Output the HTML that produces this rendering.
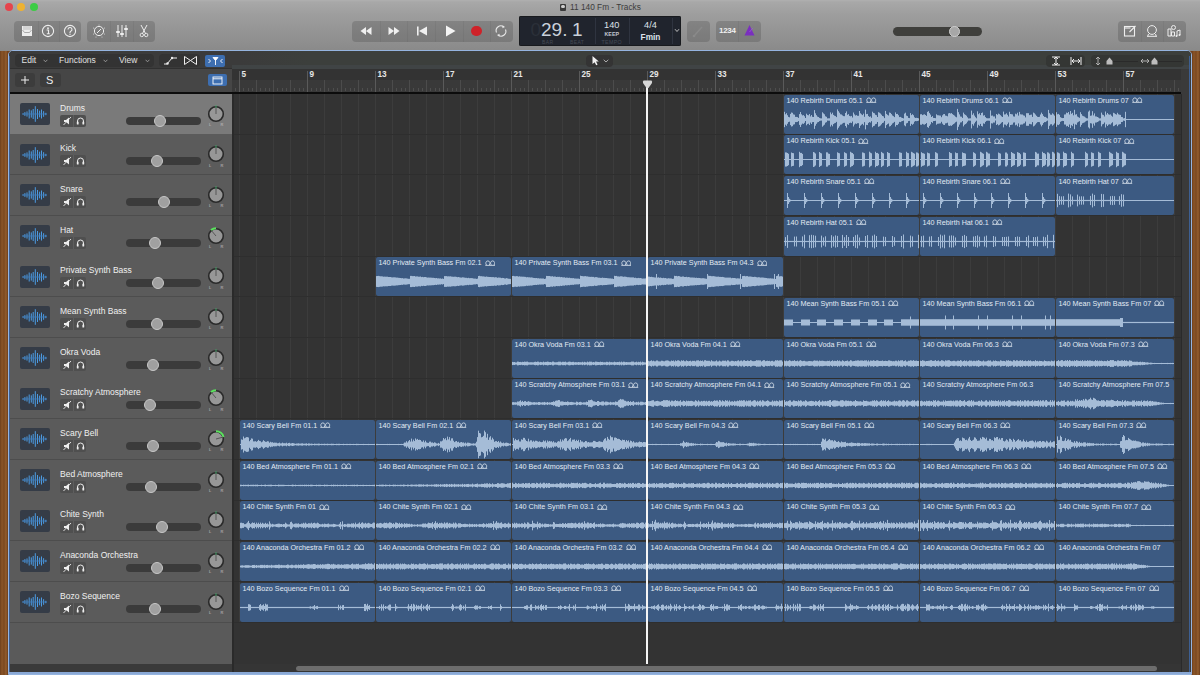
<!DOCTYPE html><html><head><meta charset="utf-8"><style>
*{box-sizing:border-box;margin:0;padding:0}
html,body{width:1200px;height:675px;overflow:hidden;background:#7b4a22;font-family:"Liberation Sans", sans-serif}
.abs{position:absolute}
#wood{position:absolute;left:0;top:0;width:1200px;height:675px;background:repeating-linear-gradient(90deg,#6e3f1c 0px,#8a5528 2px,#7a4820 4px,#935d2e 6px,#6a3b19 8px)}
#toolbar{position:absolute;left:0;top:0;width:1200px;height:51px;background:linear-gradient(#b0b0b0 0px,#a8a8a8 2px,#9e9e9e 14px,#8a8a8a 50px)}
.grp{position:absolute;background:rgba(40,40,40,0.2);border-radius:4px}
.div{position:absolute;top:0;bottom:0;width:1px;background:rgba(70,70,70,0.09)}
#frame{position:absolute;left:8px;top:50px;width:1184px;height:625px;border:1.5px solid #95b4df;border-radius:5px 5px 0 0;background:#3a3a3a;overflow:hidden}
.lbl{color:#e6e6e6;font-size:8.5px;white-space:nowrap}
.row{position:absolute;left:0;width:222px;background:#5d5d5d;border-bottom:1px solid #4c4c4c}
.reg{position:absolute;background:#3c5a82;border-radius:2px;overflow:hidden}
.rt{position:absolute;left:3px;top:1px;font-size:7.2px;color:#e3eaf3;white-space:nowrap;line-height:9px}
.rl{position:absolute;top:0;height:100%;width:1px;background:#1f3452}
</style></head><body>
<div id="wood"></div>
<div id="toolbar">
<div class="abs" style="left:5px;top:2.5px;width:8px;height:8px;border-radius:50%;background:#e6444c;border:0"></div>
<div class="abs" style="left:17.3px;top:2.5px;width:8px;height:8px;border-radius:50%;background:#eeb232;border:0"></div>
<div class="abs" style="left:30px;top:2.5px;width:8px;height:8px;border-radius:50%;background:#3ccc45;border:0"></div>
<div class="abs" style="left:559.5px;top:3.5px;width:6.5px;height:7.5px;background:#3a3a3a;border-radius:1px"></div><div class="abs" style="left:561px;top:4.5px;width:3.5px;height:3.5px;border-radius:50%;background:#d0d0d0"></div>
<div class="abs" style="left:570px;top:3px;font-size:8.3px;color:#3c3c3c;line-height:8.3px;white-space:nowrap">11 140 Fm - Tracks</div>
<div class="grp" style="left:14px;top:21px;width:67px;height:20.5px;"><div class="div" style="left:24px"></div><div class="div" style="left:45px"></div></div>
<div class="grp" style="left:87px;top:21px;width:68px;height:20.5px;"><div class="div" style="left:23px"></div><div class="div" style="left:46px"></div></div>
<div class="grp" style="left:352px;top:21px;width:161px;height:20.5px;"><div class="div" style="left:28px"></div><div class="div" style="left:55px"></div><div class="div" style="left:83px"></div><div class="div" style="left:111px"></div><div class="div" style="left:138px"></div></div>
<div class="grp" style="left:687px;top:21px;width:23px;height:20.5px;"></div>
<div class="grp" style="left:716px;top:21px;width:45px;height:20.5px;"><div class="div" style="left:22px"></div></div>
<div class="grp" style="left:1118px;top:21px;width:68px;height:20.5px;"><div class="div" style="left:23px"></div><div class="div" style="left:45px"></div></div>
<svg class="abs" style="left:20px;top:24px;" width="14" height="14" viewBox="0 0 14 14"><path d="M2,2 h10 v4 h-10z M2,6 h10 v6 h-10z" fill="#eee"/><path d="M2.5,6 l2,2.5 h5 l2,-2.5" fill="none" stroke="#999" stroke-width="0.8"/><path d="M3,2.8 h8 M3,4 h8 M3,5.2 h8" stroke="#aaa" stroke-width="0.5"/></svg>
<svg class="abs" style="left:41px;top:24px;" width="14" height="14" viewBox="0 0 14 14"><circle cx="7" cy="7" r="5.6" fill="none" stroke="#eee" stroke-width="1.1"/><circle cx="7" cy="4.2" r="0.9" fill="#eee"/><path d="M5.6,6 h1.9 v3.8 h1 M5.8,9.8 h3" fill="none" stroke="#eee" stroke-width="1.1"/></svg>
<svg class="abs" style="left:63px;top:24px;" width="14" height="14" viewBox="0 0 14 14"><circle cx="7" cy="7" r="5.6" fill="none" stroke="#eee" stroke-width="1.1"/><path d="M5,5.5 a2,2 0 1 1 2.8,1.8 q-0.8,0.4 -0.8,1.3 v0.5" fill="none" stroke="#eee" stroke-width="1.1"/><circle cx="7" cy="10.3" r="0.7" fill="#eee"/></svg>
<svg class="abs" style="left:92px;top:24px;" width="14" height="14" viewBox="0 0 14 14"><circle cx="7" cy="7" r="4.6" fill="none" stroke="#eee" stroke-width="1"/><path d="M5,9 L9,5" stroke="#eee" stroke-width="1"/><g fill="#ddd"><circle cx="7" cy="1" r="0.5"/><circle cx="1.5" cy="4" r="0.5"/><circle cx="12.5" cy="4" r="0.5"/><circle cx="1.5" cy="10" r="0.5"/><circle cx="12.5" cy="10" r="0.5"/><circle cx="4" cy="13" r="0.5"/><circle cx="10" cy="13" r="0.5"/></g></svg>
<svg class="abs" style="left:115px;top:24px;" width="14" height="14" viewBox="0 0 14 14"><path d="M3,1 v12 M7,1 v12 M11,1 v12" stroke="#eee" stroke-width="1"/><path d="M1.2,8 h3.6 M5.2,10 h3.6 M9.2,5 h3.6" stroke="#eee" stroke-width="1.8"/></svg>
<svg class="abs" style="left:137px;top:24px;" width="14" height="14" viewBox="0 0 14 14"><path d="M4,1 L8.5,9.5 M10,1 L5.5,9.5" stroke="#eee" stroke-width="1"/><circle cx="4.8" cy="11" r="1.7" fill="none" stroke="#eee" stroke-width="0.9"/><circle cx="9.2" cy="11" r="1.7" fill="none" stroke="#eee" stroke-width="0.9"/></svg>
<svg class="abs" style="left:359px;top:25px;" width="14" height="12" viewBox="0 0 14 12"><path d="M7,2 L1.5,6 L7,10z M12.5,2 L7,6 L12.5,10z" fill="#f0f0f0"/></svg>
<svg class="abs" style="left:387px;top:25px;" width="14" height="12" viewBox="0 0 14 12"><path d="M1.5,2 L7,6 L1.5,10z M7,2 L12.5,6 L7,10z" fill="#f0f0f0"/></svg>
<svg class="abs" style="left:415px;top:25px;" width="14" height="12" viewBox="0 0 14 12"><path d="M2,1.5 h1.6 v9 h-1.6z M12,1.5 L4,6 L12,10.5z" fill="#f0f0f0"/></svg>
<svg class="abs" style="left:443px;top:25px;" width="14" height="12" viewBox="0 0 14 12"><path d="M3,0.5 L12.5,6 L3,11.5z" fill="#f4f4f4"/></svg>
<div class="abs" style="left:471px;top:25.5px;width:10.5px;height:10.5px;border-radius:50%;background:#cf2229"></div>
<svg class="abs" style="left:494px;top:24px;" width="14" height="14" viewBox="0 0 14 14"><path d="M2.5,8.5 A4.8,4.8 0 0 1 9.5,2.6 M11.5,5.5 A4.8,4.8 0 0 1 4.5,11.4" fill="none" stroke="#e8e8e8" stroke-width="1.1"/><path d="M8.6,1.2 L11,2.9 L8.4,4.3z M5.4,12.8 L3,11.1 L5.6,9.7z" fill="#e8e8e8"/></svg>
<div class="abs" style="left:519px;top:16px;width:162px;height:30px;background:#20242d;border-radius:2px;box-shadow:inset 0 0 0 0.5px #111">
<div class="abs" style="left:75.5px;top:2px;width:1px;height:26px;background:#2f3440"></div>
<div class="abs" style="left:109.5px;top:2px;width:1px;height:26px;background:#2f3440"></div>
<div class="abs" style="left:153px;top:2px;width:1px;height:26px;background:#2f3440"></div>
<div class="abs" style="left:11.5px;top:4.3px;font-size:19px;color:#2b3039;line-height:19px">0</div>
<div class="abs" style="left:22px;top:4.3px;font-size:19px;color:#c9d0da;line-height:19px">29.</div>
<div class="abs" style="left:53px;top:4.3px;font-size:19px;color:#c9d0da;line-height:19px">1</div>
<div class="abs" style="left:23px;top:23.9px;font-size:5px;color:#454b56;line-height:5px;letter-spacing:0.4px">BAR</div>
<div class="abs" style="left:51px;top:23.9px;font-size:5px;color:#454b56;line-height:5px;letter-spacing:0.4px">BEAT</div>
<div class="abs" style="left:76px;top:4.7px;width:33.5px;text-align:center;font-size:9.2px;color:#dde2ea;line-height:9.2px">140</div>
<div class="abs" style="left:76px;top:16.1px;width:33.5px;text-align:center;font-size:5.3px;font-weight:bold;color:#c0c6d0;line-height:5.3px">KEEP</div>
<div class="abs" style="left:76px;top:23.9px;width:33.5px;text-align:center;font-size:5.3px;color:#454b56;line-height:5.3px;letter-spacing:0.3px">TEMPO</div>
<div class="abs" style="left:110px;top:4.7px;width:43px;text-align:center;font-size:9.2px;color:#dde2ea;line-height:9.2px">4/4</div>
<div class="abs" style="left:110px;top:16.7px;width:43px;text-align:center;font-size:8.3px;color:#dde2ea;line-height:8.3px;font-weight:bold">Fmin</div>
<svg class="abs" style="left:155px;top:12px;" width="6" height="5" viewBox="0 0 6 5"><path d="M1,1.2 L3,3.5 L5,1.2" fill="none" stroke="#ccc" stroke-width="0.9"/></svg>
</div>
<svg class="abs" style="left:691px;top:24px;" width="15" height="15" viewBox="0 0 15 15"><path d="M3,12 L11,3" stroke="#8a8a8a" stroke-width="1.4"/><circle cx="3" cy="12" r="1.3" fill="#8a8a8a"/></svg>
<div class="abs" style="left:719px;top:26px;font-size:8px;font-weight:bold;color:#f0f0f0;line-height:10px;letter-spacing:-0.3px">1234</div>
<svg class="abs" style="left:743px;top:24px;" width="13" height="13" viewBox="0 0 13 13"><path d="M6.5,1 L11.5,11.5 H1.5z" fill="#7a2fbf"/><path d="M6.5,8 L10,4" stroke="#9b5ad8" stroke-width="0.8"/></svg>
<div class="abs" style="left:893px;top:26.5px;width:89px;height:9px;border-radius:4.5px;background:#3f3f3c"></div>
<div class="abs" style="left:948.5px;top:25.5px;width:11px;height:11px;border-radius:50%;background:#a7a7a7;border:1px solid #cfcfcf"></div>
<svg class="abs" style="left:1123px;top:24px;" width="14" height="14" viewBox="0 0 14 14"><rect x="1.5" y="2.5" width="10" height="9.5" fill="none" stroke="#eee" stroke-width="1.1"/><path d="M1.5,4 h6" stroke="#eee" stroke-width="1.1"/><path d="M6.5,8 L12.5,2" stroke="#eee" stroke-width="1.1"/></svg>
<svg class="abs" style="left:1145px;top:24px;" width="14" height="14" viewBox="0 0 14 14"><circle cx="7" cy="6" r="4.4" fill="none" stroke="#eee" stroke-width="1"/><path d="M3.5,10 L2.8,12 M10.5,10 L11.2,12 M2,12.3 h10" stroke="#eee" stroke-width="1"/></svg>
<svg class="abs" style="left:1166px;top:24px;" width="16" height="14" viewBox="0 0 16 14"><path d="M2,5 h3 v7 h-3z M5.5,8 h3 v4 h-3z" fill="none" stroke="#eee" stroke-width="1"/><circle cx="7.5" cy="3.5" r="2" fill="none" stroke="#eee" stroke-width="1"/><path d="M11,12 v-5 l3,-1 v5" fill="none" stroke="#eee" stroke-width="1"/><circle cx="10.5" cy="12" r="1" fill="#eee"/><circle cx="13.5" cy="11" r="1" fill="#eee"/></svg>
</div>
<div id="frame">
<div class="abs" style="left:-9.5px;top:-51.5px;width:1200px;height:675px">
<div class="abs" style="left:9px;top:51px;width:1182px;height:18px;background:linear-gradient(90deg,#3b3b3b 0,#3b3b3b 230px,#3c3f3c 300px,#3c3f3c 100%);border-bottom:1px solid #303030"></div>
<div class="abs" style="left:232px;top:65px;width:959px;height:4px;background:#404445"></div>
<div class="grp" style="left:586px;top:55px;width:27px;height:12px;background:#343434"></div>
<svg class="abs" style="left:591px;top:55.5px;" width="9" height="11" viewBox="0 0 9 11"><path d="M1.5,1 L1.5,9 L3.6,7.2 L5.2,10.2 L6.6,9.5 L5,6.6 L7.8,6.4z" fill="#f0f0f0"/></svg>
<svg class="abs" style="left:603px;top:59px;" width="6" height="4" viewBox="0 0 6 4"><path d="M0.7,0.8 L3,3 L5.3,0.8" fill="none" stroke="#bbb" stroke-width="0.9"/></svg>
<div class="grp" style="left:15px;top:54px;width:139px;height:13px;background:#333333"></div>
<div class="abs lbl" style="left:22px;top:54px;line-height:13px;font-size:8.5px;color:#e0e0e0">Edit</div>
<div class="abs lbl" style="left:59.5px;top:54px;line-height:13px;font-size:8.5px;color:#e0e0e0">Functions</div>
<div class="abs lbl" style="left:119.5px;top:54px;line-height:13px;font-size:8.5px;color:#e0e0e0">View</div>
<svg class="abs" style="left:43.0px;top:59px;" width="5" height="4" viewBox="0 0 5 4"><path d="M0.6,0.8 L2.5,2.8 L4.4,0.8" fill="none" stroke="#aaa" stroke-width="0.8"/></svg>
<svg class="abs" style="left:103.0px;top:59px;" width="5" height="4" viewBox="0 0 5 4"><path d="M0.6,0.8 L2.5,2.8 L4.4,0.8" fill="none" stroke="#aaa" stroke-width="0.8"/></svg>
<svg class="abs" style="left:145.0px;top:59px;" width="5" height="4" viewBox="0 0 5 4"><path d="M0.6,0.8 L2.5,2.8 L4.4,0.8" fill="none" stroke="#aaa" stroke-width="0.8"/></svg>
<div class="grp" style="left:159px;top:54px;width:41px;height:13px;background:#333333"><div class="div" style="left:21px"></div></div>
<svg class="abs" style="left:163px;top:55px;" width="15" height="11" viewBox="0 0 15 11"><path d="M1,9 L4,9 L9,3 L14,3" fill="none" stroke="#eee" stroke-width="1"/><circle cx="4.5" cy="8.5" r="1.2" fill="#eee"/><circle cx="9" cy="3" r="1.2" fill="#eee"/></svg>
<svg class="abs" style="left:183px;top:55px;" width="15" height="11" viewBox="0 0 15 11"><path d="M1.5,1.5 v8 L7.5,5.5z M13.5,1.5 v8 L7.5,5.5z" fill="none" stroke="#eee" stroke-width="1"/></svg>
<div class="abs" style="left:205px;top:55px;width:20.5px;height:12px;background:#3d6eb0;border-radius:2px"></div>
<svg class="abs" style="left:207px;top:56px;" width="17" height="10" viewBox="0 0 17 10"><path d="M1.5,3 L3.5,5 L1.5,7 M15.5,3 L13.5,5 L15.5,7" fill="none" stroke="#fff" stroke-width="0.9"/><path d="M6,1.5 h5 L8.5,4.5z M8.5,4 v5" fill="#fff" stroke="#fff" stroke-width="0.9"/></svg>
<div class="grp" style="left:1046px;top:55px;width:39px;height:12px;background:#343634"></div>
<svg class="abs" style="left:1050px;top:56px;" width="12" height="10" viewBox="0 0 12 10"><path d="M2,1 h8 M2,9 h8 M6,1 v8 M4,3 l2,-2 l2,2 M4,7 l2,2 l2,-2" fill="none" stroke="#eee" stroke-width="1"/></svg>
<svg class="abs" style="left:1070px;top:56px;" width="12" height="10" viewBox="0 0 12 10"><path d="M1,1 v8 M11,1 v8 M2,5 h8 M4,3 l-2,2 l2,2 M8,3 l2,2 l-2,2" fill="none" stroke="#eee" stroke-width="1"/></svg>
<div class="grp" style="left:1091px;top:55px;width:93px;height:12px;background:#343634"></div>
<svg class="abs" style="left:1094px;top:56px;" width="8" height="10" viewBox="0 0 8 10"><path d="M4,1 v8 M2,3 l2,-2 l2,2 M2,7 l2,2 l2,-2" fill="none" stroke="#bbb" stroke-width="0.9"/></svg>
<div class="abs" style="left:1108px;top:61px;width:30px;height:1px;background:#2a2a2a"></div>
<svg class="abs" style="left:1106px;top:57px;" width="7" height="8" viewBox="0 0 7 8"><path d="M3.5,0.5 L6.5,4 V7.5 H0.5 V4z" fill="#bdbdbd"/></svg>
<svg class="abs" style="left:1140px;top:57px;" width="10" height="8" viewBox="0 0 10 8"><path d="M1,4 h8 M3,2 l-2,2 l2,2 M7,2 l2,2 l-2,2" fill="none" stroke="#bbb" stroke-width="0.9"/></svg>
<div class="abs" style="left:1152px;top:61px;width:30px;height:1px;background:#2a2a2a"></div>
<svg class="abs" style="left:1151px;top:57px;" width="7" height="8" viewBox="0 0 7 8"><path d="M3.5,0.5 L6.5,4 V7.5 H0.5 V4z" fill="#bdbdbd"/></svg>
<div class="abs" style="left:9px;top:69px;width:223px;height:23px;background:#464646"></div>
<div class="abs" style="left:15px;top:73.5px;width:20px;height:13.5px;background:#3c3c3c;border-radius:3px"></div>
<div class="abs" style="left:40px;top:73.5px;width:21px;height:13.5px;background:#3c3c3c;border-radius:3px"></div>
<svg class="abs" style="left:20px;top:75px;" width="10" height="10" viewBox="0 0 10 10"><path d="M5,1 v8 M1,5 h8" stroke="#eee" stroke-width="1"/></svg>
<div class="abs" style="left:46.5px;top:73px;font-size:11px;color:#eee;line-height:14px">S</div>
<div class="abs" style="left:208px;top:74px;width:19.5px;height:12.5px;background:#3d6eb0;border-radius:2px"></div>
<svg class="abs" style="left:212px;top:76px;" width="11" height="9" viewBox="0 0 11 9"><rect x="1" y="1" width="9" height="7" fill="none" stroke="#fff" stroke-width="0.9"/><path d="M1,2.8 h9" stroke="#fff" stroke-width="0.9"/></svg>
<div class="abs" style="left:232px;top:69px;width:949px;height:11px;background:#333333"></div>
<div class="abs" style="left:232px;top:80px;width:949px;height:12px;background:#393939"></div>
<div class="abs" style="left:1181px;top:69px;width:10px;height:23px;background:#3a3a3a"></div>
<div class="abs" style="left:235.25px;top:88px;width:1px;height:3.5px;background:#4e4e4e"></div><div class="abs" style="left:239.50px;top:71.5px;width:1px;height:20.5px;background:#5a5a5a"></div><div class="abs" style="left:243.75px;top:88px;width:1px;height:3.5px;background:#4e4e4e"></div><div class="abs" style="left:248.00px;top:88px;width:1px;height:3.5px;background:#4e4e4e"></div><div class="abs" style="left:252.25px;top:88px;width:1px;height:3.5px;background:#4e4e4e"></div><div class="abs" style="left:256.50px;top:80px;width:1px;height:12px;background:#4c4c4c"></div><div class="abs" style="left:260.75px;top:88px;width:1px;height:3.5px;background:#4e4e4e"></div><div class="abs" style="left:265.00px;top:88px;width:1px;height:3.5px;background:#4e4e4e"></div><div class="abs" style="left:269.25px;top:88px;width:1px;height:3.5px;background:#4e4e4e"></div><div class="abs" style="left:273.50px;top:80px;width:1px;height:12px;background:#4c4c4c"></div><div class="abs" style="left:277.75px;top:88px;width:1px;height:3.5px;background:#4e4e4e"></div><div class="abs" style="left:282.00px;top:88px;width:1px;height:3.5px;background:#4e4e4e"></div><div class="abs" style="left:286.25px;top:88px;width:1px;height:3.5px;background:#4e4e4e"></div><div class="abs" style="left:290.50px;top:80px;width:1px;height:12px;background:#4c4c4c"></div><div class="abs" style="left:294.75px;top:88px;width:1px;height:3.5px;background:#4e4e4e"></div><div class="abs" style="left:299.00px;top:88px;width:1px;height:3.5px;background:#4e4e4e"></div><div class="abs" style="left:303.25px;top:88px;width:1px;height:3.5px;background:#4e4e4e"></div><div class="abs" style="left:307.50px;top:71.5px;width:1px;height:20.5px;background:#5a5a5a"></div><div class="abs" style="left:311.75px;top:88px;width:1px;height:3.5px;background:#4e4e4e"></div><div class="abs" style="left:316.00px;top:88px;width:1px;height:3.5px;background:#4e4e4e"></div><div class="abs" style="left:320.25px;top:88px;width:1px;height:3.5px;background:#4e4e4e"></div><div class="abs" style="left:324.50px;top:80px;width:1px;height:12px;background:#4c4c4c"></div><div class="abs" style="left:328.75px;top:88px;width:1px;height:3.5px;background:#4e4e4e"></div><div class="abs" style="left:333.00px;top:88px;width:1px;height:3.5px;background:#4e4e4e"></div><div class="abs" style="left:337.25px;top:88px;width:1px;height:3.5px;background:#4e4e4e"></div><div class="abs" style="left:341.50px;top:80px;width:1px;height:12px;background:#4c4c4c"></div><div class="abs" style="left:345.75px;top:88px;width:1px;height:3.5px;background:#4e4e4e"></div><div class="abs" style="left:350.00px;top:88px;width:1px;height:3.5px;background:#4e4e4e"></div><div class="abs" style="left:354.25px;top:88px;width:1px;height:3.5px;background:#4e4e4e"></div><div class="abs" style="left:358.50px;top:80px;width:1px;height:12px;background:#4c4c4c"></div><div class="abs" style="left:362.75px;top:88px;width:1px;height:3.5px;background:#4e4e4e"></div><div class="abs" style="left:367.00px;top:88px;width:1px;height:3.5px;background:#4e4e4e"></div><div class="abs" style="left:371.25px;top:88px;width:1px;height:3.5px;background:#4e4e4e"></div><div class="abs" style="left:375.50px;top:71.5px;width:1px;height:20.5px;background:#5a5a5a"></div><div class="abs" style="left:379.75px;top:88px;width:1px;height:3.5px;background:#4e4e4e"></div><div class="abs" style="left:384.00px;top:88px;width:1px;height:3.5px;background:#4e4e4e"></div><div class="abs" style="left:388.25px;top:88px;width:1px;height:3.5px;background:#4e4e4e"></div><div class="abs" style="left:392.50px;top:80px;width:1px;height:12px;background:#4c4c4c"></div><div class="abs" style="left:396.75px;top:88px;width:1px;height:3.5px;background:#4e4e4e"></div><div class="abs" style="left:401.00px;top:88px;width:1px;height:3.5px;background:#4e4e4e"></div><div class="abs" style="left:405.25px;top:88px;width:1px;height:3.5px;background:#4e4e4e"></div><div class="abs" style="left:409.50px;top:80px;width:1px;height:12px;background:#4c4c4c"></div><div class="abs" style="left:413.75px;top:88px;width:1px;height:3.5px;background:#4e4e4e"></div><div class="abs" style="left:418.00px;top:88px;width:1px;height:3.5px;background:#4e4e4e"></div><div class="abs" style="left:422.25px;top:88px;width:1px;height:3.5px;background:#4e4e4e"></div><div class="abs" style="left:426.50px;top:80px;width:1px;height:12px;background:#4c4c4c"></div><div class="abs" style="left:430.75px;top:88px;width:1px;height:3.5px;background:#4e4e4e"></div><div class="abs" style="left:435.00px;top:88px;width:1px;height:3.5px;background:#4e4e4e"></div><div class="abs" style="left:439.25px;top:88px;width:1px;height:3.5px;background:#4e4e4e"></div><div class="abs" style="left:443.50px;top:71.5px;width:1px;height:20.5px;background:#5a5a5a"></div><div class="abs" style="left:447.75px;top:88px;width:1px;height:3.5px;background:#4e4e4e"></div><div class="abs" style="left:452.00px;top:88px;width:1px;height:3.5px;background:#4e4e4e"></div><div class="abs" style="left:456.25px;top:88px;width:1px;height:3.5px;background:#4e4e4e"></div><div class="abs" style="left:460.50px;top:80px;width:1px;height:12px;background:#4c4c4c"></div><div class="abs" style="left:464.75px;top:88px;width:1px;height:3.5px;background:#4e4e4e"></div><div class="abs" style="left:469.00px;top:88px;width:1px;height:3.5px;background:#4e4e4e"></div><div class="abs" style="left:473.25px;top:88px;width:1px;height:3.5px;background:#4e4e4e"></div><div class="abs" style="left:477.50px;top:80px;width:1px;height:12px;background:#4c4c4c"></div><div class="abs" style="left:481.75px;top:88px;width:1px;height:3.5px;background:#4e4e4e"></div><div class="abs" style="left:486.00px;top:88px;width:1px;height:3.5px;background:#4e4e4e"></div><div class="abs" style="left:490.25px;top:88px;width:1px;height:3.5px;background:#4e4e4e"></div><div class="abs" style="left:494.50px;top:80px;width:1px;height:12px;background:#4c4c4c"></div><div class="abs" style="left:498.75px;top:88px;width:1px;height:3.5px;background:#4e4e4e"></div><div class="abs" style="left:503.00px;top:88px;width:1px;height:3.5px;background:#4e4e4e"></div><div class="abs" style="left:507.25px;top:88px;width:1px;height:3.5px;background:#4e4e4e"></div><div class="abs" style="left:511.50px;top:71.5px;width:1px;height:20.5px;background:#5a5a5a"></div><div class="abs" style="left:515.75px;top:88px;width:1px;height:3.5px;background:#4e4e4e"></div><div class="abs" style="left:520.00px;top:88px;width:1px;height:3.5px;background:#4e4e4e"></div><div class="abs" style="left:524.25px;top:88px;width:1px;height:3.5px;background:#4e4e4e"></div><div class="abs" style="left:528.50px;top:80px;width:1px;height:12px;background:#4c4c4c"></div><div class="abs" style="left:532.75px;top:88px;width:1px;height:3.5px;background:#4e4e4e"></div><div class="abs" style="left:537.00px;top:88px;width:1px;height:3.5px;background:#4e4e4e"></div><div class="abs" style="left:541.25px;top:88px;width:1px;height:3.5px;background:#4e4e4e"></div><div class="abs" style="left:545.50px;top:80px;width:1px;height:12px;background:#4c4c4c"></div><div class="abs" style="left:549.75px;top:88px;width:1px;height:3.5px;background:#4e4e4e"></div><div class="abs" style="left:554.00px;top:88px;width:1px;height:3.5px;background:#4e4e4e"></div><div class="abs" style="left:558.25px;top:88px;width:1px;height:3.5px;background:#4e4e4e"></div><div class="abs" style="left:562.50px;top:80px;width:1px;height:12px;background:#4c4c4c"></div><div class="abs" style="left:566.75px;top:88px;width:1px;height:3.5px;background:#4e4e4e"></div><div class="abs" style="left:571.00px;top:88px;width:1px;height:3.5px;background:#4e4e4e"></div><div class="abs" style="left:575.25px;top:88px;width:1px;height:3.5px;background:#4e4e4e"></div><div class="abs" style="left:579.50px;top:71.5px;width:1px;height:20.5px;background:#5a5a5a"></div><div class="abs" style="left:583.75px;top:88px;width:1px;height:3.5px;background:#4e4e4e"></div><div class="abs" style="left:588.00px;top:88px;width:1px;height:3.5px;background:#4e4e4e"></div><div class="abs" style="left:592.25px;top:88px;width:1px;height:3.5px;background:#4e4e4e"></div><div class="abs" style="left:596.50px;top:80px;width:1px;height:12px;background:#4c4c4c"></div><div class="abs" style="left:600.75px;top:88px;width:1px;height:3.5px;background:#4e4e4e"></div><div class="abs" style="left:605.00px;top:88px;width:1px;height:3.5px;background:#4e4e4e"></div><div class="abs" style="left:609.25px;top:88px;width:1px;height:3.5px;background:#4e4e4e"></div><div class="abs" style="left:613.50px;top:80px;width:1px;height:12px;background:#4c4c4c"></div><div class="abs" style="left:617.75px;top:88px;width:1px;height:3.5px;background:#4e4e4e"></div><div class="abs" style="left:622.00px;top:88px;width:1px;height:3.5px;background:#4e4e4e"></div><div class="abs" style="left:626.25px;top:88px;width:1px;height:3.5px;background:#4e4e4e"></div><div class="abs" style="left:630.50px;top:80px;width:1px;height:12px;background:#4c4c4c"></div><div class="abs" style="left:634.75px;top:88px;width:1px;height:3.5px;background:#4e4e4e"></div><div class="abs" style="left:639.00px;top:88px;width:1px;height:3.5px;background:#4e4e4e"></div><div class="abs" style="left:643.25px;top:88px;width:1px;height:3.5px;background:#4e4e4e"></div><div class="abs" style="left:647.50px;top:71.5px;width:1px;height:20.5px;background:#5a5a5a"></div><div class="abs" style="left:651.75px;top:88px;width:1px;height:3.5px;background:#4e4e4e"></div><div class="abs" style="left:656.00px;top:88px;width:1px;height:3.5px;background:#4e4e4e"></div><div class="abs" style="left:660.25px;top:88px;width:1px;height:3.5px;background:#4e4e4e"></div><div class="abs" style="left:664.50px;top:80px;width:1px;height:12px;background:#4c4c4c"></div><div class="abs" style="left:668.75px;top:88px;width:1px;height:3.5px;background:#4e4e4e"></div><div class="abs" style="left:673.00px;top:88px;width:1px;height:3.5px;background:#4e4e4e"></div><div class="abs" style="left:677.25px;top:88px;width:1px;height:3.5px;background:#4e4e4e"></div><div class="abs" style="left:681.50px;top:80px;width:1px;height:12px;background:#4c4c4c"></div><div class="abs" style="left:685.75px;top:88px;width:1px;height:3.5px;background:#4e4e4e"></div><div class="abs" style="left:690.00px;top:88px;width:1px;height:3.5px;background:#4e4e4e"></div><div class="abs" style="left:694.25px;top:88px;width:1px;height:3.5px;background:#4e4e4e"></div><div class="abs" style="left:698.50px;top:80px;width:1px;height:12px;background:#4c4c4c"></div><div class="abs" style="left:702.75px;top:88px;width:1px;height:3.5px;background:#4e4e4e"></div><div class="abs" style="left:707.00px;top:88px;width:1px;height:3.5px;background:#4e4e4e"></div><div class="abs" style="left:711.25px;top:88px;width:1px;height:3.5px;background:#4e4e4e"></div><div class="abs" style="left:715.50px;top:71.5px;width:1px;height:20.5px;background:#5a5a5a"></div><div class="abs" style="left:719.75px;top:88px;width:1px;height:3.5px;background:#4e4e4e"></div><div class="abs" style="left:724.00px;top:88px;width:1px;height:3.5px;background:#4e4e4e"></div><div class="abs" style="left:728.25px;top:88px;width:1px;height:3.5px;background:#4e4e4e"></div><div class="abs" style="left:732.50px;top:80px;width:1px;height:12px;background:#4c4c4c"></div><div class="abs" style="left:736.75px;top:88px;width:1px;height:3.5px;background:#4e4e4e"></div><div class="abs" style="left:741.00px;top:88px;width:1px;height:3.5px;background:#4e4e4e"></div><div class="abs" style="left:745.25px;top:88px;width:1px;height:3.5px;background:#4e4e4e"></div><div class="abs" style="left:749.50px;top:80px;width:1px;height:12px;background:#4c4c4c"></div><div class="abs" style="left:753.75px;top:88px;width:1px;height:3.5px;background:#4e4e4e"></div><div class="abs" style="left:758.00px;top:88px;width:1px;height:3.5px;background:#4e4e4e"></div><div class="abs" style="left:762.25px;top:88px;width:1px;height:3.5px;background:#4e4e4e"></div><div class="abs" style="left:766.50px;top:80px;width:1px;height:12px;background:#4c4c4c"></div><div class="abs" style="left:770.75px;top:88px;width:1px;height:3.5px;background:#4e4e4e"></div><div class="abs" style="left:775.00px;top:88px;width:1px;height:3.5px;background:#4e4e4e"></div><div class="abs" style="left:779.25px;top:88px;width:1px;height:3.5px;background:#4e4e4e"></div><div class="abs" style="left:783.50px;top:71.5px;width:1px;height:20.5px;background:#5a5a5a"></div><div class="abs" style="left:787.75px;top:88px;width:1px;height:3.5px;background:#4e4e4e"></div><div class="abs" style="left:792.00px;top:88px;width:1px;height:3.5px;background:#4e4e4e"></div><div class="abs" style="left:796.25px;top:88px;width:1px;height:3.5px;background:#4e4e4e"></div><div class="abs" style="left:800.50px;top:80px;width:1px;height:12px;background:#4c4c4c"></div><div class="abs" style="left:804.75px;top:88px;width:1px;height:3.5px;background:#4e4e4e"></div><div class="abs" style="left:809.00px;top:88px;width:1px;height:3.5px;background:#4e4e4e"></div><div class="abs" style="left:813.25px;top:88px;width:1px;height:3.5px;background:#4e4e4e"></div><div class="abs" style="left:817.50px;top:80px;width:1px;height:12px;background:#4c4c4c"></div><div class="abs" style="left:821.75px;top:88px;width:1px;height:3.5px;background:#4e4e4e"></div><div class="abs" style="left:826.00px;top:88px;width:1px;height:3.5px;background:#4e4e4e"></div><div class="abs" style="left:830.25px;top:88px;width:1px;height:3.5px;background:#4e4e4e"></div><div class="abs" style="left:834.50px;top:80px;width:1px;height:12px;background:#4c4c4c"></div><div class="abs" style="left:838.75px;top:88px;width:1px;height:3.5px;background:#4e4e4e"></div><div class="abs" style="left:843.00px;top:88px;width:1px;height:3.5px;background:#4e4e4e"></div><div class="abs" style="left:847.25px;top:88px;width:1px;height:3.5px;background:#4e4e4e"></div><div class="abs" style="left:851.50px;top:71.5px;width:1px;height:20.5px;background:#5a5a5a"></div><div class="abs" style="left:855.75px;top:88px;width:1px;height:3.5px;background:#4e4e4e"></div><div class="abs" style="left:860.00px;top:88px;width:1px;height:3.5px;background:#4e4e4e"></div><div class="abs" style="left:864.25px;top:88px;width:1px;height:3.5px;background:#4e4e4e"></div><div class="abs" style="left:868.50px;top:80px;width:1px;height:12px;background:#4c4c4c"></div><div class="abs" style="left:872.75px;top:88px;width:1px;height:3.5px;background:#4e4e4e"></div><div class="abs" style="left:877.00px;top:88px;width:1px;height:3.5px;background:#4e4e4e"></div><div class="abs" style="left:881.25px;top:88px;width:1px;height:3.5px;background:#4e4e4e"></div><div class="abs" style="left:885.50px;top:80px;width:1px;height:12px;background:#4c4c4c"></div><div class="abs" style="left:889.75px;top:88px;width:1px;height:3.5px;background:#4e4e4e"></div><div class="abs" style="left:894.00px;top:88px;width:1px;height:3.5px;background:#4e4e4e"></div><div class="abs" style="left:898.25px;top:88px;width:1px;height:3.5px;background:#4e4e4e"></div><div class="abs" style="left:902.50px;top:80px;width:1px;height:12px;background:#4c4c4c"></div><div class="abs" style="left:906.75px;top:88px;width:1px;height:3.5px;background:#4e4e4e"></div><div class="abs" style="left:911.00px;top:88px;width:1px;height:3.5px;background:#4e4e4e"></div><div class="abs" style="left:915.25px;top:88px;width:1px;height:3.5px;background:#4e4e4e"></div><div class="abs" style="left:919.50px;top:71.5px;width:1px;height:20.5px;background:#5a5a5a"></div><div class="abs" style="left:923.75px;top:88px;width:1px;height:3.5px;background:#4e4e4e"></div><div class="abs" style="left:928.00px;top:88px;width:1px;height:3.5px;background:#4e4e4e"></div><div class="abs" style="left:932.25px;top:88px;width:1px;height:3.5px;background:#4e4e4e"></div><div class="abs" style="left:936.50px;top:80px;width:1px;height:12px;background:#4c4c4c"></div><div class="abs" style="left:940.75px;top:88px;width:1px;height:3.5px;background:#4e4e4e"></div><div class="abs" style="left:945.00px;top:88px;width:1px;height:3.5px;background:#4e4e4e"></div><div class="abs" style="left:949.25px;top:88px;width:1px;height:3.5px;background:#4e4e4e"></div><div class="abs" style="left:953.50px;top:80px;width:1px;height:12px;background:#4c4c4c"></div><div class="abs" style="left:957.75px;top:88px;width:1px;height:3.5px;background:#4e4e4e"></div><div class="abs" style="left:962.00px;top:88px;width:1px;height:3.5px;background:#4e4e4e"></div><div class="abs" style="left:966.25px;top:88px;width:1px;height:3.5px;background:#4e4e4e"></div><div class="abs" style="left:970.50px;top:80px;width:1px;height:12px;background:#4c4c4c"></div><div class="abs" style="left:974.75px;top:88px;width:1px;height:3.5px;background:#4e4e4e"></div><div class="abs" style="left:979.00px;top:88px;width:1px;height:3.5px;background:#4e4e4e"></div><div class="abs" style="left:983.25px;top:88px;width:1px;height:3.5px;background:#4e4e4e"></div><div class="abs" style="left:987.50px;top:71.5px;width:1px;height:20.5px;background:#5a5a5a"></div><div class="abs" style="left:991.75px;top:88px;width:1px;height:3.5px;background:#4e4e4e"></div><div class="abs" style="left:996.00px;top:88px;width:1px;height:3.5px;background:#4e4e4e"></div><div class="abs" style="left:1000.25px;top:88px;width:1px;height:3.5px;background:#4e4e4e"></div><div class="abs" style="left:1004.50px;top:80px;width:1px;height:12px;background:#4c4c4c"></div><div class="abs" style="left:1008.75px;top:88px;width:1px;height:3.5px;background:#4e4e4e"></div><div class="abs" style="left:1013.00px;top:88px;width:1px;height:3.5px;background:#4e4e4e"></div><div class="abs" style="left:1017.25px;top:88px;width:1px;height:3.5px;background:#4e4e4e"></div><div class="abs" style="left:1021.50px;top:80px;width:1px;height:12px;background:#4c4c4c"></div><div class="abs" style="left:1025.75px;top:88px;width:1px;height:3.5px;background:#4e4e4e"></div><div class="abs" style="left:1030.00px;top:88px;width:1px;height:3.5px;background:#4e4e4e"></div><div class="abs" style="left:1034.25px;top:88px;width:1px;height:3.5px;background:#4e4e4e"></div><div class="abs" style="left:1038.50px;top:80px;width:1px;height:12px;background:#4c4c4c"></div><div class="abs" style="left:1042.75px;top:88px;width:1px;height:3.5px;background:#4e4e4e"></div><div class="abs" style="left:1047.00px;top:88px;width:1px;height:3.5px;background:#4e4e4e"></div><div class="abs" style="left:1051.25px;top:88px;width:1px;height:3.5px;background:#4e4e4e"></div><div class="abs" style="left:1055.50px;top:71.5px;width:1px;height:20.5px;background:#5a5a5a"></div><div class="abs" style="left:1059.75px;top:88px;width:1px;height:3.5px;background:#4e4e4e"></div><div class="abs" style="left:1064.00px;top:88px;width:1px;height:3.5px;background:#4e4e4e"></div><div class="abs" style="left:1068.25px;top:88px;width:1px;height:3.5px;background:#4e4e4e"></div><div class="abs" style="left:1072.50px;top:80px;width:1px;height:12px;background:#4c4c4c"></div><div class="abs" style="left:1076.75px;top:88px;width:1px;height:3.5px;background:#4e4e4e"></div><div class="abs" style="left:1081.00px;top:88px;width:1px;height:3.5px;background:#4e4e4e"></div><div class="abs" style="left:1085.25px;top:88px;width:1px;height:3.5px;background:#4e4e4e"></div><div class="abs" style="left:1089.50px;top:80px;width:1px;height:12px;background:#4c4c4c"></div><div class="abs" style="left:1093.75px;top:88px;width:1px;height:3.5px;background:#4e4e4e"></div><div class="abs" style="left:1098.00px;top:88px;width:1px;height:3.5px;background:#4e4e4e"></div><div class="abs" style="left:1102.25px;top:88px;width:1px;height:3.5px;background:#4e4e4e"></div><div class="abs" style="left:1106.50px;top:80px;width:1px;height:12px;background:#4c4c4c"></div><div class="abs" style="left:1110.75px;top:88px;width:1px;height:3.5px;background:#4e4e4e"></div><div class="abs" style="left:1115.00px;top:88px;width:1px;height:3.5px;background:#4e4e4e"></div><div class="abs" style="left:1119.25px;top:88px;width:1px;height:3.5px;background:#4e4e4e"></div><div class="abs" style="left:1123.50px;top:71.5px;width:1px;height:20.5px;background:#5a5a5a"></div><div class="abs" style="left:1127.75px;top:88px;width:1px;height:3.5px;background:#4e4e4e"></div><div class="abs" style="left:1132.00px;top:88px;width:1px;height:3.5px;background:#4e4e4e"></div><div class="abs" style="left:1136.25px;top:88px;width:1px;height:3.5px;background:#4e4e4e"></div><div class="abs" style="left:1140.50px;top:80px;width:1px;height:12px;background:#4c4c4c"></div><div class="abs" style="left:1144.75px;top:88px;width:1px;height:3.5px;background:#4e4e4e"></div><div class="abs" style="left:1149.00px;top:88px;width:1px;height:3.5px;background:#4e4e4e"></div><div class="abs" style="left:1153.25px;top:88px;width:1px;height:3.5px;background:#4e4e4e"></div><div class="abs" style="left:1157.50px;top:80px;width:1px;height:12px;background:#4c4c4c"></div><div class="abs" style="left:1161.75px;top:88px;width:1px;height:3.5px;background:#4e4e4e"></div><div class="abs" style="left:1166.00px;top:88px;width:1px;height:3.5px;background:#4e4e4e"></div><div class="abs" style="left:1170.25px;top:88px;width:1px;height:3.5px;background:#4e4e4e"></div><div class="abs" style="left:1174.50px;top:80px;width:1px;height:12px;background:#4c4c4c"></div><div class="abs" style="left:1178.75px;top:88px;width:1px;height:3.5px;background:#4e4e4e"></div>
<div class="abs" style="left:242.0px;top:70.5px;font-size:8.2px;font-weight:bold;color:#e6e6e6;line-height:9px">5</div>
<div class="abs" style="left:310.0px;top:70.5px;font-size:8.2px;font-weight:bold;color:#e6e6e6;line-height:9px">9</div>
<div class="abs" style="left:378.0px;top:70.5px;font-size:8.2px;font-weight:bold;color:#e6e6e6;line-height:9px">13</div>
<div class="abs" style="left:446.0px;top:70.5px;font-size:8.2px;font-weight:bold;color:#e6e6e6;line-height:9px">17</div>
<div class="abs" style="left:514.0px;top:70.5px;font-size:8.2px;font-weight:bold;color:#e6e6e6;line-height:9px">21</div>
<div class="abs" style="left:582.0px;top:70.5px;font-size:8.2px;font-weight:bold;color:#e6e6e6;line-height:9px">25</div>
<div class="abs" style="left:650.0px;top:70.5px;font-size:8.2px;font-weight:bold;color:#e6e6e6;line-height:9px">29</div>
<div class="abs" style="left:718.0px;top:70.5px;font-size:8.2px;font-weight:bold;color:#e6e6e6;line-height:9px">33</div>
<div class="abs" style="left:786.0px;top:70.5px;font-size:8.2px;font-weight:bold;color:#e6e6e6;line-height:9px">37</div>
<div class="abs" style="left:854.0px;top:70.5px;font-size:8.2px;font-weight:bold;color:#e6e6e6;line-height:9px">41</div>
<div class="abs" style="left:922.0px;top:70.5px;font-size:8.2px;font-weight:bold;color:#e6e6e6;line-height:9px">45</div>
<div class="abs" style="left:990.0px;top:70.5px;font-size:8.2px;font-weight:bold;color:#e6e6e6;line-height:9px">49</div>
<div class="abs" style="left:1058.0px;top:70.5px;font-size:8.2px;font-weight:bold;color:#e6e6e6;line-height:9px">53</div>
<div class="abs" style="left:1126.0px;top:70.5px;font-size:8.2px;font-weight:bold;color:#e6e6e6;line-height:9px">57</div>
<div class="abs" style="left:1194.0px;top:70.5px;font-size:8.2px;font-weight:bold;color:#e6e6e6;line-height:9px">61</div>
<div class="abs" style="left:9px;top:92px;width:1172px;height:2px;background:#0c0c0c"></div>
<div class="abs" style="left:9px;top:94px;width:223px;height:570px;background:#5a5a5a"></div>
<div class="abs" style="left:10.5px;top:94.00px;width:221.5px;height:40.667px;background:#7a7a7a"></div>
<div class="abs" style="left:10.5px;top:134.27px;width:221.5px;height:1px;background:#4d4d4d"></div>
<div class="abs" style="left:20px;top:103.50px;width:30.8px;height:22px;background:#353c47;border-radius:2px"></div>
<svg class="abs" style="left:20px;top:103.5px;" width="31" height="22" viewBox="0 0 31 22"><g stroke="#4c9be3" stroke-width="1"><path d="M3.0,10.20 V11.80"/><path d="M4.9,9.10 V12.90"/><path d="M7.0,8.40 V13.60"/><path d="M9.2,6.50 V15.50"/><path d="M11.3,7.40 V14.60"/><path d="M13.2,6.00 V16.00"/><path d="M15.3,3.20 V18.80"/><path d="M17.5,6.00 V16.00"/><path d="M19.6,7.70 V14.30"/><path d="M21.5,6.50 V15.50"/><path d="M23.6,8.20 V13.80"/><path d="M25.8,9.80 V12.20"/></g><path d="M3,11 H27" stroke="#3f7fbf" stroke-width="0.8"/></svg>
<div class="abs lbl" style="left:60.5px;top:103.10px;line-height:11px;font-size:8.5px;color:#f0f0f0">Drums</div>
<div class="abs" style="left:60.5px;top:115.00px;width:26px;height:12px;background:#4f4f4f;border-radius:2px"></div>
<div class="abs" style="left:73.5px;top:115.00px;width:1px;height:12px;background:#5e5e5e"></div>
<svg class="abs" style="left:62px;top:116.0px;" width="11" height="10" viewBox="0 0 11 10"><path d="M2,4 h2 l3,-2.5 v7 l-3,-2.5 h-2z" fill="#eee"/><path d="M1.5,9 L9,1" stroke="#eee" stroke-width="0.9"/></svg>
<svg class="abs" style="left:75px;top:116.0px;" width="11" height="10" viewBox="0 0 11 10"><path d="M2.5,7.5 V5 a3,3 0 0 1 6,0 V7.5" fill="none" stroke="#eee" stroke-width="1"/><rect x="1.8" y="5.5" width="1.8" height="3" rx="0.6" fill="#eee"/><rect x="7.4" y="5.5" width="1.8" height="3" rx="0.6" fill="#eee"/></svg>
<div class="abs" style="left:126.5px;top:117.00px;width:75px;height:8px;border-radius:4px;background:#3b3b3b"></div>
<div class="abs" style="left:154px;top:115.00px;width:12px;height:12px;border-radius:50%;background:#a0a0a0;border:1.2px solid #c8c8c8"></div>
<svg class="abs" style="left:207.3px;top:105.3px;" width="18" height="18" viewBox="0 0 18 18"><circle cx="9" cy="9" r="7.3" fill="#979797" stroke="#2a2a2a" stroke-width="1.6"/><path d="M9,0.2 V3" stroke="#3fae6a" stroke-width="0.9"/><path d="M9,9 L9.00,2.50" stroke="#3a3a3a" stroke-width="0.7"/></svg>
<div class="abs" style="left:209.5px;top:123.50px;font-size:4px;color:#c4c4c4;line-height:4px">L</div>
<div class="abs" style="left:221px;top:123.50px;font-size:4px;color:#c4c4c4;line-height:4px">R</div>
<div class="abs" style="left:10.5px;top:134.67px;width:221.5px;height:40.667px;background:#5b5b5b"></div>
<div class="abs" style="left:10.5px;top:174.93px;width:221.5px;height:1px;background:#4d4d4d"></div>
<div class="abs" style="left:20px;top:144.17px;width:30.8px;height:22px;background:#353c47;border-radius:2px"></div>
<svg class="abs" style="left:20px;top:144.16666666666666px;" width="31" height="22" viewBox="0 0 31 22"><g stroke="#4c9be3" stroke-width="1"><path d="M3.0,10.20 V11.80"/><path d="M4.9,9.10 V12.90"/><path d="M7.0,8.40 V13.60"/><path d="M9.2,6.50 V15.50"/><path d="M11.3,7.40 V14.60"/><path d="M13.2,6.00 V16.00"/><path d="M15.3,3.20 V18.80"/><path d="M17.5,6.00 V16.00"/><path d="M19.6,7.70 V14.30"/><path d="M21.5,6.50 V15.50"/><path d="M23.6,8.20 V13.80"/><path d="M25.8,9.80 V12.20"/></g><path d="M3,11 H27" stroke="#3f7fbf" stroke-width="0.8"/></svg>
<div class="abs lbl" style="left:60.5px;top:143.77px;line-height:11px;font-size:8.5px;color:#f0f0f0">Kick</div>
<div class="abs" style="left:60.5px;top:155.67px;width:26px;height:12px;background:#4f4f4f;border-radius:2px"></div>
<div class="abs" style="left:73.5px;top:155.67px;width:1px;height:12px;background:#5e5e5e"></div>
<svg class="abs" style="left:62px;top:156.66666666666666px;" width="11" height="10" viewBox="0 0 11 10"><path d="M2,4 h2 l3,-2.5 v7 l-3,-2.5 h-2z" fill="#eee"/><path d="M1.5,9 L9,1" stroke="#eee" stroke-width="0.9"/></svg>
<svg class="abs" style="left:75px;top:156.66666666666666px;" width="11" height="10" viewBox="0 0 11 10"><path d="M2.5,7.5 V5 a3,3 0 0 1 6,0 V7.5" fill="none" stroke="#eee" stroke-width="1"/><rect x="1.8" y="5.5" width="1.8" height="3" rx="0.6" fill="#eee"/><rect x="7.4" y="5.5" width="1.8" height="3" rx="0.6" fill="#eee"/></svg>
<div class="abs" style="left:126.5px;top:157.67px;width:75px;height:8px;border-radius:4px;background:#3b3b3b"></div>
<div class="abs" style="left:151px;top:155.67px;width:12px;height:12px;border-radius:50%;background:#a0a0a0;border:1.2px solid #c8c8c8"></div>
<svg class="abs" style="left:207.3px;top:145.96666666666667px;" width="18" height="18" viewBox="0 0 18 18"><circle cx="9" cy="9" r="7.3" fill="#979797" stroke="#2a2a2a" stroke-width="1.6"/><path d="M9,0.2 V3" stroke="#3fae6a" stroke-width="0.9"/><path d="M9,9 L9.00,2.50" stroke="#3a3a3a" stroke-width="0.7"/></svg>
<div class="abs" style="left:209.5px;top:164.17px;font-size:4px;color:#c4c4c4;line-height:4px">L</div>
<div class="abs" style="left:221px;top:164.17px;font-size:4px;color:#c4c4c4;line-height:4px">R</div>
<div class="abs" style="left:10.5px;top:175.33px;width:221.5px;height:40.667px;background:#5b5b5b"></div>
<div class="abs" style="left:10.5px;top:215.60px;width:221.5px;height:1px;background:#4d4d4d"></div>
<div class="abs" style="left:20px;top:184.83px;width:30.8px;height:22px;background:#353c47;border-radius:2px"></div>
<svg class="abs" style="left:20px;top:184.83333333333331px;" width="31" height="22" viewBox="0 0 31 22"><g stroke="#4c9be3" stroke-width="1"><path d="M3.0,10.20 V11.80"/><path d="M4.9,9.10 V12.90"/><path d="M7.0,8.40 V13.60"/><path d="M9.2,6.50 V15.50"/><path d="M11.3,7.40 V14.60"/><path d="M13.2,6.00 V16.00"/><path d="M15.3,3.20 V18.80"/><path d="M17.5,6.00 V16.00"/><path d="M19.6,7.70 V14.30"/><path d="M21.5,6.50 V15.50"/><path d="M23.6,8.20 V13.80"/><path d="M25.8,9.80 V12.20"/></g><path d="M3,11 H27" stroke="#3f7fbf" stroke-width="0.8"/></svg>
<div class="abs lbl" style="left:60.5px;top:184.43px;line-height:11px;font-size:8.5px;color:#f0f0f0">Snare</div>
<div class="abs" style="left:60.5px;top:196.33px;width:26px;height:12px;background:#4f4f4f;border-radius:2px"></div>
<div class="abs" style="left:73.5px;top:196.33px;width:1px;height:12px;background:#5e5e5e"></div>
<svg class="abs" style="left:62px;top:197.33333333333331px;" width="11" height="10" viewBox="0 0 11 10"><path d="M2,4 h2 l3,-2.5 v7 l-3,-2.5 h-2z" fill="#eee"/><path d="M1.5,9 L9,1" stroke="#eee" stroke-width="0.9"/></svg>
<svg class="abs" style="left:75px;top:197.33333333333331px;" width="11" height="10" viewBox="0 0 11 10"><path d="M2.5,7.5 V5 a3,3 0 0 1 6,0 V7.5" fill="none" stroke="#eee" stroke-width="1"/><rect x="1.8" y="5.5" width="1.8" height="3" rx="0.6" fill="#eee"/><rect x="7.4" y="5.5" width="1.8" height="3" rx="0.6" fill="#eee"/></svg>
<div class="abs" style="left:126.5px;top:198.33px;width:75px;height:8px;border-radius:4px;background:#3b3b3b"></div>
<div class="abs" style="left:158px;top:196.33px;width:12px;height:12px;border-radius:50%;background:#a0a0a0;border:1.2px solid #c8c8c8"></div>
<svg class="abs" style="left:207.3px;top:186.63333333333333px;" width="18" height="18" viewBox="0 0 18 18"><circle cx="9" cy="9" r="7.3" fill="#979797" stroke="#2a2a2a" stroke-width="1.6"/><path d="M9,0.2 V3" stroke="#3fae6a" stroke-width="0.9"/><path d="M9,9 L9.00,2.50" stroke="#3a3a3a" stroke-width="0.7"/></svg>
<div class="abs" style="left:209.5px;top:204.83px;font-size:4px;color:#c4c4c4;line-height:4px">L</div>
<div class="abs" style="left:221px;top:204.83px;font-size:4px;color:#c4c4c4;line-height:4px">R</div>
<div class="abs" style="left:10.5px;top:216.00px;width:221.5px;height:40.667px;background:#5b5b5b"></div>
<div class="abs" style="left:10.5px;top:256.27px;width:221.5px;height:1px;background:#4d4d4d"></div>
<div class="abs" style="left:20px;top:225.50px;width:30.8px;height:22px;background:#353c47;border-radius:2px"></div>
<svg class="abs" style="left:20px;top:225.5px;" width="31" height="22" viewBox="0 0 31 22"><g stroke="#4c9be3" stroke-width="1"><path d="M3.0,10.20 V11.80"/><path d="M4.9,9.10 V12.90"/><path d="M7.0,8.40 V13.60"/><path d="M9.2,6.50 V15.50"/><path d="M11.3,7.40 V14.60"/><path d="M13.2,6.00 V16.00"/><path d="M15.3,3.20 V18.80"/><path d="M17.5,6.00 V16.00"/><path d="M19.6,7.70 V14.30"/><path d="M21.5,6.50 V15.50"/><path d="M23.6,8.20 V13.80"/><path d="M25.8,9.80 V12.20"/></g><path d="M3,11 H27" stroke="#3f7fbf" stroke-width="0.8"/></svg>
<div class="abs lbl" style="left:60.5px;top:225.10px;line-height:11px;font-size:8.5px;color:#f0f0f0">Hat</div>
<div class="abs" style="left:60.5px;top:237.00px;width:26px;height:12px;background:#4f4f4f;border-radius:2px"></div>
<div class="abs" style="left:73.5px;top:237.00px;width:1px;height:12px;background:#5e5e5e"></div>
<svg class="abs" style="left:62px;top:238.0px;" width="11" height="10" viewBox="0 0 11 10"><path d="M2,4 h2 l3,-2.5 v7 l-3,-2.5 h-2z" fill="#eee"/><path d="M1.5,9 L9,1" stroke="#eee" stroke-width="0.9"/></svg>
<svg class="abs" style="left:75px;top:238.0px;" width="11" height="10" viewBox="0 0 11 10"><path d="M2.5,7.5 V5 a3,3 0 0 1 6,0 V7.5" fill="none" stroke="#eee" stroke-width="1"/><rect x="1.8" y="5.5" width="1.8" height="3" rx="0.6" fill="#eee"/><rect x="7.4" y="5.5" width="1.8" height="3" rx="0.6" fill="#eee"/></svg>
<div class="abs" style="left:126.5px;top:239.00px;width:75px;height:8px;border-radius:4px;background:#3b3b3b"></div>
<div class="abs" style="left:149px;top:237.00px;width:12px;height:12px;border-radius:50%;background:#a0a0a0;border:1.2px solid #c8c8c8"></div>
<svg class="abs" style="left:207.3px;top:227.3px;" width="18" height="18" viewBox="0 0 18 18"><circle cx="9" cy="9" r="7.3" fill="#979797" stroke="#2a2a2a" stroke-width="1.6"/><path d="M9,1.2 A7.8,7.8 0 0 0 3.99,3.02" fill="none" stroke="#5be35e" stroke-width="2"/><path d="M9,9 L4.82,4.02" stroke="#3a3a3a" stroke-width="0.7"/></svg>
<div class="abs" style="left:209.5px;top:245.50px;font-size:4px;color:#c4c4c4;line-height:4px">L</div>
<div class="abs" style="left:221px;top:245.50px;font-size:4px;color:#c4c4c4;line-height:4px">R</div>
<div class="abs" style="left:10.5px;top:256.67px;width:221.5px;height:40.667px;background:#5b5b5b"></div>
<div class="abs" style="left:10.5px;top:296.93px;width:221.5px;height:1px;background:#4d4d4d"></div>
<div class="abs" style="left:20px;top:266.17px;width:30.8px;height:22px;background:#353c47;border-radius:2px"></div>
<svg class="abs" style="left:20px;top:266.16666666666663px;" width="31" height="22" viewBox="0 0 31 22"><g stroke="#4c9be3" stroke-width="1"><path d="M3.0,10.20 V11.80"/><path d="M4.9,9.10 V12.90"/><path d="M7.0,8.40 V13.60"/><path d="M9.2,6.50 V15.50"/><path d="M11.3,7.40 V14.60"/><path d="M13.2,6.00 V16.00"/><path d="M15.3,3.20 V18.80"/><path d="M17.5,6.00 V16.00"/><path d="M19.6,7.70 V14.30"/><path d="M21.5,6.50 V15.50"/><path d="M23.6,8.20 V13.80"/><path d="M25.8,9.80 V12.20"/></g><path d="M3,11 H27" stroke="#3f7fbf" stroke-width="0.8"/></svg>
<div class="abs lbl" style="left:60.5px;top:265.77px;line-height:11px;font-size:8.5px;color:#f0f0f0">Private Synth Bass</div>
<div class="abs" style="left:60.5px;top:277.67px;width:26px;height:12px;background:#4f4f4f;border-radius:2px"></div>
<div class="abs" style="left:73.5px;top:277.67px;width:1px;height:12px;background:#5e5e5e"></div>
<svg class="abs" style="left:62px;top:278.66666666666663px;" width="11" height="10" viewBox="0 0 11 10"><path d="M2,4 h2 l3,-2.5 v7 l-3,-2.5 h-2z" fill="#eee"/><path d="M1.5,9 L9,1" stroke="#eee" stroke-width="0.9"/></svg>
<svg class="abs" style="left:75px;top:278.66666666666663px;" width="11" height="10" viewBox="0 0 11 10"><path d="M2.5,7.5 V5 a3,3 0 0 1 6,0 V7.5" fill="none" stroke="#eee" stroke-width="1"/><rect x="1.8" y="5.5" width="1.8" height="3" rx="0.6" fill="#eee"/><rect x="7.4" y="5.5" width="1.8" height="3" rx="0.6" fill="#eee"/></svg>
<div class="abs" style="left:126.5px;top:279.67px;width:75px;height:8px;border-radius:4px;background:#3b3b3b"></div>
<div class="abs" style="left:152px;top:277.67px;width:12px;height:12px;border-radius:50%;background:#a0a0a0;border:1.2px solid #c8c8c8"></div>
<svg class="abs" style="left:207.3px;top:267.96666666666664px;" width="18" height="18" viewBox="0 0 18 18"><circle cx="9" cy="9" r="7.3" fill="#979797" stroke="#2a2a2a" stroke-width="1.6"/><path d="M9,0.2 V3" stroke="#3fae6a" stroke-width="0.9"/><path d="M9,9 L9.00,2.50" stroke="#3a3a3a" stroke-width="0.7"/></svg>
<div class="abs" style="left:209.5px;top:286.17px;font-size:4px;color:#c4c4c4;line-height:4px">L</div>
<div class="abs" style="left:221px;top:286.17px;font-size:4px;color:#c4c4c4;line-height:4px">R</div>
<div class="abs" style="left:10.5px;top:297.33px;width:221.5px;height:40.667px;background:#5b5b5b"></div>
<div class="abs" style="left:10.5px;top:337.60px;width:221.5px;height:1px;background:#4d4d4d"></div>
<div class="abs" style="left:20px;top:306.83px;width:30.8px;height:22px;background:#353c47;border-radius:2px"></div>
<svg class="abs" style="left:20px;top:306.8333333333333px;" width="31" height="22" viewBox="0 0 31 22"><g stroke="#4c9be3" stroke-width="1"><path d="M3.0,10.20 V11.80"/><path d="M4.9,9.10 V12.90"/><path d="M7.0,8.40 V13.60"/><path d="M9.2,6.50 V15.50"/><path d="M11.3,7.40 V14.60"/><path d="M13.2,6.00 V16.00"/><path d="M15.3,3.20 V18.80"/><path d="M17.5,6.00 V16.00"/><path d="M19.6,7.70 V14.30"/><path d="M21.5,6.50 V15.50"/><path d="M23.6,8.20 V13.80"/><path d="M25.8,9.80 V12.20"/></g><path d="M3,11 H27" stroke="#3f7fbf" stroke-width="0.8"/></svg>
<div class="abs lbl" style="left:60.5px;top:306.43px;line-height:11px;font-size:8.5px;color:#f0f0f0">Mean Synth Bass</div>
<div class="abs" style="left:60.5px;top:318.33px;width:26px;height:12px;background:#4f4f4f;border-radius:2px"></div>
<div class="abs" style="left:73.5px;top:318.33px;width:1px;height:12px;background:#5e5e5e"></div>
<svg class="abs" style="left:62px;top:319.3333333333333px;" width="11" height="10" viewBox="0 0 11 10"><path d="M2,4 h2 l3,-2.5 v7 l-3,-2.5 h-2z" fill="#eee"/><path d="M1.5,9 L9,1" stroke="#eee" stroke-width="0.9"/></svg>
<svg class="abs" style="left:75px;top:319.3333333333333px;" width="11" height="10" viewBox="0 0 11 10"><path d="M2.5,7.5 V5 a3,3 0 0 1 6,0 V7.5" fill="none" stroke="#eee" stroke-width="1"/><rect x="1.8" y="5.5" width="1.8" height="3" rx="0.6" fill="#eee"/><rect x="7.4" y="5.5" width="1.8" height="3" rx="0.6" fill="#eee"/></svg>
<div class="abs" style="left:126.5px;top:320.33px;width:75px;height:8px;border-radius:4px;background:#3b3b3b"></div>
<div class="abs" style="left:151px;top:318.33px;width:12px;height:12px;border-radius:50%;background:#a0a0a0;border:1.2px solid #c8c8c8"></div>
<svg class="abs" style="left:207.3px;top:308.6333333333333px;" width="18" height="18" viewBox="0 0 18 18"><circle cx="9" cy="9" r="7.3" fill="#979797" stroke="#2a2a2a" stroke-width="1.6"/><path d="M9,0.2 V3" stroke="#3fae6a" stroke-width="0.9"/><path d="M9,9 L9.00,2.50" stroke="#3a3a3a" stroke-width="0.7"/></svg>
<div class="abs" style="left:209.5px;top:326.83px;font-size:4px;color:#c4c4c4;line-height:4px">L</div>
<div class="abs" style="left:221px;top:326.83px;font-size:4px;color:#c4c4c4;line-height:4px">R</div>
<div class="abs" style="left:10.5px;top:338.00px;width:221.5px;height:40.667px;background:#5b5b5b"></div>
<div class="abs" style="left:10.5px;top:378.27px;width:221.5px;height:1px;background:#4d4d4d"></div>
<div class="abs" style="left:20px;top:347.50px;width:30.8px;height:22px;background:#353c47;border-radius:2px"></div>
<svg class="abs" style="left:20px;top:347.5px;" width="31" height="22" viewBox="0 0 31 22"><g stroke="#4c9be3" stroke-width="1"><path d="M3.0,10.20 V11.80"/><path d="M4.9,9.10 V12.90"/><path d="M7.0,8.40 V13.60"/><path d="M9.2,6.50 V15.50"/><path d="M11.3,7.40 V14.60"/><path d="M13.2,6.00 V16.00"/><path d="M15.3,3.20 V18.80"/><path d="M17.5,6.00 V16.00"/><path d="M19.6,7.70 V14.30"/><path d="M21.5,6.50 V15.50"/><path d="M23.6,8.20 V13.80"/><path d="M25.8,9.80 V12.20"/></g><path d="M3,11 H27" stroke="#3f7fbf" stroke-width="0.8"/></svg>
<div class="abs lbl" style="left:60.5px;top:347.10px;line-height:11px;font-size:8.5px;color:#f0f0f0">Okra Voda</div>
<div class="abs" style="left:60.5px;top:359.00px;width:26px;height:12px;background:#4f4f4f;border-radius:2px"></div>
<div class="abs" style="left:73.5px;top:359.00px;width:1px;height:12px;background:#5e5e5e"></div>
<svg class="abs" style="left:62px;top:360.0px;" width="11" height="10" viewBox="0 0 11 10"><path d="M2,4 h2 l3,-2.5 v7 l-3,-2.5 h-2z" fill="#eee"/><path d="M1.5,9 L9,1" stroke="#eee" stroke-width="0.9"/></svg>
<svg class="abs" style="left:75px;top:360.0px;" width="11" height="10" viewBox="0 0 11 10"><path d="M2.5,7.5 V5 a3,3 0 0 1 6,0 V7.5" fill="none" stroke="#eee" stroke-width="1"/><rect x="1.8" y="5.5" width="1.8" height="3" rx="0.6" fill="#eee"/><rect x="7.4" y="5.5" width="1.8" height="3" rx="0.6" fill="#eee"/></svg>
<div class="abs" style="left:126.5px;top:361.00px;width:75px;height:8px;border-radius:4px;background:#3b3b3b"></div>
<div class="abs" style="left:147px;top:359.00px;width:12px;height:12px;border-radius:50%;background:#a0a0a0;border:1.2px solid #c8c8c8"></div>
<svg class="abs" style="left:207.3px;top:349.3px;" width="18" height="18" viewBox="0 0 18 18"><circle cx="9" cy="9" r="7.3" fill="#979797" stroke="#2a2a2a" stroke-width="1.6"/><path d="M9,0.2 V3" stroke="#3fae6a" stroke-width="0.9"/><path d="M9,9 L9.00,2.50" stroke="#3a3a3a" stroke-width="0.7"/></svg>
<div class="abs" style="left:209.5px;top:367.50px;font-size:4px;color:#c4c4c4;line-height:4px">L</div>
<div class="abs" style="left:221px;top:367.50px;font-size:4px;color:#c4c4c4;line-height:4px">R</div>
<div class="abs" style="left:10.5px;top:378.67px;width:221.5px;height:40.667px;background:#5b5b5b"></div>
<div class="abs" style="left:10.5px;top:418.93px;width:221.5px;height:1px;background:#4d4d4d"></div>
<div class="abs" style="left:20px;top:388.17px;width:30.8px;height:22px;background:#353c47;border-radius:2px"></div>
<svg class="abs" style="left:20px;top:388.16666666666663px;" width="31" height="22" viewBox="0 0 31 22"><g stroke="#4c9be3" stroke-width="1"><path d="M3.0,10.20 V11.80"/><path d="M4.9,9.10 V12.90"/><path d="M7.0,8.40 V13.60"/><path d="M9.2,6.50 V15.50"/><path d="M11.3,7.40 V14.60"/><path d="M13.2,6.00 V16.00"/><path d="M15.3,3.20 V18.80"/><path d="M17.5,6.00 V16.00"/><path d="M19.6,7.70 V14.30"/><path d="M21.5,6.50 V15.50"/><path d="M23.6,8.20 V13.80"/><path d="M25.8,9.80 V12.20"/></g><path d="M3,11 H27" stroke="#3f7fbf" stroke-width="0.8"/></svg>
<div class="abs lbl" style="left:60.5px;top:387.77px;line-height:11px;font-size:8.5px;color:#f0f0f0">Scratchy Atmosphere</div>
<div class="abs" style="left:60.5px;top:399.67px;width:26px;height:12px;background:#4f4f4f;border-radius:2px"></div>
<div class="abs" style="left:73.5px;top:399.67px;width:1px;height:12px;background:#5e5e5e"></div>
<svg class="abs" style="left:62px;top:400.66666666666663px;" width="11" height="10" viewBox="0 0 11 10"><path d="M2,4 h2 l3,-2.5 v7 l-3,-2.5 h-2z" fill="#eee"/><path d="M1.5,9 L9,1" stroke="#eee" stroke-width="0.9"/></svg>
<svg class="abs" style="left:75px;top:400.66666666666663px;" width="11" height="10" viewBox="0 0 11 10"><path d="M2.5,7.5 V5 a3,3 0 0 1 6,0 V7.5" fill="none" stroke="#eee" stroke-width="1"/><rect x="1.8" y="5.5" width="1.8" height="3" rx="0.6" fill="#eee"/><rect x="7.4" y="5.5" width="1.8" height="3" rx="0.6" fill="#eee"/></svg>
<div class="abs" style="left:126.5px;top:401.67px;width:75px;height:8px;border-radius:4px;background:#3b3b3b"></div>
<div class="abs" style="left:144px;top:399.67px;width:12px;height:12px;border-radius:50%;background:#a0a0a0;border:1.2px solid #c8c8c8"></div>
<svg class="abs" style="left:207.3px;top:389.96666666666664px;" width="18" height="18" viewBox="0 0 18 18"><circle cx="9" cy="9" r="7.3" fill="#979797" stroke="#2a2a2a" stroke-width="1.6"/><path d="M9,1.2 A7.8,7.8 0 0 0 3.99,3.02" fill="none" stroke="#5be35e" stroke-width="2"/><path d="M9,9 L4.82,4.02" stroke="#3a3a3a" stroke-width="0.7"/></svg>
<div class="abs" style="left:209.5px;top:408.17px;font-size:4px;color:#c4c4c4;line-height:4px">L</div>
<div class="abs" style="left:221px;top:408.17px;font-size:4px;color:#c4c4c4;line-height:4px">R</div>
<div class="abs" style="left:10.5px;top:419.33px;width:221.5px;height:40.667px;background:#5b5b5b"></div>
<div class="abs" style="left:10.5px;top:459.60px;width:221.5px;height:1px;background:#4d4d4d"></div>
<div class="abs" style="left:20px;top:428.83px;width:30.8px;height:22px;background:#353c47;border-radius:2px"></div>
<svg class="abs" style="left:20px;top:428.8333333333333px;" width="31" height="22" viewBox="0 0 31 22"><g stroke="#4c9be3" stroke-width="1"><path d="M3.0,10.20 V11.80"/><path d="M4.9,9.10 V12.90"/><path d="M7.0,8.40 V13.60"/><path d="M9.2,6.50 V15.50"/><path d="M11.3,7.40 V14.60"/><path d="M13.2,6.00 V16.00"/><path d="M15.3,3.20 V18.80"/><path d="M17.5,6.00 V16.00"/><path d="M19.6,7.70 V14.30"/><path d="M21.5,6.50 V15.50"/><path d="M23.6,8.20 V13.80"/><path d="M25.8,9.80 V12.20"/></g><path d="M3,11 H27" stroke="#3f7fbf" stroke-width="0.8"/></svg>
<div class="abs lbl" style="left:60.5px;top:428.43px;line-height:11px;font-size:8.5px;color:#f0f0f0">Scary Bell</div>
<div class="abs" style="left:60.5px;top:440.33px;width:26px;height:12px;background:#4f4f4f;border-radius:2px"></div>
<div class="abs" style="left:73.5px;top:440.33px;width:1px;height:12px;background:#5e5e5e"></div>
<svg class="abs" style="left:62px;top:441.3333333333333px;" width="11" height="10" viewBox="0 0 11 10"><path d="M2,4 h2 l3,-2.5 v7 l-3,-2.5 h-2z" fill="#eee"/><path d="M1.5,9 L9,1" stroke="#eee" stroke-width="0.9"/></svg>
<svg class="abs" style="left:75px;top:441.3333333333333px;" width="11" height="10" viewBox="0 0 11 10"><path d="M2.5,7.5 V5 a3,3 0 0 1 6,0 V7.5" fill="none" stroke="#eee" stroke-width="1"/><rect x="1.8" y="5.5" width="1.8" height="3" rx="0.6" fill="#eee"/><rect x="7.4" y="5.5" width="1.8" height="3" rx="0.6" fill="#eee"/></svg>
<div class="abs" style="left:126.5px;top:442.33px;width:75px;height:8px;border-radius:4px;background:#3b3b3b"></div>
<div class="abs" style="left:147px;top:440.33px;width:12px;height:12px;border-radius:50%;background:#a0a0a0;border:1.2px solid #c8c8c8"></div>
<svg class="abs" style="left:207.3px;top:430.6333333333333px;" width="18" height="18" viewBox="0 0 18 18"><circle cx="9" cy="9" r="7.3" fill="#979797" stroke="#2a2a2a" stroke-width="1.6"/><path d="M9,1.2 A7.8,7.8 0 0 1 16.53,6.98" fill="none" stroke="#5be35e" stroke-width="2"/><path d="M9,9 L15.28,7.32" stroke="#3a3a3a" stroke-width="0.7"/></svg>
<div class="abs" style="left:209.5px;top:448.83px;font-size:4px;color:#c4c4c4;line-height:4px">L</div>
<div class="abs" style="left:221px;top:448.83px;font-size:4px;color:#c4c4c4;line-height:4px">R</div>
<div class="abs" style="left:10.5px;top:460.00px;width:221.5px;height:40.667px;background:#5b5b5b"></div>
<div class="abs" style="left:10.5px;top:500.27px;width:221.5px;height:1px;background:#4d4d4d"></div>
<div class="abs" style="left:20px;top:469.50px;width:30.8px;height:22px;background:#353c47;border-radius:2px"></div>
<svg class="abs" style="left:20px;top:469.5px;" width="31" height="22" viewBox="0 0 31 22"><g stroke="#4c9be3" stroke-width="1"><path d="M3.0,10.20 V11.80"/><path d="M4.9,9.10 V12.90"/><path d="M7.0,8.40 V13.60"/><path d="M9.2,6.50 V15.50"/><path d="M11.3,7.40 V14.60"/><path d="M13.2,6.00 V16.00"/><path d="M15.3,3.20 V18.80"/><path d="M17.5,6.00 V16.00"/><path d="M19.6,7.70 V14.30"/><path d="M21.5,6.50 V15.50"/><path d="M23.6,8.20 V13.80"/><path d="M25.8,9.80 V12.20"/></g><path d="M3,11 H27" stroke="#3f7fbf" stroke-width="0.8"/></svg>
<div class="abs lbl" style="left:60.5px;top:469.10px;line-height:11px;font-size:8.5px;color:#f0f0f0">Bed Atmosphere</div>
<div class="abs" style="left:60.5px;top:481.00px;width:26px;height:12px;background:#4f4f4f;border-radius:2px"></div>
<div class="abs" style="left:73.5px;top:481.00px;width:1px;height:12px;background:#5e5e5e"></div>
<svg class="abs" style="left:62px;top:482.0px;" width="11" height="10" viewBox="0 0 11 10"><path d="M2,4 h2 l3,-2.5 v7 l-3,-2.5 h-2z" fill="#eee"/><path d="M1.5,9 L9,1" stroke="#eee" stroke-width="0.9"/></svg>
<svg class="abs" style="left:75px;top:482.0px;" width="11" height="10" viewBox="0 0 11 10"><path d="M2.5,7.5 V5 a3,3 0 0 1 6,0 V7.5" fill="none" stroke="#eee" stroke-width="1"/><rect x="1.8" y="5.5" width="1.8" height="3" rx="0.6" fill="#eee"/><rect x="7.4" y="5.5" width="1.8" height="3" rx="0.6" fill="#eee"/></svg>
<div class="abs" style="left:126.5px;top:483.00px;width:75px;height:8px;border-radius:4px;background:#3b3b3b"></div>
<div class="abs" style="left:145px;top:481.00px;width:12px;height:12px;border-radius:50%;background:#a0a0a0;border:1.2px solid #c8c8c8"></div>
<svg class="abs" style="left:207.3px;top:471.3px;" width="18" height="18" viewBox="0 0 18 18"><circle cx="9" cy="9" r="7.3" fill="#979797" stroke="#2a2a2a" stroke-width="1.6"/><path d="M9,0.2 V3" stroke="#3fae6a" stroke-width="0.9"/><path d="M9,9 L9.00,2.50" stroke="#3a3a3a" stroke-width="0.7"/></svg>
<div class="abs" style="left:209.5px;top:489.50px;font-size:4px;color:#c4c4c4;line-height:4px">L</div>
<div class="abs" style="left:221px;top:489.50px;font-size:4px;color:#c4c4c4;line-height:4px">R</div>
<div class="abs" style="left:10.5px;top:500.67px;width:221.5px;height:40.667px;background:#5b5b5b"></div>
<div class="abs" style="left:10.5px;top:540.93px;width:221.5px;height:1px;background:#4d4d4d"></div>
<div class="abs" style="left:20px;top:510.17px;width:30.8px;height:22px;background:#353c47;border-radius:2px"></div>
<svg class="abs" style="left:20px;top:510.16666666666663px;" width="31" height="22" viewBox="0 0 31 22"><g stroke="#4c9be3" stroke-width="1"><path d="M3.0,10.20 V11.80"/><path d="M4.9,9.10 V12.90"/><path d="M7.0,8.40 V13.60"/><path d="M9.2,6.50 V15.50"/><path d="M11.3,7.40 V14.60"/><path d="M13.2,6.00 V16.00"/><path d="M15.3,3.20 V18.80"/><path d="M17.5,6.00 V16.00"/><path d="M19.6,7.70 V14.30"/><path d="M21.5,6.50 V15.50"/><path d="M23.6,8.20 V13.80"/><path d="M25.8,9.80 V12.20"/></g><path d="M3,11 H27" stroke="#3f7fbf" stroke-width="0.8"/></svg>
<div class="abs lbl" style="left:60.5px;top:509.77px;line-height:11px;font-size:8.5px;color:#f0f0f0">Chite Synth</div>
<div class="abs" style="left:60.5px;top:521.67px;width:26px;height:12px;background:#4f4f4f;border-radius:2px"></div>
<div class="abs" style="left:73.5px;top:521.67px;width:1px;height:12px;background:#5e5e5e"></div>
<svg class="abs" style="left:62px;top:522.6666666666666px;" width="11" height="10" viewBox="0 0 11 10"><path d="M2,4 h2 l3,-2.5 v7 l-3,-2.5 h-2z" fill="#eee"/><path d="M1.5,9 L9,1" stroke="#eee" stroke-width="0.9"/></svg>
<svg class="abs" style="left:75px;top:522.6666666666666px;" width="11" height="10" viewBox="0 0 11 10"><path d="M2.5,7.5 V5 a3,3 0 0 1 6,0 V7.5" fill="none" stroke="#eee" stroke-width="1"/><rect x="1.8" y="5.5" width="1.8" height="3" rx="0.6" fill="#eee"/><rect x="7.4" y="5.5" width="1.8" height="3" rx="0.6" fill="#eee"/></svg>
<div class="abs" style="left:126.5px;top:523.67px;width:75px;height:8px;border-radius:4px;background:#3b3b3b"></div>
<div class="abs" style="left:156px;top:521.67px;width:12px;height:12px;border-radius:50%;background:#a0a0a0;border:1.2px solid #c8c8c8"></div>
<svg class="abs" style="left:207.3px;top:511.9666666666666px;" width="18" height="18" viewBox="0 0 18 18"><circle cx="9" cy="9" r="7.3" fill="#979797" stroke="#2a2a2a" stroke-width="1.6"/><path d="M9,0.2 V3" stroke="#3fae6a" stroke-width="0.9"/><path d="M9,9 L9.00,2.50" stroke="#3a3a3a" stroke-width="0.7"/></svg>
<div class="abs" style="left:209.5px;top:530.17px;font-size:4px;color:#c4c4c4;line-height:4px">L</div>
<div class="abs" style="left:221px;top:530.17px;font-size:4px;color:#c4c4c4;line-height:4px">R</div>
<div class="abs" style="left:10.5px;top:541.33px;width:221.5px;height:40.667px;background:#5b5b5b"></div>
<div class="abs" style="left:10.5px;top:581.60px;width:221.5px;height:1px;background:#4d4d4d"></div>
<div class="abs" style="left:20px;top:550.83px;width:30.8px;height:22px;background:#353c47;border-radius:2px"></div>
<svg class="abs" style="left:20px;top:550.8333333333333px;" width="31" height="22" viewBox="0 0 31 22"><g stroke="#4c9be3" stroke-width="1"><path d="M3.0,10.20 V11.80"/><path d="M4.9,9.10 V12.90"/><path d="M7.0,8.40 V13.60"/><path d="M9.2,6.50 V15.50"/><path d="M11.3,7.40 V14.60"/><path d="M13.2,6.00 V16.00"/><path d="M15.3,3.20 V18.80"/><path d="M17.5,6.00 V16.00"/><path d="M19.6,7.70 V14.30"/><path d="M21.5,6.50 V15.50"/><path d="M23.6,8.20 V13.80"/><path d="M25.8,9.80 V12.20"/></g><path d="M3,11 H27" stroke="#3f7fbf" stroke-width="0.8"/></svg>
<div class="abs lbl" style="left:60.5px;top:550.43px;line-height:11px;font-size:8.5px;color:#f0f0f0">Anaconda Orchestra</div>
<div class="abs" style="left:60.5px;top:562.33px;width:26px;height:12px;background:#4f4f4f;border-radius:2px"></div>
<div class="abs" style="left:73.5px;top:562.33px;width:1px;height:12px;background:#5e5e5e"></div>
<svg class="abs" style="left:62px;top:563.3333333333333px;" width="11" height="10" viewBox="0 0 11 10"><path d="M2,4 h2 l3,-2.5 v7 l-3,-2.5 h-2z" fill="#eee"/><path d="M1.5,9 L9,1" stroke="#eee" stroke-width="0.9"/></svg>
<svg class="abs" style="left:75px;top:563.3333333333333px;" width="11" height="10" viewBox="0 0 11 10"><path d="M2.5,7.5 V5 a3,3 0 0 1 6,0 V7.5" fill="none" stroke="#eee" stroke-width="1"/><rect x="1.8" y="5.5" width="1.8" height="3" rx="0.6" fill="#eee"/><rect x="7.4" y="5.5" width="1.8" height="3" rx="0.6" fill="#eee"/></svg>
<div class="abs" style="left:126.5px;top:564.33px;width:75px;height:8px;border-radius:4px;background:#3b3b3b"></div>
<div class="abs" style="left:151px;top:562.33px;width:12px;height:12px;border-radius:50%;background:#a0a0a0;border:1.2px solid #c8c8c8"></div>
<svg class="abs" style="left:207.3px;top:552.6333333333332px;" width="18" height="18" viewBox="0 0 18 18"><circle cx="9" cy="9" r="7.3" fill="#979797" stroke="#2a2a2a" stroke-width="1.6"/><path d="M9,0.2 V3" stroke="#3fae6a" stroke-width="0.9"/><path d="M9,9 L9.00,2.50" stroke="#3a3a3a" stroke-width="0.7"/></svg>
<div class="abs" style="left:209.5px;top:570.83px;font-size:4px;color:#c4c4c4;line-height:4px">L</div>
<div class="abs" style="left:221px;top:570.83px;font-size:4px;color:#c4c4c4;line-height:4px">R</div>
<div class="abs" style="left:10.5px;top:582.00px;width:221.5px;height:40.667px;background:#5b5b5b"></div>
<div class="abs" style="left:10.5px;top:622.27px;width:221.5px;height:1px;background:#4d4d4d"></div>
<div class="abs" style="left:20px;top:591.50px;width:30.8px;height:22px;background:#353c47;border-radius:2px"></div>
<svg class="abs" style="left:20px;top:591.5px;" width="31" height="22" viewBox="0 0 31 22"><g stroke="#4c9be3" stroke-width="1"><path d="M3.0,10.20 V11.80"/><path d="M4.9,9.10 V12.90"/><path d="M7.0,8.40 V13.60"/><path d="M9.2,6.50 V15.50"/><path d="M11.3,7.40 V14.60"/><path d="M13.2,6.00 V16.00"/><path d="M15.3,3.20 V18.80"/><path d="M17.5,6.00 V16.00"/><path d="M19.6,7.70 V14.30"/><path d="M21.5,6.50 V15.50"/><path d="M23.6,8.20 V13.80"/><path d="M25.8,9.80 V12.20"/></g><path d="M3,11 H27" stroke="#3f7fbf" stroke-width="0.8"/></svg>
<div class="abs lbl" style="left:60.5px;top:591.10px;line-height:11px;font-size:8.5px;color:#f0f0f0">Bozo Sequence</div>
<div class="abs" style="left:60.5px;top:603.00px;width:26px;height:12px;background:#4f4f4f;border-radius:2px"></div>
<div class="abs" style="left:73.5px;top:603.00px;width:1px;height:12px;background:#5e5e5e"></div>
<svg class="abs" style="left:62px;top:604.0px;" width="11" height="10" viewBox="0 0 11 10"><path d="M2,4 h2 l3,-2.5 v7 l-3,-2.5 h-2z" fill="#eee"/><path d="M1.5,9 L9,1" stroke="#eee" stroke-width="0.9"/></svg>
<svg class="abs" style="left:75px;top:604.0px;" width="11" height="10" viewBox="0 0 11 10"><path d="M2.5,7.5 V5 a3,3 0 0 1 6,0 V7.5" fill="none" stroke="#eee" stroke-width="1"/><rect x="1.8" y="5.5" width="1.8" height="3" rx="0.6" fill="#eee"/><rect x="7.4" y="5.5" width="1.8" height="3" rx="0.6" fill="#eee"/></svg>
<div class="abs" style="left:126.5px;top:605.00px;width:75px;height:8px;border-radius:4px;background:#3b3b3b"></div>
<div class="abs" style="left:149px;top:603.00px;width:12px;height:12px;border-radius:50%;background:#a0a0a0;border:1.2px solid #c8c8c8"></div>
<svg class="abs" style="left:207.3px;top:593.3px;" width="18" height="18" viewBox="0 0 18 18"><circle cx="9" cy="9" r="7.3" fill="#979797" stroke="#2a2a2a" stroke-width="1.6"/><path d="M9,0.2 V3" stroke="#3fae6a" stroke-width="0.9"/><path d="M9,9 L9.00,2.50" stroke="#3a3a3a" stroke-width="0.7"/></svg>
<div class="abs" style="left:209.5px;top:611.50px;font-size:4px;color:#c4c4c4;line-height:4px">L</div>
<div class="abs" style="left:221px;top:611.50px;font-size:4px;color:#c4c4c4;line-height:4px">R</div>
<div class="abs" style="left:9px;top:664px;width:223px;height:8px;background:#3a3a3a"></div>
<div class="abs" style="left:232px;top:94px;width:2px;height:578px;background:#2a2a2a"></div>
<div class="abs" style="left:234px;top:94px;width:947px;height:570px;background:#333333"></div>
<div class="abs" style="left:239.0px;top:94px;width:1px;height:528.7px;background:#3c3c3c"></div><div class="abs" style="left:256.0px;top:94px;width:1px;height:528.7px;background:#3c3c3c"></div><div class="abs" style="left:273.0px;top:94px;width:1px;height:528.7px;background:#3c3c3c"></div><div class="abs" style="left:290.0px;top:94px;width:1px;height:528.7px;background:#3c3c3c"></div><div class="abs" style="left:307.0px;top:94px;width:1px;height:528.7px;background:#3c3c3c"></div><div class="abs" style="left:324.0px;top:94px;width:1px;height:528.7px;background:#3c3c3c"></div><div class="abs" style="left:341.0px;top:94px;width:1px;height:528.7px;background:#3c3c3c"></div><div class="abs" style="left:358.0px;top:94px;width:1px;height:528.7px;background:#3c3c3c"></div><div class="abs" style="left:375.0px;top:94px;width:1px;height:528.7px;background:#3c3c3c"></div><div class="abs" style="left:392.0px;top:94px;width:1px;height:528.7px;background:#3c3c3c"></div><div class="abs" style="left:409.0px;top:94px;width:1px;height:528.7px;background:#3c3c3c"></div><div class="abs" style="left:426.0px;top:94px;width:1px;height:528.7px;background:#3c3c3c"></div><div class="abs" style="left:443.0px;top:94px;width:1px;height:528.7px;background:#3c3c3c"></div><div class="abs" style="left:460.0px;top:94px;width:1px;height:528.7px;background:#3c3c3c"></div><div class="abs" style="left:477.0px;top:94px;width:1px;height:528.7px;background:#3c3c3c"></div><div class="abs" style="left:494.0px;top:94px;width:1px;height:528.7px;background:#3c3c3c"></div><div class="abs" style="left:511.0px;top:94px;width:1px;height:528.7px;background:#3c3c3c"></div><div class="abs" style="left:528.0px;top:94px;width:1px;height:528.7px;background:#3c3c3c"></div><div class="abs" style="left:545.0px;top:94px;width:1px;height:528.7px;background:#3c3c3c"></div><div class="abs" style="left:562.0px;top:94px;width:1px;height:528.7px;background:#3c3c3c"></div><div class="abs" style="left:579.0px;top:94px;width:1px;height:528.7px;background:#3c3c3c"></div><div class="abs" style="left:596.0px;top:94px;width:1px;height:528.7px;background:#3c3c3c"></div><div class="abs" style="left:613.0px;top:94px;width:1px;height:528.7px;background:#3c3c3c"></div><div class="abs" style="left:630.0px;top:94px;width:1px;height:528.7px;background:#3c3c3c"></div><div class="abs" style="left:647.0px;top:94px;width:1px;height:528.7px;background:#3c3c3c"></div><div class="abs" style="left:664.0px;top:94px;width:1px;height:528.7px;background:#3c3c3c"></div><div class="abs" style="left:681.0px;top:94px;width:1px;height:528.7px;background:#3c3c3c"></div><div class="abs" style="left:698.0px;top:94px;width:1px;height:528.7px;background:#3c3c3c"></div><div class="abs" style="left:715.0px;top:94px;width:1px;height:528.7px;background:#3c3c3c"></div><div class="abs" style="left:732.0px;top:94px;width:1px;height:528.7px;background:#3c3c3c"></div><div class="abs" style="left:749.0px;top:94px;width:1px;height:528.7px;background:#3c3c3c"></div><div class="abs" style="left:766.0px;top:94px;width:1px;height:528.7px;background:#3c3c3c"></div><div class="abs" style="left:783.0px;top:94px;width:1px;height:528.7px;background:#3c3c3c"></div><div class="abs" style="left:800.0px;top:94px;width:1px;height:528.7px;background:#3c3c3c"></div><div class="abs" style="left:817.0px;top:94px;width:1px;height:528.7px;background:#3c3c3c"></div><div class="abs" style="left:834.0px;top:94px;width:1px;height:528.7px;background:#3c3c3c"></div><div class="abs" style="left:851.0px;top:94px;width:1px;height:528.7px;background:#3c3c3c"></div><div class="abs" style="left:868.0px;top:94px;width:1px;height:528.7px;background:#3c3c3c"></div><div class="abs" style="left:885.0px;top:94px;width:1px;height:528.7px;background:#3c3c3c"></div><div class="abs" style="left:902.0px;top:94px;width:1px;height:528.7px;background:#3c3c3c"></div><div class="abs" style="left:919.0px;top:94px;width:1px;height:528.7px;background:#3c3c3c"></div><div class="abs" style="left:936.0px;top:94px;width:1px;height:528.7px;background:#3c3c3c"></div><div class="abs" style="left:953.0px;top:94px;width:1px;height:528.7px;background:#3c3c3c"></div><div class="abs" style="left:970.0px;top:94px;width:1px;height:528.7px;background:#3c3c3c"></div><div class="abs" style="left:987.0px;top:94px;width:1px;height:528.7px;background:#3c3c3c"></div><div class="abs" style="left:1004.0px;top:94px;width:1px;height:528.7px;background:#3c3c3c"></div><div class="abs" style="left:1021.0px;top:94px;width:1px;height:528.7px;background:#3c3c3c"></div><div class="abs" style="left:1038.0px;top:94px;width:1px;height:528.7px;background:#3c3c3c"></div><div class="abs" style="left:1055.0px;top:94px;width:1px;height:528.7px;background:#3c3c3c"></div><div class="abs" style="left:1072.0px;top:94px;width:1px;height:528.7px;background:#3c3c3c"></div><div class="abs" style="left:1089.0px;top:94px;width:1px;height:528.7px;background:#3c3c3c"></div><div class="abs" style="left:1106.0px;top:94px;width:1px;height:528.7px;background:#3c3c3c"></div><div class="abs" style="left:1123.0px;top:94px;width:1px;height:528.7px;background:#3c3c3c"></div><div class="abs" style="left:1140.0px;top:94px;width:1px;height:528.7px;background:#3c3c3c"></div><div class="abs" style="left:1157.0px;top:94px;width:1px;height:528.7px;background:#3c3c3c"></div><div class="abs" style="left:1174.0px;top:94px;width:1px;height:528.7px;background:#3c3c3c"></div>
<div class="abs" style="left:234px;top:134.17px;width:947px;height:1px;background:#2e2e2e"></div>
<div class="abs" style="left:234px;top:174.83px;width:947px;height:1px;background:#2e2e2e"></div>
<div class="abs" style="left:234px;top:215.50px;width:947px;height:1px;background:#2e2e2e"></div>
<div class="abs" style="left:234px;top:256.17px;width:947px;height:1px;background:#2e2e2e"></div>
<div class="abs" style="left:234px;top:296.83px;width:947px;height:1px;background:#2e2e2e"></div>
<div class="abs" style="left:234px;top:337.50px;width:947px;height:1px;background:#2e2e2e"></div>
<div class="abs" style="left:234px;top:378.17px;width:947px;height:1px;background:#2e2e2e"></div>
<div class="abs" style="left:234px;top:418.83px;width:947px;height:1px;background:#2e2e2e"></div>
<div class="abs" style="left:234px;top:459.50px;width:947px;height:1px;background:#2e2e2e"></div>
<div class="abs" style="left:234px;top:500.17px;width:947px;height:1px;background:#2e2e2e"></div>
<div class="abs" style="left:234px;top:540.83px;width:947px;height:1px;background:#2e2e2e"></div>
<div class="abs" style="left:234px;top:581.50px;width:947px;height:1px;background:#2e2e2e"></div>
<div class="abs" style="left:234px;top:622.17px;width:947px;height:1px;background:#2e2e2e"></div>
<div class="abs" style="left:1181px;top:94px;width:10px;height:578px;background:#3a3a3a;border-left:1px solid #2a2a2a"></div>
<div class="abs" style="left:8px;top:672px;width:1184px;height:3px;background:#8aa9d6"></div>
<div class="abs" style="left:9.5px;top:56px;width:1px;height:616px;background:#3d5f92"></div>
<div class="abs" style="left:1189.5px;top:56px;width:1px;height:616px;background:#3d5f92"></div>
<div class="abs" style="left:234px;top:664px;width:947px;height:8px;background:#353535"></div>
<div class="abs" style="left:296.5px;top:666.5px;width:861px;height:5px;border-radius:2.5px;background:#6d6d6d"></div>
<div class="reg" style="left:784px;top:95.00px;width:135px;height:39px">
<svg class="abs" style="left:0;top:0" width="135" height="39"><rect x="0" y="24.0" width="135" height="1" fill="#8fabcf"/><path d="M0.5 16.8V32.2M1.5 19.3V29.7M2.5 18.2V30.8M3.5 20.2V28.8M4.5 21.9V27.1M5.5 22.3V26.7M6.5 18.9V30.1M7.5 17.5V31.5M8.5 17.8V31.2M9.5 19.4V29.6M10.5 19.7V29.3M11.5 21.9V27.1M12.5 21.9V27.1M13.5 22.1V26.9M14.5 22.9V26.1M15.5 19.1V29.9M16.5 17.0V32.0M17.5 19.3V29.7M18.5 20.4V28.6M19.5 20.1V28.9M20.5 21.2V27.8M21.5 23.0V26.0M22.5 18.7V30.3M23.5 19.9V29.1M24.5 20.3V28.7M25.5 19.0V30.0M26.5 21.4V27.6M27.5 20.0V29.0M28.5 21.8V27.2M29.5 22.0V27.0M30.5 15.1V33.9M31.5 18.3V30.7M32.5 20.2V28.8M33.5 21.6V27.4M34.5 22.0V27.0M35.5 22.9V26.1M36.5 23.3V25.7M37.5 23.4V25.6M38.5 17.3V31.7M39.5 18.4V30.6M40.5 19.3V29.7M41.5 21.3V27.7M42.5 21.8V27.2M43.5 23.4V25.6M44.5 23.3V25.7M45.5 23.3V25.7M46.5 17.4V31.6M47.5 19.2V29.8M48.5 17.7V31.3M49.5 19.9V29.1M50.5 20.7V28.3M51.5 21.1V27.9M52.5 22.1V26.9M53.5 14.4V34.6M54.5 16.2V32.8M55.5 17.7V31.3M56.5 19.3V29.7M57.5 19.5V29.5M58.5 20.4V28.6M59.5 21.1V27.9M60.5 21.2V27.8M61.5 18.0V31.0M62.5 16.4V32.6M63.5 19.8V29.2M64.5 19.1V29.9M65.5 20.9V28.1M66.5 21.3V27.7M67.5 20.9V28.1M68.5 22.5V26.5M69.5 17.5V31.5M70.5 19.4V29.6M71.5 20.5V28.5M72.5 20.1V28.9M73.5 20.8V28.2M74.5 20.8V28.2M75.5 16.0V33.0M76.5 18.3V30.7M77.5 19.3V29.7M78.5 20.1V28.9M79.5 18.7V30.3M80.5 21.8V27.2M81.5 14.6V34.4M82.5 19.1V29.9M83.5 18.9V30.1M84.5 21.1V27.9M85.5 21.9V27.1M86.5 21.4V27.6M87.5 22.8V26.2M88.5 16.7V32.3M89.5 17.9V31.1M90.5 18.3V30.7M91.5 19.8V29.2M92.5 20.2V28.8M93.5 22.0V27.0M94.5 17.2V31.8M95.5 17.7V31.3M96.5 18.5V30.5M97.5 19.7V29.3M98.5 21.0V28.0M99.5 21.4V27.6M100.5 23.1V25.9M101.5 15.9V33.1M102.5 18.9V30.1M103.5 19.8V29.2M104.5 20.5V28.5M105.5 17.5V31.5M106.5 17.9V31.1M107.5 19.1V29.9M108.5 20.5V28.5M109.5 21.2V27.8M110.5 22.1V26.9M111.5 17.4V31.6M112.5 19.0V30.0M113.5 18.9V30.1M114.5 20.2V28.8M115.5 22.1V26.9M116.5 21.9V27.1M117.5 22.6V26.4M118.5 23.0V26.0M119.5 23.4V25.6M120.5 18.6V30.4M121.5 17.7V31.3M122.5 20.6V28.4M123.5 21.1V27.9M124.5 22.9V26.1M125.5 23.1V25.9M126.5 18.1V30.9M127.5 20.1V28.9M128.5 19.2V29.8M129.5 20.2V28.8M130.5 22.3V26.7M131.5 23.0V26.0M132.5 22.8V26.2M133.5 23.0V26.0M134.5 23.3V25.7" stroke="#a5bcd7" stroke-width="1"/></svg>
<div class="rt">140 Rebirth Drums 05.1<svg width="10.5" height="6" viewBox="0 0 11 6" style="margin-left:3.2px;vertical-align:-0.5px"><g fill="none" stroke="#dfe7f0" stroke-width="0.85"><path d="M1.6,5.2 C0.2,3.6 0.8,0.8 3,0.8 C5.2,0.8 5.8,3.6 4.4,5.2"/><path d="M6.6,5.2 C5.2,3.6 5.8,0.8 8,0.8 C10.2,0.8 10.8,3.6 9.4,5.2"/><path d="M0.3,5.5 H10.7"/></g></svg></div>
</div>
<div class="reg" style="left:920px;top:95.00px;width:135px;height:39px">
<svg class="abs" style="left:0;top:0" width="135" height="39"><rect x="0" y="24.0" width="135" height="1" fill="#8fabcf"/><path d="M0.5 19.3V29.7M1.5 19.2V29.8M2.5 20.1V28.9M3.5 19.6V29.4M4.5 19.3V29.7M5.5 20.0V29.0M6.5 20.9V28.1M7.5 16.9V32.1M8.5 16.2V32.8M9.5 18.1V30.9M10.5 19.6V29.4M11.5 22.0V27.0M12.5 21.1V27.9M13.5 22.9V26.1M14.5 23.0V26.0M15.5 23.2V25.8M16.5 19.3V29.7M17.5 20.2V28.8M18.5 20.3V28.7M19.5 20.5V28.5M20.5 20.6V28.4M21.5 22.2V26.8M22.5 20.3V28.7M23.5 19.2V29.8M24.5 19.0V30.0M25.5 20.6V28.4M26.5 20.8V28.2M27.5 21.3V27.7M28.5 18.4V30.6M29.5 18.0V31.0M30.5 18.5V30.5M31.5 18.1V30.9M32.5 19.1V29.9M33.5 19.9V29.1M34.5 20.6V28.4M35.5 21.7V27.3M36.5 22.3V26.7M37.5 13.9V35.1M38.5 17.2V31.8M39.5 19.4V29.6M40.5 21.5V27.5M41.5 21.7V27.3M42.5 22.9V26.1M43.5 17.6V31.4M44.5 19.2V29.8M45.5 19.9V29.1M46.5 20.7V28.3M47.5 22.3V26.7M48.5 23.5V25.5M49.5 23.4V25.6M50.5 23.3V25.7M51.5 15.6V33.4M52.5 19.8V29.2M53.5 18.3V30.7M54.5 20.6V28.4M55.5 22.2V26.8M56.5 23.3V25.7M57.5 16.3V32.7M58.5 19.2V29.8M59.5 18.2V30.8M60.5 20.1V28.9M61.5 18.0V31.0M62.5 17.5V31.5M63.5 20.6V28.4M64.5 20.2V28.8M65.5 22.1V26.9M66.5 23.1V25.9M67.5 23.3V25.7M68.5 23.3V25.7M69.5 23.2V25.8M70.5 15.4V33.6M71.5 20.7V28.3M72.5 20.5V28.5M73.5 21.5V27.5M74.5 21.4V27.6M75.5 23.5V25.5M76.5 19.0V30.0M77.5 19.8V29.2M78.5 18.6V30.4M79.5 19.2V29.8M80.5 20.2V28.8M81.5 21.3V27.7M82.5 22.0V27.0M83.5 16.6V32.4M84.5 19.5V29.5M85.5 19.3V29.7M86.5 18.3V30.7M87.5 19.8V29.2M88.5 21.5V27.5M89.5 16.8V32.2M90.5 19.0V30.0M91.5 19.2V29.8M92.5 19.4V29.6M93.5 21.4V27.6M94.5 21.6V27.4M95.5 18.7V30.3M96.5 19.3V29.7M97.5 17.7V31.3M98.5 20.6V28.4M99.5 16.9V32.1M100.5 19.3V29.7M101.5 19.5V29.5M102.5 19.5V29.5M103.5 20.4V28.6M104.5 20.7V28.3M105.5 22.4V26.6M106.5 18.2V30.8M107.5 18.2V30.8M108.5 18.2V30.8M109.5 20.1V28.9M110.5 19.8V29.2M111.5 19.6V29.4M112.5 21.9V27.1M113.5 17.6V31.4M114.5 18.3V30.7M115.5 19.5V29.5M116.5 20.8V28.2M117.5 21.8V27.2M118.5 22.0V27.0M119.5 21.8V27.2M120.5 19.5V29.5M121.5 17.6V31.4M122.5 19.1V29.9M123.5 20.9V28.1M124.5 21.9V27.1M125.5 21.9V27.1M126.5 22.7V26.3M127.5 23.4V25.6M128.5 14.9V34.1M129.5 18.2V30.8M130.5 19.6V29.4M131.5 19.8V29.2M132.5 18.3V30.7M133.5 19.3V29.7M134.5 20.6V28.4" stroke="#a5bcd7" stroke-width="1"/></svg>
<div class="rt">140 Rebirth Drums 06.1<svg width="10.5" height="6" viewBox="0 0 11 6" style="margin-left:3.2px;vertical-align:-0.5px"><g fill="none" stroke="#dfe7f0" stroke-width="0.85"><path d="M1.6,5.2 C0.2,3.6 0.8,0.8 3,0.8 C5.2,0.8 5.8,3.6 4.4,5.2"/><path d="M6.6,5.2 C5.2,3.6 5.8,0.8 8,0.8 C10.2,0.8 10.8,3.6 9.4,5.2"/><path d="M0.3,5.5 H10.7"/></g></svg></div>
</div>
<div class="reg" style="left:1056px;top:95.00px;width:118.5px;height:39px">
<svg class="abs" style="left:0;top:0" width="118" height="39"><rect x="0" y="24.0" width="118" height="1" fill="#8fabcf"/><path d="M0.5 17.2V31.8M1.5 19.3V29.7M2.5 18.9V30.1M3.5 19.8V29.2M4.5 22.2V26.8M5.5 22.8V26.2M6.5 23.1V25.9M7.5 23.0V26.0M8.5 19.5V29.5M9.5 19.4V29.6M10.5 17.6V31.4M11.5 18.1V30.9M12.5 17.0V32.0M13.5 19.5V29.5M14.5 16.0V33.0M15.5 18.8V30.2M16.5 17.8V31.2M17.5 20.3V28.7M18.5 14.8V34.2M19.5 19.6V29.4M20.5 19.2V29.8M21.5 21.5V27.5M22.5 22.2V26.8M23.5 22.8V26.2M24.5 17.2V31.8M25.5 19.1V29.9M26.5 20.7V28.3M27.5 21.2V27.8M28.5 21.6V27.4M29.5 22.5V26.5M30.5 23.2V25.8M31.5 23.4V25.6M32.5 16.6V32.4M33.5 15.5V33.5M34.5 20.8V28.2M35.5 20.5V28.5M36.5 16.2V32.8M37.5 20.4V28.6M38.5 18.4V30.6M39.5 21.4V27.6M40.5 21.5V27.5M41.5 22.0V27.0M42.5 22.6V26.4M43.5 23.4V25.6M44.5 23.3V25.7M45.5 17.6V31.4M46.5 19.6V29.4M47.5 20.1V28.9M48.5 21.5V27.5M49.5 16.5V32.5M50.5 19.6V29.4M51.5 18.0V31.0M52.5 19.3V29.7M53.5 19.7V29.3M54.5 19.4V29.6M55.5 20.7V28.3M56.5 21.7V27.3M57.5 17.8V31.2M58.5 18.3V30.7M59.5 19.1V29.9M60.5 19.6V29.4M61.5 17.8V31.2M62.5 19.3V29.7M63.5 19.7V29.3M64.5 19.9V29.1M65.5 22.0V27.0M66.5 22.1V26.9M67.5 23.4V25.6M68.5 23.1V25.9M69.5 16.8V32.2M70.5 24.0V25.0M71.5 24.0V25.0M72.5 24.0V25.0M73.5 24.0V25.0M74.5 24.0V25.0M75.5 24.0V25.0M76.5 24.0V25.0M77.5 24.0V25.0M78.5 24.0V25.0M79.5 24.0V25.0M80.5 24.0V25.0M81.5 24.0V25.0M82.5 24.0V25.0M83.5 24.0V25.0M84.5 24.0V25.0M85.5 24.0V25.0M86.5 24.0V25.0M87.5 24.0V25.0M88.5 24.0V25.0M89.5 24.0V25.0M90.5 24.0V25.0M91.5 24.0V25.0M92.5 24.0V25.0M93.5 24.0V25.0M94.5 24.0V25.0M95.5 24.0V25.0M96.5 24.0V25.0M97.5 24.0V25.0M98.5 24.0V25.0M99.5 24.0V25.0M100.5 24.0V25.0M101.5 24.0V25.0M102.5 24.0V25.0M103.5 24.0V25.0M104.5 24.0V25.0M105.5 24.0V25.0M106.5 24.0V25.0M107.5 24.0V25.0M108.5 24.0V25.0M109.5 24.0V25.0M110.5 24.0V25.0M111.5 24.0V25.0M112.5 24.0V25.0M113.5 24.0V25.0M114.5 24.0V25.0M115.5 24.0V25.0M116.5 24.0V25.0M117.5 24.0V25.0" stroke="#a5bcd7" stroke-width="1"/></svg>
<div class="rt">140 Rebirth Drums 07<svg width="10.5" height="6" viewBox="0 0 11 6" style="margin-left:3.2px;vertical-align:-0.5px"><g fill="none" stroke="#dfe7f0" stroke-width="0.85"><path d="M1.6,5.2 C0.2,3.6 0.8,0.8 3,0.8 C5.2,0.8 5.8,3.6 4.4,5.2"/><path d="M6.6,5.2 C5.2,3.6 5.8,0.8 8,0.8 C10.2,0.8 10.8,3.6 9.4,5.2"/><path d="M0.3,5.5 H10.7"/></g></svg></div>
</div>
<div class="reg" style="left:784px;top:135.67px;width:135px;height:39px">
<svg class="abs" style="left:0;top:0" width="135" height="39"><rect x="0" y="24.0" width="135" height="1" fill="#8fabcf"/><path d="M0.5 24.0V25.0M1.5 17.4V31.6M2.5 17.5V31.5M3.5 18.0V31.0M4.5 18.8V30.2M5.5 24.0V25.0M6.5 24.0V25.0M7.5 17.5V31.5M8.5 18.0V31.0M9.5 18.2V30.8M10.5 24.0V25.0M11.5 24.0V25.0M12.5 24.0V25.0M13.5 24.0V25.0M14.5 24.0V25.0M15.5 16.8V32.2M16.5 17.9V31.1M17.5 17.9V31.1M18.5 18.9V30.1M19.5 24.0V25.0M20.5 24.0V25.0M21.5 24.0V25.0M22.5 24.0V25.0M23.5 24.0V25.0M24.5 24.0V25.0M25.5 24.0V25.0M26.5 24.0V25.0M27.5 24.0V25.0M28.5 24.0V25.0M29.5 17.0V32.0M30.5 17.5V31.5M31.5 18.5V30.5M32.5 24.0V25.0M33.5 24.0V25.0M34.5 24.0V25.0M35.5 17.0V32.0M36.5 17.9V31.1M37.5 18.4V30.6M38.5 24.0V25.0M39.5 24.0V25.0M40.5 24.0V25.0M41.5 24.0V25.0M42.5 17.3V31.7M43.5 17.4V31.6M44.5 18.6V30.4M45.5 18.9V30.1M46.5 24.0V25.0M47.5 24.0V25.0M48.5 24.0V25.0M49.5 24.0V25.0M50.5 24.0V25.0M51.5 24.0V25.0M52.5 24.0V25.0M53.5 17.3V31.7M54.5 17.9V31.1M55.5 18.3V30.7M56.5 24.0V25.0M57.5 24.0V25.0M58.5 24.0V25.0M59.5 24.0V25.0M60.5 17.2V31.8M61.5 17.9V31.1M62.5 18.4V30.6M63.5 24.0V25.0M64.5 24.0V25.0M65.5 24.0V25.0M66.5 16.8V32.2M67.5 17.6V31.4M68.5 18.0V31.0M69.5 19.2V29.8M70.5 24.0V25.0M71.5 24.0V25.0M72.5 24.0V25.0M73.5 24.0V25.0M74.5 24.0V25.0M75.5 24.0V25.0M76.5 24.0V25.0M77.5 24.0V25.0M78.5 17.4V31.6M79.5 17.7V31.3M80.5 18.2V30.8M81.5 24.0V25.0M82.5 24.0V25.0M83.5 24.0V25.0M84.5 24.0V25.0M85.5 16.7V32.3M86.5 17.7V31.3M87.5 18.3V30.7M88.5 24.0V25.0M89.5 24.0V25.0M90.5 24.0V25.0M91.5 16.8V32.2M92.5 18.0V31.0M93.5 17.9V31.1M94.5 18.8V30.2M95.5 24.0V25.0M96.5 24.0V25.0M97.5 16.9V32.1M98.5 17.8V31.2M99.5 18.4V30.6M100.5 24.0V25.0M101.5 24.0V25.0M102.5 24.0V25.0M103.5 17.0V32.0M104.5 17.8V31.2M105.5 18.1V30.9M106.5 24.0V25.0M107.5 24.0V25.0M108.5 24.0V25.0M109.5 24.0V25.0M110.5 24.0V25.0M111.5 24.0V25.0M112.5 24.0V25.0M113.5 24.0V25.0M114.5 24.0V25.0M115.5 17.3V31.7M116.5 17.6V31.4M117.5 17.9V31.1M118.5 24.0V25.0M119.5 24.0V25.0M120.5 24.0V25.0M121.5 24.0V25.0M122.5 16.8V32.2M123.5 17.9V31.1M124.5 18.2V30.8M125.5 24.0V25.0M126.5 24.0V25.0M127.5 16.8V32.2M128.5 17.4V31.6M129.5 18.1V30.9M130.5 18.7V30.3M131.5 24.0V25.0M132.5 17.4V31.6M133.5 17.6V31.4M134.5 18.4V30.6" stroke="#a5bcd7" stroke-width="1"/></svg>
<div class="rt">140 Rebirth Kick 05.1<svg width="10.5" height="6" viewBox="0 0 11 6" style="margin-left:3.2px;vertical-align:-0.5px"><g fill="none" stroke="#dfe7f0" stroke-width="0.85"><path d="M1.6,5.2 C0.2,3.6 0.8,0.8 3,0.8 C5.2,0.8 5.8,3.6 4.4,5.2"/><path d="M6.6,5.2 C5.2,3.6 5.8,0.8 8,0.8 C10.2,0.8 10.8,3.6 9.4,5.2"/><path d="M0.3,5.5 H10.7"/></g></svg></div>
</div>
<div class="reg" style="left:920px;top:135.67px;width:135px;height:39px">
<svg class="abs" style="left:0;top:0" width="135" height="39"><rect x="0" y="24.0" width="135" height="1" fill="#8fabcf"/><path d="M0.5 24.0V25.0M1.5 17.2V31.8M2.5 18.1V30.9M3.5 18.3V30.7M4.5 18.8V30.2M5.5 24.0V25.0M6.5 24.0V25.0M7.5 17.5V31.5M8.5 18.1V30.9M9.5 18.4V30.6M10.5 24.0V25.0M11.5 24.0V25.0M12.5 24.0V25.0M13.5 24.0V25.0M14.5 24.0V25.0M15.5 17.1V31.9M16.5 17.7V31.3M17.5 18.4V30.6M18.5 24.0V25.0M19.5 24.0V25.0M20.5 24.0V25.0M21.5 24.0V25.0M22.5 24.0V25.0M23.5 24.0V25.0M24.5 24.0V25.0M25.5 24.0V25.0M26.5 24.0V25.0M27.5 24.0V25.0M28.5 24.0V25.0M29.5 17.0V32.0M30.5 17.9V31.1M31.5 18.2V30.8M32.5 24.0V25.0M33.5 24.0V25.0M34.5 24.0V25.0M35.5 17.4V31.6M36.5 18.1V30.9M37.5 18.1V30.9M38.5 24.0V25.0M39.5 24.0V25.0M40.5 24.0V25.0M41.5 24.0V25.0M42.5 17.4V31.6M43.5 18.0V31.0M44.5 18.2V30.8M45.5 18.6V30.4M46.5 24.0V25.0M47.5 24.0V25.0M48.5 24.0V25.0M49.5 24.0V25.0M50.5 24.0V25.0M51.5 24.0V25.0M52.5 24.0V25.0M53.5 17.2V31.8M54.5 17.9V31.1M55.5 18.7V30.3M56.5 24.0V25.0M57.5 24.0V25.0M58.5 24.0V25.0M59.5 24.0V25.0M60.5 16.8V32.2M61.5 17.4V31.6M62.5 18.2V30.8M63.5 18.8V30.2M64.5 24.0V25.0M65.5 24.0V25.0M66.5 16.8V32.2M67.5 17.5V31.5M68.5 18.5V30.5M69.5 18.6V30.4M70.5 24.0V25.0M71.5 24.0V25.0M72.5 24.0V25.0M73.5 24.0V25.0M74.5 24.0V25.0M75.5 24.0V25.0M76.5 24.0V25.0M77.5 24.0V25.0M78.5 17.5V31.5M79.5 18.1V30.9M80.5 18.6V30.4M81.5 24.0V25.0M82.5 24.0V25.0M83.5 24.0V25.0M84.5 24.0V25.0M85.5 17.5V31.5M86.5 17.5V31.5M87.5 18.7V30.3M88.5 24.0V25.0M89.5 24.0V25.0M90.5 24.0V25.0M91.5 17.0V32.0M92.5 17.9V31.1M93.5 18.4V30.6M94.5 18.9V30.1M95.5 24.0V25.0M96.5 24.0V25.0M97.5 17.1V31.9M98.5 17.6V31.4M99.5 18.0V31.0M100.5 19.2V29.8M101.5 24.0V25.0M102.5 24.0V25.0M103.5 17.4V31.6M104.5 17.6V31.4M105.5 17.9V31.1M106.5 24.0V25.0M107.5 24.0V25.0M108.5 24.0V25.0M109.5 24.0V25.0M110.5 24.0V25.0M111.5 24.0V25.0M112.5 24.0V25.0M113.5 24.0V25.0M114.5 24.0V25.0M115.5 16.9V32.1M116.5 17.5V31.5M117.5 18.7V30.3M118.5 18.6V30.4M119.5 24.0V25.0M120.5 24.0V25.0M121.5 24.0V25.0M122.5 16.8V32.2M123.5 18.0V31.0M124.5 18.2V30.8M125.5 19.2V29.8M126.5 24.0V25.0M127.5 17.3V31.7M128.5 17.6V31.4M129.5 18.6V30.4M130.5 24.0V25.0M131.5 24.0V25.0M132.5 16.8V32.2M133.5 17.3V31.7M134.5 18.5V30.5" stroke="#a5bcd7" stroke-width="1"/></svg>
<div class="rt">140 Rebirth Kick 06.1<svg width="10.5" height="6" viewBox="0 0 11 6" style="margin-left:3.2px;vertical-align:-0.5px"><g fill="none" stroke="#dfe7f0" stroke-width="0.85"><path d="M1.6,5.2 C0.2,3.6 0.8,0.8 3,0.8 C5.2,0.8 5.8,3.6 4.4,5.2"/><path d="M6.6,5.2 C5.2,3.6 5.8,0.8 8,0.8 C10.2,0.8 10.8,3.6 9.4,5.2"/><path d="M0.3,5.5 H10.7"/></g></svg></div>
</div>
<div class="reg" style="left:1056px;top:135.67px;width:118.5px;height:39px">
<svg class="abs" style="left:0;top:0" width="118" height="39"><rect x="0" y="24.0" width="118" height="1" fill="#8fabcf"/><path d="M0.5 24.0V25.0M1.5 17.3V31.7M2.5 17.7V31.3M3.5 18.4V30.6M4.5 24.0V25.0M5.5 24.0V25.0M6.5 24.0V25.0M7.5 16.7V32.3M8.5 17.9V31.1M9.5 18.0V31.0M10.5 18.6V30.4M11.5 24.0V25.0M12.5 24.0V25.0M13.5 24.0V25.0M14.5 24.0V25.0M15.5 16.8V32.2M16.5 18.1V30.9M17.5 18.5V30.5M18.5 24.0V25.0M19.5 24.0V25.0M20.5 24.0V25.0M21.5 24.0V25.0M22.5 24.0V25.0M23.5 24.0V25.0M24.5 24.0V25.0M25.5 24.0V25.0M26.5 24.0V25.0M27.5 24.0V25.0M28.5 24.0V25.0M29.5 16.8V32.2M30.5 17.9V31.1M31.5 18.6V30.4M32.5 24.0V25.0M33.5 24.0V25.0M34.5 24.0V25.0M35.5 17.3V31.7M36.5 17.8V31.2M37.5 18.2V30.8M38.5 24.0V25.0M39.5 24.0V25.0M40.5 24.0V25.0M41.5 24.0V25.0M42.5 16.8V32.2M43.5 17.6V31.4M44.5 18.1V30.9M45.5 24.0V25.0M46.5 24.0V25.0M47.5 24.0V25.0M48.5 24.0V25.0M49.5 24.0V25.0M50.5 24.0V25.0M51.5 24.0V25.0M52.5 24.0V25.0M53.5 16.8V32.2M54.5 17.7V31.3M55.5 18.3V30.7M56.5 18.9V30.1M57.5 24.0V25.0M58.5 24.0V25.0M59.5 24.0V25.0M60.5 16.8V32.2M61.5 17.8V31.2M62.5 18.1V30.9M63.5 24.0V25.0M64.5 24.0V25.0M65.5 24.0V25.0M66.5 16.8V32.2M67.5 17.5V31.5M68.5 18.4V30.6M69.5 18.8V30.2M70.5 24.0V25.0M71.5 24.0V25.0M72.5 24.0V25.0M73.5 24.0V25.0M74.5 24.0V25.0M75.5 24.0V25.0M76.5 24.0V25.0M77.5 24.0V25.0M78.5 24.0V25.0M79.5 24.0V25.0M80.5 24.0V25.0M81.5 24.0V25.0M82.5 24.0V25.0M83.5 24.0V25.0M84.5 24.0V25.0M85.5 24.0V25.0M86.5 24.0V25.0M87.5 24.0V25.0M88.5 24.0V25.0M89.5 24.0V25.0M90.5 24.0V25.0M91.5 24.0V25.0M92.5 24.0V25.0M93.5 24.0V25.0M94.5 24.0V25.0M95.5 24.0V25.0M96.5 24.0V25.0M97.5 24.0V25.0M98.5 24.0V25.0M99.5 24.0V25.0M100.5 24.0V25.0M101.5 24.0V25.0M102.5 24.0V25.0M103.5 24.0V25.0M104.5 24.0V25.0M105.5 24.0V25.0M106.5 24.0V25.0M107.5 24.0V25.0M108.5 24.0V25.0M109.5 24.0V25.0M110.5 24.0V25.0M111.5 24.0V25.0M112.5 24.0V25.0M113.5 24.0V25.0M114.5 24.0V25.0M115.5 24.0V25.0M116.5 24.0V25.0M117.5 24.0V25.0" stroke="#a5bcd7" stroke-width="1"/></svg>
<div class="rt">140 Rebirth Kick 07<svg width="10.5" height="6" viewBox="0 0 11 6" style="margin-left:3.2px;vertical-align:-0.5px"><g fill="none" stroke="#dfe7f0" stroke-width="0.85"><path d="M1.6,5.2 C0.2,3.6 0.8,0.8 3,0.8 C5.2,0.8 5.8,3.6 4.4,5.2"/><path d="M6.6,5.2 C5.2,3.6 5.8,0.8 8,0.8 C10.2,0.8 10.8,3.6 9.4,5.2"/><path d="M0.3,5.5 H10.7"/></g></svg></div>
</div>
<div class="reg" style="left:784px;top:176.33px;width:135px;height:39px">
<svg class="abs" style="left:0;top:0" width="135" height="39"><rect x="0" y="24.0" width="135" height="1" fill="#8fabcf"/><path d="M0.5 24.0V25.0M1.5 24.0V25.0M2.5 24.0V25.0M3.5 17.0V32.0M4.5 21.0V28.0M5.5 22.8V26.2M6.5 23.7V25.3M7.5 24.0V25.0M8.5 24.0V25.0M9.5 24.0V25.0M10.5 24.0V25.0M11.5 24.0V25.0M12.5 24.0V25.0M13.5 24.0V25.0M14.5 24.0V25.0M15.5 24.0V25.0M16.5 24.0V25.0M17.5 24.0V25.0M18.5 24.0V25.0M19.5 24.0V25.0M20.5 17.0V32.0M21.5 21.0V28.0M22.5 22.8V26.2M23.5 23.7V25.3M24.5 24.0V25.0M25.5 24.0V25.0M26.5 24.0V25.0M27.5 24.0V25.0M28.5 24.0V25.0M29.5 24.0V25.0M30.5 24.0V25.0M31.5 24.0V25.0M32.5 24.0V25.0M33.5 24.0V25.0M34.5 24.0V25.0M35.5 24.0V25.0M36.5 24.0V25.0M37.5 17.0V32.0M38.5 21.0V28.0M39.5 22.8V26.2M40.5 23.7V25.3M41.5 24.0V25.0M42.5 24.0V25.0M43.5 24.0V25.0M44.5 24.0V25.0M45.5 24.0V25.0M46.5 24.0V25.0M47.5 24.0V25.0M48.5 24.0V25.0M49.5 24.0V25.0M50.5 24.0V25.0M51.5 24.0V25.0M52.5 24.0V25.0M53.5 24.0V25.0M54.5 17.0V32.0M55.5 21.0V28.0M56.5 22.8V26.2M57.5 23.7V25.3M58.5 24.0V25.0M59.5 24.0V25.0M60.5 24.0V25.0M61.5 24.0V25.0M62.5 24.0V25.0M63.5 24.0V25.0M64.5 24.0V25.0M65.5 24.0V25.0M66.5 24.0V25.0M67.5 24.0V25.0M68.5 24.0V25.0M69.5 24.0V25.0M70.5 24.0V25.0M71.5 17.0V32.0M72.5 21.0V28.0M73.5 22.8V26.2M74.5 23.7V25.3M75.5 24.0V25.0M76.5 24.0V25.0M77.5 24.0V25.0M78.5 24.0V25.0M79.5 24.0V25.0M80.5 24.0V25.0M81.5 24.0V25.0M82.5 24.0V25.0M83.5 24.0V25.0M84.5 24.0V25.0M85.5 24.0V25.0M86.5 24.0V25.0M87.5 24.0V25.0M88.5 17.0V32.0M89.5 21.0V28.0M90.5 22.8V26.2M91.5 23.7V25.3M92.5 24.0V25.0M93.5 24.0V25.0M94.5 24.0V25.0M95.5 24.0V25.0M96.5 24.0V25.0M97.5 24.0V25.0M98.5 24.0V25.0M99.5 24.0V25.0M100.5 24.0V25.0M101.5 24.0V25.0M102.5 24.0V25.0M103.5 24.0V25.0M104.5 24.0V25.0M105.5 17.0V32.0M106.5 21.0V28.0M107.5 22.8V26.2M108.5 23.7V25.3M109.5 24.0V25.0M110.5 24.0V25.0M111.5 24.0V25.0M112.5 24.0V25.0M113.5 24.0V25.0M114.5 24.0V25.0M115.5 24.0V25.0M116.5 24.0V25.0M117.5 24.0V25.0M118.5 24.0V25.0M119.5 24.0V25.0M120.5 24.0V25.0M121.5 24.0V25.0M122.5 17.0V32.0M123.5 21.0V28.0M124.5 22.8V26.2M125.5 23.7V25.3M126.5 24.0V25.0M127.5 24.0V25.0M128.5 24.0V25.0M129.5 24.0V25.0M130.5 24.0V25.0M131.5 24.0V25.0M132.5 24.0V25.0M133.5 24.0V25.0M134.5 24.0V25.0" stroke="#a5bcd7" stroke-width="1"/></svg>
<div class="rt">140 Rebirth Snare 05.1<svg width="10.5" height="6" viewBox="0 0 11 6" style="margin-left:3.2px;vertical-align:-0.5px"><g fill="none" stroke="#dfe7f0" stroke-width="0.85"><path d="M1.6,5.2 C0.2,3.6 0.8,0.8 3,0.8 C5.2,0.8 5.8,3.6 4.4,5.2"/><path d="M6.6,5.2 C5.2,3.6 5.8,0.8 8,0.8 C10.2,0.8 10.8,3.6 9.4,5.2"/><path d="M0.3,5.5 H10.7"/></g></svg></div>
</div>
<div class="reg" style="left:920px;top:176.33px;width:135px;height:39px">
<svg class="abs" style="left:0;top:0" width="135" height="39"><rect x="0" y="24.0" width="135" height="1" fill="#8fabcf"/><path d="M0.5 24.0V25.0M1.5 24.0V25.0M2.5 24.0V25.0M3.5 17.0V32.0M4.5 21.0V28.0M5.5 22.8V26.2M6.5 23.7V25.3M7.5 24.0V25.0M8.5 24.0V25.0M9.5 24.0V25.0M10.5 24.0V25.0M11.5 24.0V25.0M12.5 24.0V25.0M13.5 24.0V25.0M14.5 24.0V25.0M15.5 24.0V25.0M16.5 24.0V25.0M17.5 24.0V25.0M18.5 24.0V25.0M19.5 24.0V25.0M20.5 17.0V32.0M21.5 21.0V28.0M22.5 22.8V26.2M23.5 23.7V25.3M24.5 24.0V25.0M25.5 24.0V25.0M26.5 24.0V25.0M27.5 24.0V25.0M28.5 24.0V25.0M29.5 24.0V25.0M30.5 24.0V25.0M31.5 24.0V25.0M32.5 24.0V25.0M33.5 24.0V25.0M34.5 24.0V25.0M35.5 24.0V25.0M36.5 24.0V25.0M37.5 17.0V32.0M38.5 21.0V28.0M39.5 22.8V26.2M40.5 23.7V25.3M41.5 24.0V25.0M42.5 24.0V25.0M43.5 24.0V25.0M44.5 24.0V25.0M45.5 24.0V25.0M46.5 24.0V25.0M47.5 24.0V25.0M48.5 24.0V25.0M49.5 24.0V25.0M50.5 24.0V25.0M51.5 24.0V25.0M52.5 24.0V25.0M53.5 24.0V25.0M54.5 17.0V32.0M55.5 21.0V28.0M56.5 22.8V26.2M57.5 23.7V25.3M58.5 24.0V25.0M59.5 24.0V25.0M60.5 24.0V25.0M61.5 24.0V25.0M62.5 24.0V25.0M63.5 24.0V25.0M64.5 24.0V25.0M65.5 24.0V25.0M66.5 24.0V25.0M67.5 24.0V25.0M68.5 24.0V25.0M69.5 24.0V25.0M70.5 24.0V25.0M71.5 17.0V32.0M72.5 21.0V28.0M73.5 22.8V26.2M74.5 23.7V25.3M75.5 24.0V25.0M76.5 24.0V25.0M77.5 24.0V25.0M78.5 24.0V25.0M79.5 24.0V25.0M80.5 24.0V25.0M81.5 24.0V25.0M82.5 24.0V25.0M83.5 24.0V25.0M84.5 24.0V25.0M85.5 24.0V25.0M86.5 24.0V25.0M87.5 24.0V25.0M88.5 17.0V32.0M89.5 21.0V28.0M90.5 22.8V26.2M91.5 23.7V25.3M92.5 24.0V25.0M93.5 24.0V25.0M94.5 24.0V25.0M95.5 24.0V25.0M96.5 24.0V25.0M97.5 24.0V25.0M98.5 24.0V25.0M99.5 24.0V25.0M100.5 24.0V25.0M101.5 24.0V25.0M102.5 24.0V25.0M103.5 24.0V25.0M104.5 24.0V25.0M105.5 17.0V32.0M106.5 21.0V28.0M107.5 22.8V26.2M108.5 23.7V25.3M109.5 24.0V25.0M110.5 24.0V25.0M111.5 24.0V25.0M112.5 24.0V25.0M113.5 24.0V25.0M114.5 24.0V25.0M115.5 24.0V25.0M116.5 24.0V25.0M117.5 24.0V25.0M118.5 24.0V25.0M119.5 24.0V25.0M120.5 24.0V25.0M121.5 24.0V25.0M122.5 17.0V32.0M123.5 21.0V28.0M124.5 22.8V26.2M125.5 23.7V25.3M126.5 24.0V25.0M127.5 24.0V25.0M128.5 24.0V25.0M129.5 24.0V25.0M130.5 24.0V25.0M131.5 24.0V25.0M132.5 24.0V25.0M133.5 24.0V25.0M134.5 24.0V25.0" stroke="#a5bcd7" stroke-width="1"/></svg>
<div class="rt">140 Rebirth Snare 06.1<svg width="10.5" height="6" viewBox="0 0 11 6" style="margin-left:3.2px;vertical-align:-0.5px"><g fill="none" stroke="#dfe7f0" stroke-width="0.85"><path d="M1.6,5.2 C0.2,3.6 0.8,0.8 3,0.8 C5.2,0.8 5.8,3.6 4.4,5.2"/><path d="M6.6,5.2 C5.2,3.6 5.8,0.8 8,0.8 C10.2,0.8 10.8,3.6 9.4,5.2"/><path d="M0.3,5.5 H10.7"/></g></svg></div>
</div>
<div class="reg" style="left:1056px;top:176.33px;width:118.5px;height:39px">
<svg class="abs" style="left:0;top:0" width="118" height="39"><rect x="0" y="24.0" width="118" height="1" fill="#8fabcf"/><path d="M0.5 23.9V25.1M1.5 17.8V31.2M2.5 23.9V25.1M3.5 20.1V28.9M4.5 23.9V25.1M5.5 20.4V28.6M6.5 23.9V25.1M7.5 20.2V28.8M8.5 23.9V25.1M9.5 23.9V25.1M10.5 23.9V25.1M11.5 23.9V25.1M12.5 17.6V31.4M13.5 23.9V25.1M14.5 18.4V30.6M15.5 23.9V25.1M16.5 20.4V28.6M17.5 23.9V25.1M18.5 23.9V25.1M19.5 23.9V25.1M20.5 23.9V25.1M21.5 18.6V30.4M22.5 23.9V25.1M23.5 20.4V28.6M24.5 23.9V25.1M25.5 20.3V28.7M26.5 23.9V25.1M27.5 20.4V28.6M28.5 23.9V25.1M29.5 23.9V25.1M30.5 23.9V25.1M31.5 23.9V25.1M32.5 23.9V25.1M33.5 23.9V25.1M34.5 19.9V29.1M35.5 23.9V25.1M36.5 17.6V31.4M37.5 23.9V25.1M38.5 18.9V30.1M39.5 23.9V25.1M40.5 23.9V25.1M41.5 23.9V25.1M42.5 23.9V25.1M43.5 23.9V25.1M44.5 23.9V25.1M45.5 17.9V31.1M46.5 23.9V25.1M47.5 18.2V30.8M48.5 23.9V25.1M49.5 23.9V25.1M50.5 23.9V25.1M51.5 23.9V25.1M52.5 23.9V25.1M53.5 23.9V25.1M54.5 20.2V28.8M55.5 23.9V25.1M56.5 19.9V29.1M57.5 23.9V25.1M58.5 20.2V28.8M59.5 23.9V25.1M60.5 23.9V25.1M61.5 23.9V25.1M62.5 23.9V25.1M63.5 20.2V28.8M64.5 23.9V25.1M65.5 18.2V30.8M66.5 23.9V25.1M67.5 18.6V30.4M68.5 23.9V25.1M69.5 24.0V25.0M70.5 24.0V25.0M71.5 24.0V25.0M72.5 24.0V25.0M73.5 24.0V25.0M74.5 24.0V25.0M75.5 24.0V25.0M76.5 24.0V25.0M77.5 24.0V25.0M78.5 24.0V25.0M79.5 24.0V25.0M80.5 24.0V25.0M81.5 24.0V25.0M82.5 24.0V25.0M83.5 24.0V25.0M84.5 24.0V25.0M85.5 24.0V25.0M86.5 24.0V25.0M87.5 24.0V25.0M88.5 24.0V25.0M89.5 24.0V25.0M90.5 24.0V25.0M91.5 24.0V25.0M92.5 24.0V25.0M93.5 24.0V25.0M94.5 24.0V25.0M95.5 24.0V25.0M96.5 24.0V25.0M97.5 24.0V25.0M98.5 24.0V25.0M99.5 24.0V25.0M100.5 24.0V25.0M101.5 24.0V25.0M102.5 24.0V25.0M103.5 24.0V25.0M104.5 24.0V25.0M105.5 24.0V25.0M106.5 24.0V25.0M107.5 24.0V25.0M108.5 24.0V25.0M109.5 24.0V25.0M110.5 24.0V25.0M111.5 24.0V25.0M112.5 24.0V25.0M113.5 24.0V25.0M114.5 24.0V25.0M115.5 24.0V25.0M116.5 24.0V25.0M117.5 24.0V25.0" stroke="#a5bcd7" stroke-width="1"/></svg>
<div class="rt">140 Rebirth Hat 07<svg width="10.5" height="6" viewBox="0 0 11 6" style="margin-left:3.2px;vertical-align:-0.5px"><g fill="none" stroke="#dfe7f0" stroke-width="0.85"><path d="M1.6,5.2 C0.2,3.6 0.8,0.8 3,0.8 C5.2,0.8 5.8,3.6 4.4,5.2"/><path d="M6.6,5.2 C5.2,3.6 5.8,0.8 8,0.8 C10.2,0.8 10.8,3.6 9.4,5.2"/><path d="M0.3,5.5 H10.7"/></g></svg></div>
</div>
<div class="reg" style="left:784px;top:217.00px;width:135px;height:39px">
<svg class="abs" style="left:0;top:0" width="135" height="39"><rect x="0" y="24.0" width="135" height="1" fill="#8fabcf"/><path d="M0.5 23.9V25.1M1.5 20.1V28.9M2.5 23.9V25.1M3.5 18.1V30.9M4.5 23.9V25.1M5.5 23.9V25.1M6.5 23.9V25.1M7.5 23.9V25.1M8.5 23.9V25.1M9.5 23.9V25.1M10.5 19.6V29.4M11.5 23.9V25.1M12.5 19.5V29.5M13.5 23.9V25.1M14.5 23.9V25.1M15.5 23.9V25.1M16.5 23.9V25.1M17.5 23.9V25.1M18.5 19.4V29.6M19.5 23.9V25.1M20.5 17.7V31.3M21.5 23.9V25.1M22.5 23.9V25.1M23.5 23.9V25.1M24.5 23.9V25.1M25.5 18.2V30.8M26.5 23.9V25.1M27.5 17.8V31.2M28.5 23.9V25.1M29.5 18.2V30.8M30.5 23.9V25.1M31.5 18.7V30.3M32.5 23.9V25.1M33.5 23.9V25.1M34.5 23.9V25.1M35.5 23.9V25.1M36.5 23.9V25.1M37.5 18.6V30.4M38.5 23.9V25.1M39.5 20.4V28.6M40.5 23.9V25.1M41.5 19.3V29.7M42.5 23.9V25.1M43.5 23.9V25.1M44.5 23.9V25.1M45.5 23.9V25.1M46.5 23.9V25.1M47.5 18.2V30.8M48.5 23.9V25.1M49.5 19.5V29.5M50.5 23.9V25.1M51.5 18.4V30.6M52.5 23.9V25.1M53.5 18.9V30.1M54.5 23.9V25.1M55.5 23.9V25.1M56.5 23.9V25.1M57.5 23.9V25.1M58.5 17.9V31.1M59.5 23.9V25.1M60.5 20.2V28.8M61.5 23.9V25.1M62.5 18.0V31.0M63.5 23.9V25.1M64.5 20.0V29.0M65.5 23.9V25.1M66.5 23.9V25.1M67.5 23.9V25.1M68.5 23.9V25.1M69.5 19.9V29.1M70.5 23.9V25.1M71.5 18.2V30.8M72.5 23.9V25.1M73.5 17.6V31.4M74.5 23.9V25.1M75.5 20.5V28.5M76.5 23.9V25.1M77.5 23.9V25.1M78.5 23.9V25.1M79.5 23.9V25.1M80.5 23.9V25.1M81.5 19.0V30.0M82.5 23.9V25.1M83.5 18.1V30.9M84.5 23.9V25.1M85.5 23.9V25.1M86.5 23.9V25.1M87.5 23.9V25.1M88.5 18.7V30.3M89.5 23.9V25.1M90.5 17.6V31.4M91.5 23.9V25.1M92.5 19.0V30.0M93.5 23.9V25.1M94.5 23.9V25.1M95.5 23.9V25.1M96.5 23.9V25.1M97.5 23.9V25.1M98.5 23.9V25.1M99.5 19.6V29.4M100.5 23.9V25.1M101.5 19.9V29.1M102.5 23.9V25.1M103.5 23.9V25.1M104.5 23.9V25.1M105.5 23.9V25.1M106.5 23.9V25.1M107.5 23.9V25.1M108.5 19.0V30.0M109.5 23.9V25.1M110.5 20.2V28.8M111.5 23.9V25.1M112.5 23.9V25.1M113.5 23.9V25.1M114.5 23.9V25.1M115.5 23.9V25.1M116.5 23.9V25.1M117.5 19.0V30.0M118.5 23.9V25.1M119.5 17.5V31.5M120.5 23.9V25.1M121.5 23.9V25.1M122.5 23.9V25.1M123.5 23.9V25.1M124.5 23.9V25.1M125.5 23.9V25.1M126.5 18.6V30.4M127.5 23.9V25.1M128.5 19.4V29.6M129.5 23.9V25.1M130.5 23.9V25.1M131.5 23.9V25.1M132.5 23.9V25.1M133.5 23.9V25.1M134.5 17.8V31.2" stroke="#a5bcd7" stroke-width="1"/></svg>
<div class="rt">140 Rebirth Hat 05.1<svg width="10.5" height="6" viewBox="0 0 11 6" style="margin-left:3.2px;vertical-align:-0.5px"><g fill="none" stroke="#dfe7f0" stroke-width="0.85"><path d="M1.6,5.2 C0.2,3.6 0.8,0.8 3,0.8 C5.2,0.8 5.8,3.6 4.4,5.2"/><path d="M6.6,5.2 C5.2,3.6 5.8,0.8 8,0.8 C10.2,0.8 10.8,3.6 9.4,5.2"/><path d="M0.3,5.5 H10.7"/></g></svg></div>
</div>
<div class="reg" style="left:920px;top:217.00px;width:135px;height:39px">
<svg class="abs" style="left:0;top:0" width="135" height="39"><rect x="0" y="24.0" width="135" height="1" fill="#8fabcf"/><path d="M0.5 23.9V25.1M1.5 19.2V29.8M2.5 23.9V25.1M3.5 18.6V30.4M4.5 23.9V25.1M5.5 23.9V25.1M6.5 23.9V25.1M7.5 23.9V25.1M8.5 23.9V25.1M9.5 19.6V29.4M10.5 23.9V25.1M11.5 19.2V29.8M12.5 23.9V25.1M13.5 23.9V25.1M14.5 23.9V25.1M15.5 23.9V25.1M16.5 23.9V25.1M17.5 23.9V25.1M18.5 20.0V29.0M19.5 23.9V25.1M20.5 17.6V31.4M21.5 23.9V25.1M22.5 18.6V30.4M23.5 23.9V25.1M24.5 17.7V31.3M25.5 23.9V25.1M26.5 23.9V25.1M27.5 23.9V25.1M28.5 23.9V25.1M29.5 18.7V30.3M30.5 23.9V25.1M31.5 18.4V30.6M32.5 23.9V25.1M33.5 18.7V30.3M34.5 23.9V25.1M35.5 20.4V28.6M36.5 23.9V25.1M37.5 23.9V25.1M38.5 23.9V25.1M39.5 23.9V25.1M40.5 23.9V25.1M41.5 23.9V25.1M42.5 18.9V30.1M43.5 23.9V25.1M44.5 17.9V31.1M45.5 23.9V25.1M46.5 19.1V29.9M47.5 23.9V25.1M48.5 23.9V25.1M49.5 23.9V25.1M50.5 23.9V25.1M51.5 23.9V25.1M52.5 23.9V25.1M53.5 19.5V29.5M54.5 23.9V25.1M55.5 19.1V29.9M56.5 23.9V25.1M57.5 18.4V30.6M58.5 23.9V25.1M59.5 19.7V29.3M60.5 23.9V25.1M61.5 23.9V25.1M62.5 23.9V25.1M63.5 23.9V25.1M64.5 19.5V29.5M65.5 23.9V25.1M66.5 18.6V30.4M67.5 23.9V25.1M68.5 23.9V25.1M69.5 23.9V25.1M70.5 23.9V25.1M71.5 23.9V25.1M72.5 23.9V25.1M73.5 19.0V30.0M74.5 23.9V25.1M75.5 19.7V29.3M76.5 23.9V25.1M77.5 23.9V25.1M78.5 23.9V25.1M79.5 23.9V25.1M80.5 23.9V25.1M81.5 23.9V25.1M82.5 20.0V29.0M83.5 23.9V25.1M84.5 20.0V29.0M85.5 23.9V25.1M86.5 19.8V29.2M87.5 23.9V25.1M88.5 19.5V29.5M89.5 23.9V25.1M90.5 23.9V25.1M91.5 23.9V25.1M92.5 23.9V25.1M93.5 23.9V25.1M94.5 23.9V25.1M95.5 20.0V29.0M96.5 23.9V25.1M97.5 19.5V29.5M98.5 23.9V25.1M99.5 19.9V29.1M100.5 23.9V25.1M101.5 23.9V25.1M102.5 23.9V25.1M103.5 23.9V25.1M104.5 23.9V25.1M105.5 23.9V25.1M106.5 20.0V29.0M107.5 23.9V25.1M108.5 18.5V30.5M109.5 23.9V25.1M110.5 23.9V25.1M111.5 23.9V25.1M112.5 23.9V25.1M113.5 20.0V29.0M114.5 23.9V25.1M115.5 20.1V28.9M116.5 23.9V25.1M117.5 19.6V29.4M118.5 23.9V25.1M119.5 23.9V25.1M120.5 23.9V25.1M121.5 23.9V25.1M122.5 23.9V25.1M123.5 19.7V29.3M124.5 23.9V25.1M125.5 20.2V28.8M126.5 23.9V25.1M127.5 17.8V31.2M128.5 23.9V25.1M129.5 23.9V25.1M130.5 23.9V25.1M131.5 23.9V25.1M132.5 23.9V25.1M133.5 17.8V31.2M134.5 23.9V25.1" stroke="#a5bcd7" stroke-width="1"/></svg>
<div class="rt">140 Rebirth Hat 06.1<svg width="10.5" height="6" viewBox="0 0 11 6" style="margin-left:3.2px;vertical-align:-0.5px"><g fill="none" stroke="#dfe7f0" stroke-width="0.85"><path d="M1.6,5.2 C0.2,3.6 0.8,0.8 3,0.8 C5.2,0.8 5.8,3.6 4.4,5.2"/><path d="M6.6,5.2 C5.2,3.6 5.8,0.8 8,0.8 C10.2,0.8 10.8,3.6 9.4,5.2"/><path d="M0.3,5.5 H10.7"/></g></svg></div>
</div>
<div class="reg" style="left:376px;top:257.67px;width:135px;height:39px">
<svg class="abs" style="left:0;top:0" width="135" height="39"><rect x="0" y="24.0" width="135" height="1" fill="#8fabcf"/><path d="M0.5 19.1V29.9M1.5 19.0V30.0M2.5 18.9V30.1M3.5 19.1V29.9M4.5 19.3V29.7M5.5 19.3V29.7M6.5 19.4V29.6M7.5 19.7V29.3M8.5 19.6V29.4M9.5 19.7V29.3M10.5 19.7V29.3M11.5 19.7V29.3M12.5 20.0V29.0M13.5 20.0V29.0M14.5 20.0V29.0M15.5 20.3V28.7M16.5 20.4V28.6M17.5 20.3V28.7M18.5 20.3V28.7M19.5 20.4V28.6M20.5 20.6V28.4M21.5 20.6V28.4M22.5 20.8V28.2M23.5 20.9V28.1M24.5 21.0V28.0M25.5 21.2V27.8M26.5 21.1V27.9M27.5 21.5V27.5M28.5 21.4V27.6M29.5 21.3V27.7M30.5 21.4V27.6M31.5 21.6V27.4M32.5 21.8V27.2M33.5 21.8V27.2M34.5 18.9V30.1M35.5 18.9V30.1M36.5 19.1V29.9M37.5 19.1V29.9M38.5 19.0V30.0M39.5 19.5V29.5M40.5 19.4V29.6M41.5 19.4V29.6M42.5 19.7V29.3M43.5 19.7V29.3M44.5 19.5V29.5M45.5 20.1V28.9M46.5 19.9V29.1M47.5 20.2V28.8M48.5 20.0V29.0M49.5 20.0V29.0M50.5 20.3V28.7M51.5 20.6V28.4M52.5 20.5V28.5M53.5 20.6V28.4M54.5 20.6V28.4M55.5 20.7V28.3M56.5 20.8V28.2M57.5 20.8V28.2M58.5 21.0V28.0M59.5 21.2V27.8M60.5 21.0V28.0M61.5 21.4V27.6M62.5 21.3V27.7M63.5 21.5V27.5M64.5 21.4V27.6M65.5 21.8V27.2M66.5 21.5V27.5M67.5 21.9V27.1M68.5 19.1V29.9M69.5 19.1V29.9M70.5 19.1V29.9M71.5 19.4V29.6M72.5 19.3V29.7M73.5 19.4V29.6M74.5 19.3V29.7M75.5 19.6V29.4M76.5 19.7V29.3M77.5 19.8V29.2M78.5 19.7V29.3M79.5 19.7V29.3M80.5 19.9V29.1M81.5 20.2V28.8M82.5 20.0V29.0M83.5 20.3V28.7M84.5 20.5V28.5M85.5 20.6V28.4M86.5 20.3V28.7M87.5 20.4V28.6M88.5 20.6V28.4M89.5 20.8V28.2M90.5 20.8V28.2M91.5 21.1V27.9M92.5 20.8V28.2M93.5 21.2V27.8M94.5 21.1V27.9M95.5 21.1V27.9M96.5 21.2V27.8M97.5 21.5V27.5M98.5 21.6V27.4M99.5 21.6V27.4M100.5 21.9V27.1M101.5 21.6V27.4M102.5 19.0V30.0M103.5 18.8V30.2M104.5 19.2V29.8M105.5 19.2V29.8M106.5 19.4V29.6M107.5 19.4V29.6M108.5 19.6V29.4M109.5 19.8V29.2M110.5 19.5V29.5M111.5 19.8V29.2M112.5 19.9V29.1M113.5 20.0V29.0M114.5 20.0V29.0M115.5 20.1V28.9M116.5 20.1V28.9M117.5 20.1V28.9M118.5 20.4V28.6M119.5 20.2V28.8M120.5 20.3V28.7M121.5 20.8V28.2M122.5 20.5V28.5M123.5 20.6V28.4M124.5 20.7V28.3M125.5 21.1V27.9M126.5 20.9V28.1M127.5 21.0V28.0M128.5 21.4V27.6M129.5 21.5V27.5M130.5 21.1V27.9M131.5 21.4V27.6M132.5 21.7V27.3M133.5 21.8V27.2M134.5 21.9V27.1" stroke="#a5bcd7" stroke-width="1"/></svg>
<div class="rt">140 Private Synth Bass Fm 02.1<svg width="10.5" height="6" viewBox="0 0 11 6" style="margin-left:3.2px;vertical-align:-0.5px"><g fill="none" stroke="#dfe7f0" stroke-width="0.85"><path d="M1.6,5.2 C0.2,3.6 0.8,0.8 3,0.8 C5.2,0.8 5.8,3.6 4.4,5.2"/><path d="M6.6,5.2 C5.2,3.6 5.8,0.8 8,0.8 C10.2,0.8 10.8,3.6 9.4,5.2"/><path d="M0.3,5.5 H10.7"/></g></svg></div>
</div>
<div class="reg" style="left:512px;top:257.67px;width:135px;height:39px">
<svg class="abs" style="left:0;top:0" width="135" height="39"><rect x="0" y="24.0" width="135" height="1" fill="#8fabcf"/><path d="M0.5 19.0V30.0M1.5 18.9V30.1M2.5 19.2V29.8M3.5 19.3V29.7M4.5 19.1V29.9M5.5 19.2V29.8M6.5 19.6V29.4M7.5 19.3V29.7M8.5 19.6V29.4M9.5 19.6V29.4M10.5 19.7V29.3M11.5 19.7V29.3M12.5 19.8V29.2M13.5 19.9V29.1M14.5 20.3V28.7M15.5 20.1V28.9M16.5 20.3V28.7M17.5 20.3V28.7M18.5 20.5V28.5M19.5 20.4V28.6M20.5 20.6V28.4M21.5 20.9V28.1M22.5 21.0V28.0M23.5 21.1V27.9M24.5 21.0V28.0M25.5 21.3V27.7M26.5 21.2V27.8M27.5 21.5V27.5M28.5 21.4V27.6M29.5 21.5V27.5M30.5 21.5V27.5M31.5 21.5V27.5M32.5 22.0V27.0M33.5 21.6V27.4M34.5 18.9V30.1M35.5 19.0V30.0M36.5 19.0V30.0M37.5 19.0V30.0M38.5 19.3V29.7M39.5 19.4V29.6M40.5 19.2V29.8M41.5 19.7V29.3M42.5 19.5V29.5M43.5 19.6V29.4M44.5 20.0V29.0M45.5 19.8V29.2M46.5 19.9V29.1M47.5 19.8V29.2M48.5 20.2V28.8M49.5 20.0V29.0M50.5 20.3V28.7M51.5 20.4V28.6M52.5 20.3V28.7M53.5 20.8V28.2M54.5 20.6V28.4M55.5 20.7V28.3M56.5 20.9V28.1M57.5 20.7V28.3M58.5 21.1V27.9M59.5 21.1V27.9M60.5 21.2V27.8M61.5 21.1V27.9M62.5 21.5V27.5M63.5 21.5V27.5M64.5 21.6V27.4M65.5 21.6V27.4M66.5 21.6V27.4M67.5 21.9V27.1M68.5 18.7V30.3M69.5 19.0V30.0M70.5 19.1V29.9M71.5 19.3V29.7M72.5 19.2V29.8M73.5 19.1V29.9M74.5 19.4V29.6M75.5 19.4V29.6M76.5 19.7V29.3M77.5 19.8V29.2M78.5 19.9V29.1M79.5 19.8V29.2M80.5 19.9V29.1M81.5 19.9V29.1M82.5 20.4V28.6M83.5 20.1V28.9M84.5 20.1V28.9M85.5 20.4V28.6M86.5 20.7V28.3M87.5 20.7V28.3M88.5 20.9V28.1M89.5 20.9V28.1M90.5 20.6V28.4M91.5 20.9V28.1M92.5 20.9V28.1M93.5 21.0V28.0M94.5 21.0V28.0M95.5 21.2V27.8M96.5 21.3V27.7M97.5 21.4V27.6M98.5 21.4V27.6M99.5 21.6V27.4M100.5 21.6V27.4M101.5 22.0V27.0M102.5 18.8V30.2M103.5 19.0V30.0M104.5 18.9V30.1M105.5 19.4V29.6M106.5 19.4V29.6M107.5 19.6V29.4M108.5 19.3V29.7M109.5 19.3V29.7M110.5 19.5V29.5M111.5 19.8V29.2M112.5 19.6V29.4M113.5 19.7V29.3M114.5 19.9V29.1M115.5 20.2V28.8M116.5 20.2V28.8M117.5 20.3V28.7M118.5 20.4V28.6M119.5 20.4V28.6M120.5 20.4V28.6M121.5 20.4V28.6M122.5 20.9V28.1M123.5 20.7V28.3M124.5 21.1V27.9M125.5 21.1V27.9M126.5 20.9V28.1M127.5 21.1V27.9M128.5 21.0V28.0M129.5 21.3V27.7M130.5 21.6V27.4M131.5 21.5V27.5M132.5 21.5V27.5M133.5 21.4V27.6M134.5 21.5V27.5" stroke="#a5bcd7" stroke-width="1"/></svg>
<div class="rt">140 Private Synth Bass Fm 03.1<svg width="10.5" height="6" viewBox="0 0 11 6" style="margin-left:3.2px;vertical-align:-0.5px"><g fill="none" stroke="#dfe7f0" stroke-width="0.85"><path d="M1.6,5.2 C0.2,3.6 0.8,0.8 3,0.8 C5.2,0.8 5.8,3.6 4.4,5.2"/><path d="M6.6,5.2 C5.2,3.6 5.8,0.8 8,0.8 C10.2,0.8 10.8,3.6 9.4,5.2"/><path d="M0.3,5.5 H10.7"/></g></svg></div>
</div>
<div class="reg" style="left:648px;top:257.67px;width:135px;height:39px">
<svg class="abs" style="left:0;top:0" width="135" height="39"><rect x="0" y="24.0" width="135" height="1" fill="#8fabcf"/><path d="M0.5 19.6V29.4M1.5 19.7V29.3M2.5 20.0V29.0M3.5 19.8V29.2M4.5 20.1V28.9M5.5 20.2V28.8M6.5 20.4V28.6M7.5 20.5V28.5M8.5 17.0V32.0M9.5 20.6V28.4M10.5 20.3V28.7M11.5 20.8V28.2M12.5 20.5V28.5M13.5 20.9V28.1M14.5 21.1V27.9M15.5 20.8V28.2M16.5 21.1V27.9M17.5 21.0V28.0M18.5 21.4V27.6M19.5 21.5V27.5M20.5 21.2V27.8M21.5 21.4V27.6M22.5 21.4V27.6M23.5 21.5V27.5M24.5 21.9V27.1M25.5 21.7V27.3M26.5 18.8V30.2M27.5 19.0V30.0M28.5 18.9V30.1M29.5 19.3V29.7M30.5 19.0V30.0M31.5 19.2V29.8M32.5 19.7V29.3M33.5 19.8V29.2M34.5 19.5V29.5M35.5 19.5V29.5M36.5 20.0V29.0M37.5 20.0V29.0M38.5 19.8V29.2M39.5 20.2V28.8M40.5 20.0V29.0M41.5 20.2V28.8M42.5 20.5V28.5M43.5 20.5V28.5M44.5 20.5V28.5M45.5 20.6V28.4M46.5 20.6V28.4M47.5 20.9V28.1M48.5 20.7V28.3M49.5 21.0V28.0M50.5 20.9V28.1M51.5 21.0V28.0M52.5 21.2V27.8M53.5 21.3V27.7M54.5 21.2V27.8M55.5 21.2V27.8M56.5 21.4V27.6M57.5 21.6V27.4M58.5 21.8V27.2M59.5 17.0V32.0M60.5 18.7V30.3M61.5 18.9V30.1M62.5 18.9V30.1M63.5 19.2V29.8M64.5 19.2V29.8M65.5 19.1V29.9M66.5 19.3V29.7M67.5 19.5V29.5M68.5 19.7V29.3M69.5 19.7V29.3M70.5 19.6V29.4M71.5 19.9V29.1M72.5 19.9V29.1M73.5 20.0V29.0M74.5 19.9V29.1M75.5 20.1V28.9M76.5 20.4V28.6M77.5 20.6V28.4M78.5 20.6V28.4M79.5 20.6V28.4M80.5 20.6V28.4M81.5 20.6V28.4M82.5 20.6V28.4M83.5 21.2V27.8M84.5 20.9V28.1M85.5 21.0V28.0M86.5 21.0V28.0M87.5 21.2V27.8M88.5 21.5V27.5M89.5 21.3V27.7M90.5 21.4V27.6M91.5 21.5V27.5M92.5 17.0V32.0M93.5 21.9V27.1M94.5 19.1V29.9M95.5 19.0V30.0M96.5 18.9V30.1M97.5 19.3V29.7M98.5 19.1V29.9M99.5 19.1V29.9M100.5 19.6V29.4M101.5 19.5V29.5M102.5 19.5V29.5M103.5 19.7V29.3M104.5 19.9V29.1M105.5 20.0V29.0M106.5 19.8V29.2M107.5 19.9V29.1M108.5 20.2V28.8M109.5 20.4V28.6M110.5 20.2V28.8M111.5 20.3V28.7M112.5 20.6V28.4M113.5 20.5V28.5M114.5 20.5V28.5M115.5 20.6V28.4M116.5 20.8V28.2M117.5 20.9V28.1M118.5 21.0V28.0M119.5 21.3V27.7M120.5 21.3V27.7M121.5 21.4V27.6M122.5 21.3V27.7M123.5 21.5V27.5M124.5 21.5V27.5M125.5 21.7V27.3M126.5 17.0V32.0M127.5 22.0V27.0M128.5 19.1V29.9M129.5 18.7V30.3M130.5 17.0V32.0M131.5 19.4V29.6M132.5 19.2V29.8M133.5 19.2V29.8M134.5 19.6V29.4" stroke="#a5bcd7" stroke-width="1"/></svg>
<div class="rt">140 Private Synth Bass Fm 04.3<svg width="10.5" height="6" viewBox="0 0 11 6" style="margin-left:3.2px;vertical-align:-0.5px"><g fill="none" stroke="#dfe7f0" stroke-width="0.85"><path d="M1.6,5.2 C0.2,3.6 0.8,0.8 3,0.8 C5.2,0.8 5.8,3.6 4.4,5.2"/><path d="M6.6,5.2 C5.2,3.6 5.8,0.8 8,0.8 C10.2,0.8 10.8,3.6 9.4,5.2"/><path d="M0.3,5.5 H10.7"/></g></svg></div>
</div>
<div class="reg" style="left:784px;top:298.33px;width:135px;height:39px">
<svg class="abs" style="left:0;top:0" width="135" height="39"><rect x="0" y="24.0" width="135" height="1" fill="#8fabcf"/><path d="M0.5 21.5V27.5M1.5 21.5V27.5M2.5 21.5V27.5M3.5 21.5V27.5M4.5 21.5V27.5M5.5 21.5V27.5M6.5 21.5V27.5M7.5 21.5V27.5M8.5 21.5V27.5M9.5 24.0V25.0M10.5 24.0V25.0M11.5 24.0V25.0M12.5 24.0V25.0M13.5 24.0V25.0M14.5 24.0V25.0M15.5 24.0V25.0M16.5 24.0V25.0M17.5 21.5V27.5M18.5 21.5V27.5M19.5 21.5V27.5M20.5 21.5V27.5M21.5 21.5V27.5M22.5 21.5V27.5M23.5 21.5V27.5M24.5 21.5V27.5M25.5 21.5V27.5M26.5 24.0V25.0M27.5 24.0V25.0M28.5 24.0V25.0M29.5 24.0V25.0M30.5 24.0V25.0M31.5 24.0V25.0M32.5 24.0V25.0M33.5 21.5V27.5M34.5 21.5V27.5M35.5 21.5V27.5M36.5 21.5V27.5M37.5 21.5V27.5M38.5 21.5V27.5M39.5 21.5V27.5M40.5 21.5V27.5M41.5 21.5V27.5M42.5 24.0V25.0M43.5 24.0V25.0M44.5 24.0V25.0M45.5 24.0V25.0M46.5 24.0V25.0M47.5 24.0V25.0M48.5 24.0V25.0M49.5 24.0V25.0M50.5 21.5V27.5M51.5 21.5V27.5M52.5 21.5V27.5M53.5 21.5V27.5M54.5 21.5V27.5M55.5 21.5V27.5M56.5 21.5V27.5M57.5 21.5V27.5M58.5 21.5V27.5M59.5 24.0V25.0M60.5 24.0V25.0M61.5 24.0V25.0M62.5 24.0V25.0M63.5 24.0V25.0M64.5 24.0V25.0M65.5 24.0V25.0M66.5 24.0V25.0M67.5 21.5V27.5M68.5 21.5V27.5M69.5 21.5V27.5M70.5 21.5V27.5M71.5 21.5V27.5M72.5 21.5V27.5M73.5 21.5V27.5M74.5 21.5V27.5M75.5 21.5V27.5M76.5 24.0V25.0M77.5 24.0V25.0M78.5 24.0V25.0M79.5 24.0V25.0M80.5 24.0V25.0M81.5 24.0V25.0M82.5 24.0V25.0M83.5 24.0V25.0M84.5 21.5V27.5M85.5 21.5V27.5M86.5 21.5V27.5M87.5 21.5V27.5M88.5 21.5V27.5M89.5 21.5V27.5M90.5 21.5V27.5M91.5 21.5V27.5M92.5 21.5V27.5M93.5 24.0V25.0M94.5 24.0V25.0M95.5 24.0V25.0M96.5 24.0V25.0M97.5 24.0V25.0M98.5 24.0V25.0M99.5 24.0V25.0M100.5 21.5V27.5M101.5 21.5V27.5M102.5 21.5V27.5M103.5 21.5V27.5M104.5 21.5V27.5M105.5 21.5V27.5M106.5 21.5V27.5M107.5 21.5V27.5M108.5 21.5V27.5M109.5 24.0V25.0M110.5 24.0V25.0M111.5 24.0V25.0M112.5 24.0V25.0M113.5 24.0V25.0M114.5 24.0V25.0M115.5 24.0V25.0M116.5 24.0V25.0M117.5 21.3V27.7M118.5 21.3V27.7M119.5 21.3V27.7M120.5 21.3V27.7M121.5 21.3V27.7M122.5 21.3V27.7M123.5 21.3V27.7M124.5 21.3V27.7M125.5 21.3V27.7M126.5 18.5V30.5M127.5 21.3V27.7M128.5 21.3V27.7M129.5 21.3V27.7M130.5 21.3V27.7M131.5 21.3V27.7M132.5 21.3V27.7M133.5 21.3V27.7M134.5 21.3V27.7" stroke="#a5bcd7" stroke-width="1"/></svg>
<div class="rt">140 Mean Synth Bass Fm 05.1<svg width="10.5" height="6" viewBox="0 0 11 6" style="margin-left:3.2px;vertical-align:-0.5px"><g fill="none" stroke="#dfe7f0" stroke-width="0.85"><path d="M1.6,5.2 C0.2,3.6 0.8,0.8 3,0.8 C5.2,0.8 5.8,3.6 4.4,5.2"/><path d="M6.6,5.2 C5.2,3.6 5.8,0.8 8,0.8 C10.2,0.8 10.8,3.6 9.4,5.2"/><path d="M0.3,5.5 H10.7"/></g></svg></div>
</div>
<div class="reg" style="left:920px;top:298.33px;width:135px;height:39px">
<svg class="abs" style="left:0;top:0" width="135" height="39"><rect x="0" y="24.0" width="135" height="1" fill="#8fabcf"/><path d="M0.5 21.2V27.8M1.5 21.2V27.8M2.5 21.2V27.8M3.5 21.2V27.8M4.5 21.2V27.8M5.5 21.2V27.8M6.5 21.2V27.8M7.5 21.2V27.8M8.5 21.2V27.8M9.5 21.2V27.8M10.5 21.2V27.8M11.5 21.2V27.8M12.5 21.2V27.8M13.5 21.2V27.8M14.5 21.2V27.8M15.5 21.2V27.8M16.5 21.2V27.8M17.5 21.2V27.8M18.5 21.2V27.8M19.5 21.2V27.8M20.5 21.2V27.8M21.5 21.2V27.8M22.5 21.2V27.8M23.5 21.2V27.8M24.5 21.2V27.8M25.5 17.5V31.5M26.5 21.2V27.8M27.5 21.2V27.8M28.5 21.2V27.8M29.5 21.2V27.8M30.5 21.2V27.8M31.5 21.2V27.8M32.5 21.2V27.8M33.5 17.5V31.5M34.5 21.2V27.8M35.5 21.2V27.8M36.5 21.2V27.8M37.5 21.2V27.8M38.5 21.2V27.8M39.5 21.2V27.8M40.5 21.2V27.8M41.5 21.2V27.8M42.5 21.2V27.8M43.5 21.2V27.8M44.5 21.2V27.8M45.5 21.2V27.8M46.5 21.2V27.8M47.5 21.2V27.8M48.5 21.2V27.8M49.5 21.2V27.8M50.5 21.2V27.8M51.5 21.2V27.8M52.5 21.2V27.8M53.5 21.2V27.8M54.5 21.2V27.8M55.5 21.2V27.8M56.5 21.2V27.8M57.5 21.2V27.8M58.5 17.5V31.5M59.5 21.2V27.8M60.5 21.2V27.8M61.5 21.2V27.8M62.5 21.2V27.8M63.5 21.2V27.8M64.5 21.2V27.8M65.5 21.2V27.8M66.5 21.2V27.8M67.5 17.5V31.5M68.5 21.2V27.8M69.5 21.2V27.8M70.5 21.2V27.8M71.5 21.2V27.8M72.5 21.2V27.8M73.5 21.2V27.8M74.5 21.2V27.8M75.5 21.2V27.8M76.5 21.2V27.8M77.5 21.2V27.8M78.5 21.2V27.8M79.5 21.2V27.8M80.5 21.2V27.8M81.5 21.2V27.8M82.5 21.2V27.8M83.5 21.2V27.8M84.5 21.2V27.8M85.5 21.2V27.8M86.5 21.2V27.8M87.5 21.2V27.8M88.5 21.2V27.8M89.5 21.2V27.8M90.5 21.2V27.8M91.5 21.2V27.8M92.5 17.5V31.5M93.5 21.2V27.8M94.5 21.2V27.8M95.5 21.2V27.8M96.5 21.2V27.8M97.5 21.2V27.8M98.5 21.2V27.8M99.5 21.2V27.8M100.5 21.2V27.8M101.5 17.5V31.5M102.5 21.2V27.8M103.5 21.2V27.8M104.5 21.2V27.8M105.5 21.2V27.8M106.5 21.2V27.8M107.5 21.2V27.8M108.5 21.2V27.8M109.5 21.2V27.8M110.5 21.2V27.8M111.5 21.2V27.8M112.5 21.2V27.8M113.5 21.2V27.8M114.5 21.2V27.8M115.5 21.2V27.8M116.5 21.2V27.8M117.5 21.2V27.8M118.5 21.2V27.8M119.5 21.2V27.8M120.5 21.2V27.8M121.5 21.2V27.8M122.5 21.2V27.8M123.5 21.2V27.8M124.5 21.2V27.8M125.5 17.5V31.5M126.5 21.2V27.8M127.5 21.2V27.8M128.5 21.2V27.8M129.5 21.2V27.8M130.5 17.5V31.5M131.5 21.2V27.8M132.5 21.2V27.8M133.5 21.2V27.8M134.5 21.2V27.8" stroke="#a5bcd7" stroke-width="1"/></svg>
<div class="rt">140 Mean Synth Bass Fm 06.1<svg width="10.5" height="6" viewBox="0 0 11 6" style="margin-left:3.2px;vertical-align:-0.5px"><g fill="none" stroke="#dfe7f0" stroke-width="0.85"><path d="M1.6,5.2 C0.2,3.6 0.8,0.8 3,0.8 C5.2,0.8 5.8,3.6 4.4,5.2"/><path d="M6.6,5.2 C5.2,3.6 5.8,0.8 8,0.8 C10.2,0.8 10.8,3.6 9.4,5.2"/><path d="M0.3,5.5 H10.7"/></g></svg></div>
</div>
<div class="reg" style="left:1056px;top:298.33px;width:118.5px;height:39px">
<svg class="abs" style="left:0;top:0" width="118" height="39"><rect x="0" y="24.0" width="118" height="1" fill="#8fabcf"/><path d="M0.5 21.2V27.8M1.5 21.2V27.8M2.5 21.2V27.8M3.5 21.2V27.8M4.5 21.2V27.8M5.5 21.2V27.8M6.5 21.2V27.8M7.5 21.2V27.8M8.5 21.2V27.8M9.5 21.2V27.8M10.5 21.2V27.8M11.5 21.2V27.8M12.5 21.2V27.8M13.5 21.2V27.8M14.5 21.2V27.8M15.5 21.2V27.8M16.5 21.2V27.8M17.5 21.2V27.8M18.5 21.2V27.8M19.5 21.2V27.8M20.5 21.2V27.8M21.5 21.2V27.8M22.5 21.2V27.8M23.5 21.2V27.8M24.5 21.2V27.8M25.5 21.2V27.8M26.5 21.2V27.8M27.5 21.2V27.8M28.5 21.2V27.8M29.5 21.2V27.8M30.5 21.2V27.8M31.5 21.2V27.8M32.5 21.2V27.8M33.5 21.2V27.8M34.5 21.2V27.8M35.5 21.2V27.8M36.5 21.2V27.8M37.5 21.2V27.8M38.5 21.2V27.8M39.5 21.2V27.8M40.5 21.2V27.8M41.5 21.2V27.8M42.5 21.2V27.8M43.5 21.2V27.8M44.5 21.2V27.8M45.5 21.2V27.8M46.5 21.2V27.8M47.5 21.2V27.8M48.5 21.2V27.8M49.5 21.2V27.8M50.5 21.2V27.8M51.5 21.2V27.8M52.5 21.2V27.8M53.5 21.2V27.8M54.5 21.2V27.8M55.5 21.2V27.8M56.5 21.2V27.8M57.5 21.2V27.8M58.5 21.2V27.8M59.5 21.2V27.8M60.5 21.2V27.8M61.5 21.2V27.8M62.5 21.2V27.8M63.5 21.2V27.8M64.5 20.0V29.0M65.5 20.0V29.0M66.5 20.0V29.0M67.5 23.9V25.1M68.5 23.9V25.1M69.5 23.9V25.1M70.5 23.9V25.1M71.5 23.9V25.1M72.5 23.9V25.1M73.5 23.9V25.1M74.5 23.9V25.1M75.5 23.9V25.1M76.5 23.9V25.1M77.5 23.9V25.1M78.5 23.9V25.1M79.5 23.9V25.1M80.5 23.9V25.1M81.5 23.9V25.1M82.5 23.9V25.1M83.5 23.9V25.1M84.5 23.9V25.1M85.5 23.9V25.1M86.5 23.9V25.1M87.5 23.9V25.1M88.5 23.9V25.1M89.5 23.9V25.1M90.5 23.9V25.1M91.5 23.9V25.1M92.5 23.9V25.1M93.5 23.9V25.1M94.5 23.9V25.1M95.5 23.9V25.1M96.5 23.9V25.1M97.5 23.9V25.1M98.5 23.9V25.1M99.5 23.9V25.1M100.5 23.9V25.1M101.5 23.9V25.1M102.5 23.9V25.1M103.5 23.9V25.1M104.5 23.9V25.1M105.5 23.9V25.1M106.5 23.9V25.1M107.5 23.9V25.1M108.5 23.9V25.1M109.5 23.9V25.1M110.5 23.9V25.1M111.5 23.9V25.1M112.5 23.9V25.1M113.5 23.9V25.1M114.5 23.9V25.1M115.5 23.9V25.1M116.5 23.9V25.1M117.5 23.9V25.1" stroke="#a5bcd7" stroke-width="1"/></svg>
<div class="rt">140 Mean Synth Bass Fm 07<svg width="10.5" height="6" viewBox="0 0 11 6" style="margin-left:3.2px;vertical-align:-0.5px"><g fill="none" stroke="#dfe7f0" stroke-width="0.85"><path d="M1.6,5.2 C0.2,3.6 0.8,0.8 3,0.8 C5.2,0.8 5.8,3.6 4.4,5.2"/><path d="M6.6,5.2 C5.2,3.6 5.8,0.8 8,0.8 C10.2,0.8 10.8,3.6 9.4,5.2"/><path d="M0.3,5.5 H10.7"/></g></svg></div>
</div>
<div class="reg" style="left:512px;top:339.00px;width:135px;height:39px">
<svg class="abs" style="left:0;top:0" width="135" height="39"><rect x="0" y="24.0" width="135" height="1" fill="#8fabcf"/><path d="M0.5 22.9V26.1M1.5 23.1V25.9M2.5 23.0V26.0M3.5 23.4V25.6M4.5 23.4V25.6M5.5 22.6V26.4M6.5 22.7V26.3M7.5 23.0V26.0M8.5 22.9V26.1M9.5 23.2V25.8M10.5 22.8V26.2M11.5 23.0V26.0M12.5 22.6V26.4M13.5 22.8V26.2M14.5 22.7V26.3M15.5 22.6V26.4M16.5 23.2V25.8M17.5 23.3V25.7M18.5 23.2V25.8M19.5 23.2V25.8M20.5 23.3V25.7M21.5 23.3V25.7M22.5 22.9V26.1M23.5 22.7V26.3M24.5 23.0V26.0M25.5 22.6V26.4M26.5 22.7V26.3M27.5 23.3V25.7M28.5 22.9V26.1M29.5 23.1V25.9M30.5 23.3V25.7M31.5 22.6V26.4M32.5 23.2V25.8M33.5 22.9V26.1M34.5 22.9V26.1M35.5 22.6V26.4M36.5 22.8V26.2M37.5 23.1V25.9M38.5 23.0V26.0M39.5 23.3V25.7M40.5 22.6V26.4M41.5 22.6V26.4M42.5 23.2V25.8M43.5 23.3V25.7M44.5 23.2V25.8M45.5 23.1V25.9M46.5 22.7V26.3M47.5 22.7V26.3M48.5 22.7V26.3M49.5 23.3V25.7M50.5 22.8V26.2M51.5 22.8V26.2M52.5 22.9V26.1M53.5 22.6V26.4M54.5 23.3V25.7M55.5 23.3V25.7M56.5 22.8V26.2M57.5 22.6V26.4M58.5 22.8V26.2M59.5 23.1V25.9M60.5 22.9V26.1M61.5 22.8V26.2M62.5 23.3V25.7M63.5 23.1V25.9M64.5 23.2V25.8M65.5 23.3V25.7M66.5 23.0V26.0M67.5 23.2V25.8M68.5 23.2V25.8M69.5 23.3V25.7M70.5 22.8V26.2M71.5 23.4V25.6M72.5 22.8V26.2M73.5 23.2V25.8M74.5 23.4V25.6M75.5 22.6V26.4M76.5 23.2V25.8M77.5 22.6V26.4M78.5 22.7V26.3M79.5 22.7V26.3M80.5 23.3V25.7M81.5 23.0V26.0M82.5 23.3V25.7M83.5 22.6V26.4M84.5 22.7V26.3M85.5 22.9V26.1M86.5 23.0V26.0M87.5 23.1V25.9M88.5 22.7V26.3M89.5 23.0V26.0M90.5 22.9V26.1M91.5 23.3V25.7M92.5 23.2V25.8M93.5 23.3V25.7M94.5 22.8V26.2M95.5 22.9V26.1M96.5 23.3V25.7M97.5 22.7V26.3M98.5 23.2V25.8M99.5 23.1V25.9M100.5 23.3V25.7M101.5 23.2V25.8M102.5 22.7V26.3M103.5 23.1V25.9M104.5 23.2V25.8M105.5 23.0V26.0M106.5 23.1V25.9M107.5 22.7V26.3M108.5 23.3V25.7M109.5 22.6V26.4M110.5 23.3V25.7M111.5 22.7V26.3M112.5 22.8V26.2M113.5 23.2V25.8M114.5 23.0V26.0M115.5 23.2V25.8M116.5 23.2V25.8M117.5 23.2V25.8M118.5 23.1V25.9M119.5 22.6V26.4M120.5 22.6V26.4M121.5 22.6V26.4M122.5 23.3V25.7M123.5 23.1V25.9M124.5 22.7V26.3M125.5 23.3V25.7M126.5 22.8V26.2M127.5 23.1V25.9M128.5 22.6V26.4M129.5 23.4V25.6M130.5 22.7V26.3M131.5 23.1V25.9M132.5 23.3V25.7M133.5 23.4V25.6M134.5 22.7V26.3" stroke="#a5bcd7" stroke-width="1"/></svg>
<div class="rt">140 Okra Voda Fm 03.1<svg width="10.5" height="6" viewBox="0 0 11 6" style="margin-left:3.2px;vertical-align:-0.5px"><g fill="none" stroke="#dfe7f0" stroke-width="0.85"><path d="M1.6,5.2 C0.2,3.6 0.8,0.8 3,0.8 C5.2,0.8 5.8,3.6 4.4,5.2"/><path d="M6.6,5.2 C5.2,3.6 5.8,0.8 8,0.8 C10.2,0.8 10.8,3.6 9.4,5.2"/><path d="M0.3,5.5 H10.7"/></g></svg></div>
</div>
<div class="reg" style="left:648px;top:339.00px;width:135px;height:39px">
<svg class="abs" style="left:0;top:0" width="135" height="39"><rect x="0" y="24.0" width="135" height="1" fill="#8fabcf"/><path d="M0.5 21.8V27.2M1.5 22.3V26.7M2.5 21.9V27.1M3.5 21.3V27.7M4.5 22.2V26.8M5.5 21.7V27.3M6.5 22.3V26.7M7.5 22.3V26.7M8.5 21.5V27.5M9.5 21.5V27.5M10.5 22.3V26.7M11.5 22.4V26.6M12.5 22.4V26.6M13.5 21.7V27.3M14.5 21.8V27.2M15.5 22.2V26.8M16.5 22.3V26.7M17.5 21.7V27.3M18.5 21.5V27.5M19.5 21.4V27.6M20.5 21.7V27.3M21.5 22.3V26.7M22.5 22.4V26.6M23.5 21.5V27.5M24.5 22.0V27.0M25.5 21.5V27.5M26.5 22.5V26.5M27.5 21.4V27.6M28.5 22.1V26.9M29.5 21.4V27.6M30.5 21.3V27.7M31.5 21.8V27.2M32.5 22.5V26.5M33.5 21.3V27.7M34.5 21.9V27.1M35.5 21.3V27.7M36.5 22.2V26.8M37.5 22.3V26.7M38.5 21.4V27.6M39.5 22.0V27.0M40.5 22.3V26.7M41.5 22.0V27.0M42.5 21.7V27.3M43.5 22.5V26.5M44.5 21.8V27.2M45.5 21.9V27.1M46.5 21.8V27.2M47.5 22.4V26.6M48.5 21.5V27.5M49.5 21.4V27.6M50.5 21.3V27.7M51.5 22.1V26.9M52.5 21.5V27.5M53.5 22.0V27.0M54.5 21.5V27.5M55.5 22.5V26.5M56.5 21.3V27.7M57.5 21.2V27.8M58.5 21.8V27.2M59.5 21.8V27.2M60.5 21.8V27.2M61.5 21.8V27.2M62.5 22.5V26.5M63.5 21.2V27.8M64.5 22.2V26.8M65.5 22.3V26.7M66.5 22.4V26.6M67.5 22.2V26.8M68.5 21.4V27.6M69.5 22.5V26.5M70.5 22.4V26.6M71.5 21.6V27.4M72.5 22.3V26.7M73.5 22.5V26.5M74.5 21.7V27.3M75.5 21.7V27.3M76.5 21.8V27.2M77.5 21.6V27.4M78.5 22.4V26.6M79.5 21.3V27.7M80.5 21.5V27.5M81.5 22.5V26.5M82.5 22.4V26.6M83.5 21.8V27.2M84.5 21.8V27.2M85.5 22.1V26.9M86.5 22.4V26.6M87.5 22.0V27.0M88.5 22.3V26.7M89.5 21.7V27.3M90.5 21.3V27.7M91.5 22.3V26.7M92.5 21.7V27.3M93.5 21.5V27.5M94.5 22.3V26.7M95.5 21.4V27.6M96.5 21.2V27.8M97.5 22.0V27.0M98.5 22.0V27.0M99.5 21.4V27.6M100.5 21.8V27.2M101.5 22.0V27.0M102.5 21.2V27.8M103.5 21.5V27.5M104.5 22.1V26.9M105.5 22.2V26.8M106.5 22.1V26.9M107.5 21.9V27.1M108.5 21.2V27.8M109.5 21.4V27.6M110.5 21.3V27.7M111.5 21.4V27.6M112.5 21.4V27.6M113.5 22.5V26.5M114.5 21.8V27.2M115.5 21.2V27.8M116.5 21.2V27.8M117.5 22.2V26.8M118.5 21.9V27.1M119.5 21.7V27.3M120.5 22.0V27.0M121.5 21.8V27.2M122.5 22.4V26.6M123.5 21.9V27.1M124.5 21.8V27.2M125.5 22.5V26.5M126.5 22.3V26.7M127.5 21.2V27.8M128.5 21.5V27.5M129.5 21.2V27.8M130.5 21.7V27.3M131.5 21.4V27.6M132.5 21.3V27.7M133.5 21.3V27.7M134.5 22.5V26.5" stroke="#a5bcd7" stroke-width="1"/></svg>
<div class="rt">140 Okra Voda Fm 04.1<svg width="10.5" height="6" viewBox="0 0 11 6" style="margin-left:3.2px;vertical-align:-0.5px"><g fill="none" stroke="#dfe7f0" stroke-width="0.85"><path d="M1.6,5.2 C0.2,3.6 0.8,0.8 3,0.8 C5.2,0.8 5.8,3.6 4.4,5.2"/><path d="M6.6,5.2 C5.2,3.6 5.8,0.8 8,0.8 C10.2,0.8 10.8,3.6 9.4,5.2"/><path d="M0.3,5.5 H10.7"/></g></svg></div>
</div>
<div class="reg" style="left:784px;top:339.00px;width:135px;height:39px">
<svg class="abs" style="left:0;top:0" width="135" height="39"><rect x="0" y="24.0" width="135" height="1" fill="#8fabcf"/><path d="M0.5 21.6V27.4M1.5 22.2V26.8M2.5 21.6V27.4M3.5 22.2V26.8M4.5 21.8V27.2M5.5 21.2V27.8M6.5 21.7V27.3M7.5 22.2V26.8M8.5 21.8V27.2M9.5 21.9V27.1M10.5 21.2V27.8M11.5 22.1V26.9M12.5 22.1V26.9M13.5 21.6V27.4M14.5 22.4V26.6M15.5 21.7V27.3M16.5 21.2V27.8M17.5 21.8V27.2M18.5 22.2V26.8M19.5 21.9V27.1M20.5 21.8V27.2M21.5 22.3V26.7M22.5 22.4V26.6M23.5 22.4V26.6M24.5 22.1V26.9M25.5 22.0V27.0M26.5 22.1V26.9M27.5 22.2V26.8M28.5 22.4V26.6M29.5 21.8V27.2M30.5 21.4V27.6M31.5 21.7V27.3M32.5 21.7V27.3M33.5 21.6V27.4M34.5 22.3V26.7M35.5 21.5V27.5M36.5 21.9V27.1M37.5 21.8V27.2M38.5 21.7V27.3M39.5 21.9V27.1M40.5 22.1V26.9M41.5 22.2V26.8M42.5 22.2V26.8M43.5 21.8V27.2M44.5 22.0V27.0M45.5 21.7V27.3M46.5 22.5V26.5M47.5 22.0V27.0M48.5 21.3V27.7M49.5 22.2V26.8M50.5 21.8V27.2M51.5 21.9V27.1M52.5 22.1V26.9M53.5 21.2V27.8M54.5 22.1V26.9M55.5 21.5V27.5M56.5 22.3V26.7M57.5 22.4V26.6M58.5 21.3V27.7M59.5 21.9V27.1M60.5 22.5V26.5M61.5 22.0V27.0M62.5 21.9V27.1M63.5 21.5V27.5M64.5 22.4V26.6M65.5 22.2V26.8M66.5 21.2V27.8M67.5 21.5V27.5M68.5 22.3V26.7M69.5 22.1V26.9M70.5 22.0V27.0M71.5 21.6V27.4M72.5 21.7V27.3M73.5 21.4V27.6M74.5 21.4V27.6M75.5 21.8V27.2M76.5 21.5V27.5M77.5 21.5V27.5M78.5 21.5V27.5M79.5 21.9V27.1M80.5 21.4V27.6M81.5 21.5V27.5M82.5 21.3V27.7M83.5 22.4V26.6M84.5 21.3V27.7M85.5 22.5V26.5M86.5 21.5V27.5M87.5 21.7V27.3M88.5 21.8V27.2M89.5 21.2V27.8M90.5 21.7V27.3M91.5 22.0V27.0M92.5 21.4V27.6M93.5 21.3V27.7M94.5 21.7V27.3M95.5 22.0V27.0M96.5 21.9V27.1M97.5 21.9V27.1M98.5 21.5V27.5M99.5 22.1V26.9M100.5 22.0V27.0M101.5 21.8V27.2M102.5 22.0V27.0M103.5 22.1V26.9M104.5 21.4V27.6M105.5 21.4V27.6M106.5 21.8V27.2M107.5 21.9V27.1M108.5 22.3V26.7M109.5 22.1V26.9M110.5 22.3V26.7M111.5 21.7V27.3M112.5 21.7V27.3M113.5 22.4V26.6M114.5 21.3V27.7M115.5 22.1V26.9M116.5 21.4V27.6M117.5 21.4V27.6M118.5 21.2V27.8M119.5 22.3V26.7M120.5 21.9V27.1M121.5 21.3V27.7M122.5 22.5V26.5M123.5 22.5V26.5M124.5 21.7V27.3M125.5 21.8V27.2M126.5 21.3V27.7M127.5 21.5V27.5M128.5 21.8V27.2M129.5 21.1V27.9M130.5 21.8V27.2M131.5 21.8V27.2M132.5 21.6V27.4M133.5 22.0V27.0M134.5 22.0V27.0" stroke="#a5bcd7" stroke-width="1"/></svg>
<div class="rt">140 Okra Voda Fm 05.1<svg width="10.5" height="6" viewBox="0 0 11 6" style="margin-left:3.2px;vertical-align:-0.5px"><g fill="none" stroke="#dfe7f0" stroke-width="0.85"><path d="M1.6,5.2 C0.2,3.6 0.8,0.8 3,0.8 C5.2,0.8 5.8,3.6 4.4,5.2"/><path d="M6.6,5.2 C5.2,3.6 5.8,0.8 8,0.8 C10.2,0.8 10.8,3.6 9.4,5.2"/><path d="M0.3,5.5 H10.7"/></g></svg></div>
</div>
<div class="reg" style="left:920px;top:339.00px;width:135px;height:39px">
<svg class="abs" style="left:0;top:0" width="135" height="39"><rect x="0" y="24.0" width="135" height="1" fill="#8fabcf"/><path d="M0.5 21.7V27.3M1.5 22.0V27.0M2.5 21.2V27.8M3.5 21.6V27.4M4.5 21.8V27.2M5.5 22.4V26.6M6.5 22.0V27.0M7.5 22.0V27.0M8.5 21.8V27.2M9.5 21.7V27.3M10.5 21.3V27.7M11.5 21.2V27.8M12.5 21.9V27.1M13.5 21.9V27.1M14.5 21.7V27.3M15.5 21.1V27.9M16.5 22.1V26.9M17.5 21.8V27.2M18.5 21.4V27.6M19.5 22.3V26.7M20.5 22.1V26.9M21.5 21.2V27.8M22.5 21.4V27.6M23.5 21.8V27.2M24.5 22.4V26.6M25.5 21.3V27.7M26.5 21.6V27.4M27.5 21.4V27.6M28.5 21.2V27.8M29.5 21.3V27.7M30.5 22.0V27.0M31.5 22.3V26.7M32.5 22.1V26.9M33.5 21.8V27.2M34.5 21.8V27.2M35.5 22.3V26.7M36.5 22.3V26.7M37.5 21.7V27.3M38.5 21.7V27.3M39.5 22.0V27.0M40.5 21.1V27.9M41.5 21.6V27.4M42.5 22.5V26.5M43.5 22.0V27.0M44.5 21.4V27.6M45.5 22.1V26.9M46.5 21.6V27.4M47.5 22.5V26.5M48.5 22.1V26.9M49.5 21.4V27.6M50.5 21.7V27.3M51.5 21.6V27.4M52.5 22.3V26.7M53.5 21.8V27.2M54.5 21.8V27.2M55.5 22.2V26.8M56.5 21.6V27.4M57.5 21.8V27.2M58.5 21.1V27.9M59.5 21.7V27.3M60.5 22.0V27.0M61.5 22.4V26.6M62.5 22.3V26.7M63.5 21.5V27.5M64.5 22.4V26.6M65.5 22.4V26.6M66.5 22.3V26.7M67.5 21.8V27.2M68.5 21.4V27.6M69.5 21.7V27.3M70.5 21.4V27.6M71.5 22.5V26.5M72.5 22.5V26.5M73.5 21.5V27.5M74.5 22.1V26.9M75.5 21.5V27.5M76.5 22.0V27.0M77.5 22.3V26.7M78.5 22.2V26.8M79.5 22.4V26.6M80.5 21.3V27.7M81.5 21.7V27.3M82.5 22.1V26.9M83.5 21.9V27.1M84.5 22.0V27.0M85.5 22.5V26.5M86.5 21.3V27.7M87.5 21.7V27.3M88.5 21.2V27.8M89.5 21.9V27.1M90.5 21.7V27.3M91.5 22.2V26.8M92.5 22.5V26.5M93.5 21.2V27.8M94.5 21.3V27.7M95.5 22.1V26.9M96.5 21.3V27.7M97.5 21.4V27.6M98.5 22.1V26.9M99.5 21.7V27.3M100.5 21.2V27.8M101.5 21.8V27.2M102.5 21.2V27.8M103.5 22.2V26.8M104.5 22.0V27.0M105.5 21.5V27.5M106.5 22.2V26.8M107.5 22.1V26.9M108.5 21.3V27.7M109.5 21.9V27.1M110.5 21.4V27.6M111.5 22.2V26.8M112.5 22.3V26.7M113.5 22.0V27.0M114.5 22.3V26.7M115.5 21.2V27.8M116.5 22.1V26.9M117.5 21.8V27.2M118.5 22.4V26.6M119.5 21.8V27.2M120.5 22.0V27.0M121.5 22.0V27.0M122.5 22.4V26.6M123.5 22.4V26.6M124.5 21.4V27.6M125.5 22.0V27.0M126.5 22.2V26.8M127.5 22.3V26.7M128.5 22.1V26.9M129.5 22.2V26.8M130.5 22.5V26.5M131.5 21.6V27.4M132.5 22.1V26.9M133.5 22.3V26.7M134.5 21.6V27.4" stroke="#a5bcd7" stroke-width="1"/></svg>
<div class="rt">140 Okra Voda Fm 06.3<svg width="10.5" height="6" viewBox="0 0 11 6" style="margin-left:3.2px;vertical-align:-0.5px"><g fill="none" stroke="#dfe7f0" stroke-width="0.85"><path d="M1.6,5.2 C0.2,3.6 0.8,0.8 3,0.8 C5.2,0.8 5.8,3.6 4.4,5.2"/><path d="M6.6,5.2 C5.2,3.6 5.8,0.8 8,0.8 C10.2,0.8 10.8,3.6 9.4,5.2"/><path d="M0.3,5.5 H10.7"/></g></svg></div>
</div>
<div class="reg" style="left:1056px;top:339.00px;width:118.5px;height:39px">
<svg class="abs" style="left:0;top:0" width="118" height="39"><rect x="0" y="24.0" width="118" height="1" fill="#8fabcf"/><path d="M0.5 22.3V26.7M1.5 22.0V27.0M2.5 21.1V27.9M3.5 22.2V26.8M4.5 21.7V27.3M5.5 21.1V27.9M6.5 21.2V27.8M7.5 22.2V26.8M8.5 21.9V27.1M9.5 21.3V27.7M10.5 21.8V27.2M11.5 21.0V28.0M12.5 22.1V26.9M13.5 21.0V28.0M14.5 21.6V27.4M15.5 22.1V26.9M16.5 21.7V27.3M17.5 22.2V26.8M18.5 21.3V27.7M19.5 22.0V27.0M20.5 21.1V27.9M21.5 21.5V27.5M22.5 21.8V27.2M23.5 22.0V27.0M24.5 21.5V27.5M25.5 22.1V26.9M26.5 21.1V27.9M27.5 22.2V26.8M28.5 21.6V27.4M29.5 21.6V27.4M30.5 22.0V27.0M31.5 21.2V27.8M32.5 21.8V27.2M33.5 21.4V27.6M34.5 21.5V27.5M35.5 21.9V27.1M36.5 21.8V27.2M37.5 22.3V26.7M38.5 22.1V26.9M39.5 21.1V27.9M40.5 21.9V27.1M41.5 21.4V27.6M42.5 22.2V26.8M43.5 21.6V27.4M44.5 21.9V27.1M45.5 21.6V27.4M46.5 22.0V27.0M47.5 22.3V26.7M48.5 21.9V27.1M49.5 22.1V26.9M50.5 22.2V26.8M51.5 21.3V27.7M52.5 22.0V27.0M53.5 21.8V27.2M54.5 21.0V28.0M55.5 21.2V27.8M56.5 21.1V27.9M57.5 21.1V27.9M58.5 22.2V26.8M59.5 22.0V27.0M60.5 22.4V26.6M61.5 21.4V27.6M62.5 21.4V27.6M63.5 21.9V27.1M64.5 21.8V27.2M65.5 21.4V27.6M66.5 21.4V27.6M67.5 22.0V27.0M68.5 21.1V27.9M69.5 21.9V27.1M70.5 21.5V27.5M71.5 22.2V26.8M72.5 22.4V26.6M73.5 21.3V27.7M74.5 21.7V27.3M75.5 21.8V27.2M76.5 22.7V26.3M77.5 22.8V26.2M78.5 22.7V26.3M79.5 22.8V26.2M80.5 22.7V26.3M81.5 22.7V26.3M82.5 23.1V25.9M83.5 22.9V26.1M84.5 22.7V26.3M85.5 23.2V25.8M86.5 22.8V26.2M87.5 23.1V25.9M88.5 23.0V26.0M89.5 23.4V25.6M90.5 23.4V25.6M91.5 23.3V25.7M92.5 23.6V25.4M93.5 23.8V25.2M94.5 23.6V25.4M95.5 23.7V25.3M96.5 23.9V25.1M97.5 24.0V25.0M98.5 23.9V25.1M99.5 24.0V25.0M100.5 24.0V25.0M101.5 24.0V25.0M102.5 24.0V25.0M103.5 24.0V25.0M104.5 24.0V25.0M105.5 23.9V25.1M106.5 24.0V25.0M107.5 24.0V25.0M108.5 24.0V25.0M109.5 24.0V25.0M110.5 24.0V25.0M111.5 23.9V25.1M112.5 24.0V25.0M113.5 24.0V25.0M114.5 23.9V25.1M115.5 24.0V25.0M116.5 23.9V25.1M117.5 24.0V25.0" stroke="#a5bcd7" stroke-width="1"/></svg>
<div class="rt">140 Okra Voda Fm 07.3<svg width="10.5" height="6" viewBox="0 0 11 6" style="margin-left:3.2px;vertical-align:-0.5px"><g fill="none" stroke="#dfe7f0" stroke-width="0.85"><path d="M1.6,5.2 C0.2,3.6 0.8,0.8 3,0.8 C5.2,0.8 5.8,3.6 4.4,5.2"/><path d="M6.6,5.2 C5.2,3.6 5.8,0.8 8,0.8 C10.2,0.8 10.8,3.6 9.4,5.2"/><path d="M0.3,5.5 H10.7"/></g></svg></div>
</div>
<div class="reg" style="left:512px;top:379.67px;width:135px;height:39px">
<svg class="abs" style="left:0;top:0" width="135" height="39"><rect x="0" y="24.0" width="135" height="1" fill="#8fabcf"/><path d="M0.5 23.2V25.8M1.5 23.1V25.9M2.5 23.3V25.7M3.5 23.2V25.8M4.5 23.4V25.6M5.5 22.5V26.5M6.5 22.6V26.4M7.5 22.2V26.8M8.5 21.3V27.7M9.5 22.8V26.2M10.5 21.9V27.1M11.5 23.0V26.0M12.5 22.2V26.8M13.5 22.1V26.9M14.5 22.9V26.1M15.5 22.7V26.3M16.5 22.2V26.8M17.5 22.7V26.3M18.5 22.8V26.2M19.5 23.2V25.8M20.5 23.4V25.6M21.5 23.2V25.8M22.5 23.1V25.9M23.5 23.4V25.6M24.5 23.3V25.7M25.5 23.5V25.5M26.5 23.0V26.0M27.5 23.0V26.0M28.5 23.4V25.6M29.5 23.5V25.5M30.5 23.2V25.8M31.5 23.3V25.7M32.5 22.9V26.1M33.5 23.4V25.6M34.5 23.5V25.5M35.5 23.0V26.0M36.5 23.6V25.4M37.5 23.3V25.7M38.5 23.5V25.5M39.5 23.1V25.9M40.5 23.0V26.0M41.5 22.3V26.7M42.5 22.8V26.2M43.5 21.8V27.2M44.5 21.5V27.5M45.5 21.5V27.5M46.5 21.0V28.0M47.5 21.1V27.9M48.5 22.6V26.4M49.5 22.4V26.6M50.5 22.4V26.6M51.5 22.7V26.3M52.5 23.0V26.0M53.5 22.8V26.2M54.5 23.0V26.0M55.5 22.4V26.6M56.5 22.8V26.2M57.5 23.2V25.8M58.5 23.0V26.0M59.5 22.9V26.1M60.5 23.1V25.9M61.5 23.3V25.7M62.5 23.5V25.5M63.5 23.6V25.4M64.5 22.6V26.4M65.5 22.9V26.1M66.5 23.5V25.5M67.5 23.0V26.0M68.5 22.8V26.2M69.5 23.2V25.8M70.5 23.6V25.4M71.5 23.3V25.7M72.5 23.3V25.7M73.5 23.3V25.7M74.5 22.6V26.4M75.5 23.0V26.0M76.5 21.2V27.8M77.5 21.3V27.7M78.5 21.0V28.0M79.5 20.6V28.4M80.5 21.4V27.6M81.5 22.3V26.7M82.5 22.4V26.6M83.5 22.8V26.2M84.5 23.0V26.0M85.5 22.0V27.0M86.5 22.0V27.0M87.5 22.8V26.2M88.5 23.1V25.9M89.5 22.6V26.4M90.5 22.4V26.6M91.5 22.4V26.6M92.5 23.3V25.7M93.5 22.6V26.4M94.5 22.6V26.4M95.5 22.8V26.2M96.5 23.2V25.8M97.5 23.4V25.6M98.5 22.8V26.2M99.5 23.3V25.7M100.5 23.3V25.7M101.5 23.1V25.9M102.5 23.3V25.7M103.5 22.4V26.6M104.5 22.8V26.2M105.5 22.8V26.2M106.5 21.4V27.6M107.5 20.8V28.2M108.5 19.9V29.1M109.5 20.5V28.5M110.5 20.3V28.7M111.5 20.5V28.5M112.5 21.6V27.4M113.5 21.8V27.2M114.5 22.5V26.5M115.5 22.4V26.6M116.5 22.1V26.9M117.5 23.0V26.0M118.5 22.2V26.8M119.5 23.0V26.0M120.5 22.7V26.3M121.5 22.1V26.9M122.5 23.3V25.7M123.5 23.4V25.6M124.5 22.9V26.1M125.5 23.3V25.7M126.5 22.7V26.3M127.5 23.5V25.5M128.5 22.7V26.3M129.5 22.7V26.3M130.5 22.8V26.2M131.5 23.2V25.8M132.5 23.4V25.6M133.5 23.0V26.0M134.5 23.2V25.8" stroke="#a5bcd7" stroke-width="1"/></svg>
<div class="rt">140 Scratchy Atmosphere Fm 03.1<svg width="10.5" height="6" viewBox="0 0 11 6" style="margin-left:3.2px;vertical-align:-0.5px"><g fill="none" stroke="#dfe7f0" stroke-width="0.85"><path d="M1.6,5.2 C0.2,3.6 0.8,0.8 3,0.8 C5.2,0.8 5.8,3.6 4.4,5.2"/><path d="M6.6,5.2 C5.2,3.6 5.8,0.8 8,0.8 C10.2,0.8 10.8,3.6 9.4,5.2"/><path d="M0.3,5.5 H10.7"/></g></svg></div>
</div>
<div class="reg" style="left:648px;top:379.67px;width:135px;height:39px">
<svg class="abs" style="left:0;top:0" width="135" height="39"><rect x="0" y="24.0" width="135" height="1" fill="#8fabcf"/><path d="M0.5 22.1V26.9M1.5 22.2V26.8M2.5 22.0V27.0M3.5 21.6V27.4M4.5 21.3V27.7M5.5 21.2V27.8M6.5 22.5V26.5M7.5 22.3V26.7M8.5 22.0V27.0M9.5 21.8V27.2M10.5 22.2V26.8M11.5 22.5V26.5M12.5 22.7V26.3M13.5 22.2V26.8M14.5 22.0V27.0M15.5 21.1V27.9M16.5 21.2V27.8M17.5 21.3V27.7M18.5 21.1V27.9M19.5 21.1V27.9M20.5 21.7V27.3M21.5 21.4V27.6M22.5 22.7V26.3M23.5 21.6V27.4M24.5 21.7V27.3M25.5 22.3V26.7M26.5 21.8V27.2M27.5 21.1V27.9M28.5 22.0V27.0M29.5 21.7V27.3M30.5 22.3V26.7M31.5 22.2V26.8M32.5 21.2V27.8M33.5 22.8V26.2M34.5 22.5V26.5M35.5 21.6V27.4M36.5 22.0V27.0M37.5 22.7V26.3M38.5 21.6V27.4M39.5 22.2V26.8M40.5 21.8V27.2M41.5 22.1V26.9M42.5 21.9V27.1M43.5 21.8V27.2M44.5 22.1V26.9M45.5 22.6V26.4M46.5 22.5V26.5M47.5 21.2V27.8M48.5 21.8V27.2M49.5 22.6V26.4M50.5 21.3V27.7M51.5 22.4V26.6M52.5 22.6V26.4M53.5 21.9V27.1M54.5 22.4V26.6M55.5 21.9V27.1M56.5 21.8V27.2M57.5 22.4V26.6M58.5 21.8V27.2M59.5 22.6V26.4M60.5 21.9V27.1M61.5 21.8V27.2M62.5 22.7V26.3M63.5 22.1V26.9M64.5 22.7V26.3M65.5 22.0V27.0M66.5 21.3V27.7M67.5 21.8V27.2M68.5 21.5V27.5M69.5 21.5V27.5M70.5 22.6V26.4M71.5 21.0V28.0M72.5 21.5V27.5M73.5 22.6V26.4M74.5 21.3V27.7M75.5 22.1V26.9M76.5 22.5V26.5M77.5 21.1V27.9M78.5 21.8V27.2M79.5 21.4V27.6M80.5 22.6V26.4M81.5 21.4V27.6M82.5 22.7V26.3M83.5 22.4V26.6M84.5 22.2V26.8M85.5 22.8V26.2M86.5 21.8V27.2M87.5 22.4V26.6M88.5 22.3V26.7M89.5 21.6V27.4M90.5 22.1V26.9M91.5 21.2V27.8M92.5 21.7V27.3M93.5 21.3V27.7M94.5 21.8V27.2M95.5 21.2V27.8M96.5 21.3V27.7M97.5 22.5V26.5M98.5 21.5V27.5M99.5 22.2V26.8M100.5 21.5V27.5M101.5 21.6V27.4M102.5 21.3V27.7M103.5 22.6V26.4M104.5 22.2V26.8M105.5 21.5V27.5M106.5 21.1V27.9M107.5 21.5V27.5M108.5 22.7V26.3M109.5 21.7V27.3M110.5 22.6V26.4M111.5 21.8V27.2M112.5 21.4V27.6M113.5 22.6V26.4M114.5 21.2V27.8M115.5 21.6V27.4M116.5 22.4V26.6M117.5 22.5V26.5M118.5 22.0V27.0M119.5 21.3V27.7M120.5 21.8V27.2M121.5 22.6V26.4M122.5 22.8V26.2M123.5 22.6V26.4M124.5 21.4V27.6M125.5 22.5V26.5M126.5 21.8V27.2M127.5 22.3V26.7M128.5 21.6V27.4M129.5 22.1V26.9M130.5 22.6V26.4M131.5 21.3V27.7M132.5 21.9V27.1M133.5 21.6V27.4M134.5 21.4V27.6" stroke="#a5bcd7" stroke-width="1"/></svg>
<div class="rt">140 Scratchy Atmosphere Fm 04.1<svg width="10.5" height="6" viewBox="0 0 11 6" style="margin-left:3.2px;vertical-align:-0.5px"><g fill="none" stroke="#dfe7f0" stroke-width="0.85"><path d="M1.6,5.2 C0.2,3.6 0.8,0.8 3,0.8 C5.2,0.8 5.8,3.6 4.4,5.2"/><path d="M6.6,5.2 C5.2,3.6 5.8,0.8 8,0.8 C10.2,0.8 10.8,3.6 9.4,5.2"/><path d="M0.3,5.5 H10.7"/></g></svg></div>
</div>
<div class="reg" style="left:784px;top:379.67px;width:135px;height:39px">
<svg class="abs" style="left:0;top:0" width="135" height="39"><rect x="0" y="24.0" width="135" height="1" fill="#8fabcf"/><path d="M0.5 21.1V27.9M1.5 22.8V26.2M2.5 22.2V26.8M3.5 22.5V26.5M4.5 21.9V27.1M5.5 21.3V27.7M6.5 21.4V27.6M7.5 22.8V26.2M8.5 22.5V26.5M9.5 21.4V27.6M10.5 21.6V27.4M11.5 22.1V26.9M12.5 22.0V27.0M13.5 22.5V26.5M14.5 21.3V27.7M15.5 22.1V26.9M16.5 21.3V27.7M17.5 21.7V27.3M18.5 22.7V26.3M19.5 22.2V26.8M20.5 22.4V26.6M21.5 21.2V27.8M22.5 21.8V27.2M23.5 22.7V26.3M24.5 22.5V26.5M25.5 22.2V26.8M26.5 22.0V27.0M27.5 21.8V27.2M28.5 22.1V26.9M29.5 22.2V26.8M30.5 22.8V26.2M31.5 21.8V27.2M32.5 22.2V26.8M33.5 22.8V26.2M34.5 22.0V27.0M35.5 21.1V27.9M36.5 22.7V26.3M37.5 22.6V26.4M38.5 21.6V27.4M39.5 22.3V26.7M40.5 22.3V26.7M41.5 21.9V27.1M42.5 22.4V26.6M43.5 21.8V27.2M44.5 21.9V27.1M45.5 21.1V27.9M46.5 21.0V28.0M47.5 22.8V26.2M48.5 21.8V27.2M49.5 21.4V27.6M50.5 21.3V27.7M51.5 21.4V27.6M52.5 21.7V27.3M53.5 21.7V27.3M54.5 22.2V26.8M55.5 22.3V26.7M56.5 21.4V27.6M57.5 21.3V27.7M58.5 21.1V27.9M59.5 21.6V27.4M60.5 22.3V26.7M61.5 21.5V27.5M62.5 21.5V27.5M63.5 21.9V27.1M64.5 21.7V27.3M65.5 22.2V26.8M66.5 21.8V27.2M67.5 22.1V26.9M68.5 22.7V26.3M69.5 22.2V26.8M70.5 22.2V26.8M71.5 21.0V28.0M72.5 22.0V27.0M73.5 22.2V26.8M74.5 22.4V26.6M75.5 22.4V26.6M76.5 22.2V26.8M77.5 22.6V26.4M78.5 22.8V26.2M79.5 21.3V27.7M80.5 22.0V27.0M81.5 22.0V27.0M82.5 21.8V27.2M83.5 22.3V26.7M84.5 22.5V26.5M85.5 22.7V26.3M86.5 22.3V26.7M87.5 22.3V26.7M88.5 21.5V27.5M89.5 21.8V27.2M90.5 21.1V27.9M91.5 22.2V26.8M92.5 21.2V27.8M93.5 21.8V27.2M94.5 22.7V26.3M95.5 22.5V26.5M96.5 21.8V27.2M97.5 21.1V27.9M98.5 22.2V26.8M99.5 21.4V27.6M100.5 22.1V26.9M101.5 21.3V27.7M102.5 22.7V26.3M103.5 22.0V27.0M104.5 21.2V27.8M105.5 22.3V26.7M106.5 22.4V26.6M107.5 22.8V26.2M108.5 22.5V26.5M109.5 22.3V26.7M110.5 21.6V27.4M111.5 22.4V26.6M112.5 22.1V26.9M113.5 22.5V26.5M114.5 21.7V27.3M115.5 21.3V27.7M116.5 21.7V27.3M117.5 22.5V26.5M118.5 21.5V27.5M119.5 21.1V27.9M120.5 21.7V27.3M121.5 22.7V26.3M122.5 21.4V27.6M123.5 21.3V27.7M124.5 22.2V26.8M125.5 22.6V26.4M126.5 22.5V26.5M127.5 21.9V27.1M128.5 21.3V27.7M129.5 21.7V27.3M130.5 21.2V27.8M131.5 22.4V26.6M132.5 22.2V26.8M133.5 21.5V27.5M134.5 21.7V27.3" stroke="#a5bcd7" stroke-width="1"/></svg>
<div class="rt">140 Scratchy Atmosphere Fm 05.1<svg width="10.5" height="6" viewBox="0 0 11 6" style="margin-left:3.2px;vertical-align:-0.5px"><g fill="none" stroke="#dfe7f0" stroke-width="0.85"><path d="M1.6,5.2 C0.2,3.6 0.8,0.8 3,0.8 C5.2,0.8 5.8,3.6 4.4,5.2"/><path d="M6.6,5.2 C5.2,3.6 5.8,0.8 8,0.8 C10.2,0.8 10.8,3.6 9.4,5.2"/><path d="M0.3,5.5 H10.7"/></g></svg></div>
</div>
<div class="reg" style="left:920px;top:379.67px;width:135px;height:39px">
<svg class="abs" style="left:0;top:0" width="135" height="39"><rect x="0" y="24.0" width="135" height="1" fill="#8fabcf"/><path d="M0.5 22.1V26.9M1.5 21.6V27.4M2.5 22.2V26.8M3.5 22.7V26.3M4.5 22.1V26.9M5.5 22.7V26.3M6.5 21.7V27.3M7.5 22.2V26.8M8.5 21.9V27.1M9.5 21.7V27.3M10.5 22.4V26.6M11.5 22.0V27.0M12.5 22.8V26.2M13.5 21.2V27.8M14.5 21.8V27.2M15.5 21.1V27.9M16.5 22.7V26.3M17.5 21.7V27.3M18.5 21.5V27.5M19.5 22.2V26.8M20.5 22.7V26.3M21.5 22.5V26.5M22.5 22.6V26.4M23.5 21.4V27.6M24.5 22.7V26.3M25.5 21.4V27.6M26.5 22.1V26.9M27.5 21.9V27.1M28.5 21.8V27.2M29.5 21.8V27.2M30.5 21.6V27.4M31.5 21.7V27.3M32.5 22.2V26.8M33.5 21.5V27.5M34.5 22.4V26.6M35.5 21.5V27.5M36.5 21.5V27.5M37.5 21.4V27.6M38.5 22.3V26.7M39.5 21.4V27.6M40.5 21.1V27.9M41.5 22.0V27.0M42.5 22.3V26.7M43.5 21.9V27.1M44.5 21.1V27.9M45.5 22.6V26.4M46.5 22.8V26.2M47.5 22.0V27.0M48.5 21.6V27.4M49.5 21.4V27.6M50.5 22.2V26.8M51.5 21.0V28.0M52.5 22.4V26.6M53.5 21.5V27.5M54.5 22.7V26.3M55.5 22.8V26.2M56.5 22.6V26.4M57.5 22.7V26.3M58.5 21.9V27.1M59.5 21.8V27.2M60.5 22.5V26.5M61.5 21.1V27.9M62.5 22.2V26.8M63.5 22.6V26.4M64.5 22.5V26.5M65.5 21.5V27.5M66.5 21.2V27.8M67.5 22.5V26.5M68.5 22.8V26.2M69.5 21.4V27.6M70.5 22.4V26.6M71.5 21.1V27.9M72.5 21.9V27.1M73.5 21.7V27.3M74.5 22.2V26.8M75.5 21.4V27.6M76.5 22.0V27.0M77.5 22.2V26.8M78.5 21.2V27.8M79.5 22.6V26.4M80.5 21.5V27.5M81.5 22.7V26.3M82.5 21.7V27.3M83.5 22.1V26.9M84.5 21.3V27.7M85.5 22.7V26.3M86.5 21.8V27.2M87.5 22.1V26.9M88.5 21.2V27.8M89.5 21.1V27.9M90.5 21.7V27.3M91.5 22.4V26.6M92.5 22.4V26.6M93.5 22.3V26.7M94.5 22.0V27.0M95.5 22.4V26.6M96.5 22.5V26.5M97.5 21.5V27.5M98.5 21.7V27.3M99.5 22.3V26.7M100.5 21.0V28.0M101.5 22.4V26.6M102.5 21.8V27.2M103.5 22.5V26.5M104.5 21.3V27.7M105.5 21.3V27.7M106.5 22.3V26.7M107.5 21.5V27.5M108.5 21.3V27.7M109.5 22.3V26.7M110.5 22.2V26.8M111.5 21.9V27.1M112.5 21.2V27.8M113.5 22.5V26.5M114.5 21.6V27.4M115.5 21.7V27.3M116.5 22.0V27.0M117.5 21.8V27.2M118.5 21.2V27.8M119.5 22.4V26.6M120.5 21.2V27.8M121.5 22.2V26.8M122.5 21.4V27.6M123.5 21.3V27.7M124.5 22.5V26.5M125.5 21.3V27.7M126.5 21.0V28.0M127.5 22.3V26.7M128.5 22.8V26.2M129.5 22.6V26.4M130.5 21.1V27.9M131.5 22.8V26.2M132.5 21.2V27.8M133.5 22.5V26.5M134.5 21.5V27.5" stroke="#a5bcd7" stroke-width="1"/></svg>
<div class="rt">140 Scratchy Atmosphere Fm 06.3</div>
</div>
<div class="reg" style="left:1056px;top:379.67px;width:118.5px;height:39px">
<svg class="abs" style="left:0;top:0" width="118" height="39"><rect x="0" y="24.0" width="118" height="1" fill="#8fabcf"/><path d="M0.5 22.8V26.2M1.5 22.7V26.3M2.5 21.9V27.1M3.5 22.9V26.1M4.5 22.5V26.5M5.5 21.5V27.5M6.5 21.9V27.1M7.5 21.6V27.4M8.5 21.4V27.6M9.5 22.9V26.1M10.5 22.6V26.4M11.5 21.6V27.4M12.5 21.7V27.3M13.5 22.8V26.2M14.5 21.8V27.2M15.5 22.3V26.7M16.5 21.8V27.2M17.5 22.4V26.6M18.5 22.5V26.5M19.5 20.3V28.7M20.5 21.7V27.3M21.5 20.3V28.7M22.5 22.0V27.0M23.5 21.0V28.0M24.5 21.8V27.2M25.5 21.0V28.0M26.5 21.6V27.4M27.5 20.1V28.9M28.5 21.5V27.5M29.5 19.8V29.2M30.5 20.4V28.6M31.5 21.4V27.6M32.5 20.6V28.4M33.5 20.1V28.9M34.5 18.7V30.3M35.5 20.4V28.6M36.5 20.9V28.1M37.5 18.8V30.2M38.5 19.3V29.7M39.5 19.9V29.1M40.5 21.2V27.8M41.5 21.6V27.4M42.5 21.4V27.6M43.5 22.0V27.0M44.5 22.1V26.9M45.5 21.1V27.9M46.5 21.4V27.6M47.5 21.1V27.9M48.5 21.6V27.4M49.5 22.5V26.5M50.5 21.1V27.9M51.5 21.2V27.8M52.5 21.5V27.5M53.5 21.5V27.5M54.5 21.3V27.7M55.5 20.7V28.3M56.5 21.0V28.0M57.5 21.3V27.7M58.5 22.0V27.0M59.5 22.2V26.8M60.5 22.0V27.0M61.5 21.0V28.0M62.5 22.1V26.9M63.5 22.1V26.9M64.5 22.1V26.9M65.5 22.6V26.4M66.5 21.1V27.9M67.5 22.9V26.1M68.5 21.8V27.2M69.5 21.3V27.7M70.5 22.5V26.5M71.5 21.9V27.1M72.5 22.3V26.7M73.5 22.5V26.5M74.5 22.6V26.4M75.5 22.7V26.3M76.5 21.5V27.5M77.5 21.6V27.4M78.5 21.4V27.6M79.5 22.9V26.1M80.5 21.8V27.2M81.5 22.4V26.6M82.5 21.9V27.1M83.5 22.1V26.9M84.5 22.4V26.6M85.5 21.4V27.6M86.5 23.0V26.0M87.5 21.8V27.2M88.5 21.6V27.4M89.5 22.2V26.8M90.5 22.1V26.9M91.5 21.4V27.6M92.5 22.6V26.4M93.5 22.0V27.0M94.5 21.8V27.2M95.5 22.4V26.6M96.5 22.0V27.0M97.5 22.6V26.4M98.5 22.6V26.4M99.5 22.6V26.4M100.5 22.7V26.3M101.5 23.2V25.8M102.5 23.0V26.0M103.5 23.3V25.7M104.5 23.6V25.4M105.5 23.5V25.5M106.5 23.8V25.2M107.5 23.7V25.3M108.5 24.0V25.0M109.5 24.0V25.0M110.5 24.0V25.0M111.5 24.0V25.0M112.5 24.0V25.0M113.5 24.0V25.0M114.5 23.9V25.1M115.5 24.0V25.0M116.5 24.0V25.0M117.5 24.0V25.0" stroke="#a5bcd7" stroke-width="1"/></svg>
<div class="rt">140 Scratchy Atmosphere Fm 07.5</div>
</div>
<div class="reg" style="left:240px;top:420.33px;width:135px;height:39px">
<svg class="abs" style="left:0;top:0" width="135" height="39"><rect x="0" y="24.0" width="135" height="1" fill="#8fabcf"/><path d="M0.5 23.9V25.1M1.5 19.4V29.6M2.5 19.8V29.2M3.5 16.5V32.5M4.5 18.3V30.7M5.5 17.7V31.3M6.5 17.1V31.9M7.5 17.1V31.9M8.5 17.5V31.5M9.5 21.2V27.8M10.5 19.9V29.1M11.5 18.4V30.6M12.5 18.7V30.3M13.5 21.4V27.6M14.5 21.4V27.6M15.5 21.2V27.8M16.5 21.8V27.2M17.5 21.1V27.9M18.5 19.9V29.1M19.5 20.9V28.1M20.5 21.2V27.8M21.5 22.3V26.7M22.5 21.6V27.4M23.5 20.2V28.8M24.5 21.1V27.9M25.5 21.8V27.2M26.5 21.8V27.2M27.5 21.2V27.8M28.5 21.4V27.6M29.5 22.7V26.3M30.5 21.8V27.2M31.5 22.4V26.6M32.5 22.2V26.8M33.5 22.8V26.2M34.5 22.6V26.4M35.5 22.7V26.3M36.5 22.7V26.3M37.5 23.3V25.7M38.5 23.1V25.9M39.5 22.6V26.4M40.5 23.4V25.6M41.5 23.3V25.7M42.5 22.6V26.4M43.5 23.2V25.8M44.5 23.2V25.8M45.5 23.3V25.7M46.5 22.7V26.3M47.5 23.6V25.4M48.5 23.0V26.0M49.5 22.8V26.2M50.5 23.5V25.5M51.5 23.3V25.7M52.5 23.0V26.0M53.5 23.2V25.8M54.5 23.5V25.5M55.5 23.8V25.2M56.5 23.5V25.5M57.5 23.5V25.5M58.5 23.3V25.7M59.5 23.6V25.4M60.5 23.6V25.4M61.5 23.4V25.6M62.5 23.3V25.7M63.5 23.7V25.3M64.5 23.7V25.3M65.5 23.6V25.4M66.5 23.3V25.7M67.5 23.9V25.1M68.5 23.4V25.6M69.5 23.5V25.5M70.5 23.8V25.2M71.5 23.6V25.4M72.5 23.8V25.2M73.5 24.0V25.0M74.5 23.6V25.4M75.5 23.8V25.2M76.5 23.8V25.2M77.5 23.8V25.2M78.5 23.6V25.4M79.5 23.7V25.3M80.5 24.0V25.0M81.5 23.8V25.2M82.5 23.9V25.1M83.5 23.9V25.1M84.5 23.7V25.3M85.5 23.9V25.1M86.5 23.9V25.1M87.5 23.7V25.3M88.5 23.9V25.1M89.5 23.9V25.1M90.5 23.9V25.1M91.5 23.7V25.3M92.5 23.8V25.2M93.5 23.8V25.2M94.5 24.0V25.0M95.5 24.0V25.0M96.5 23.8V25.2M97.5 23.9V25.1M98.5 23.8V25.2M99.5 23.8V25.2M100.5 24.0V25.0M101.5 24.0V25.0M102.5 24.0V25.0M103.5 23.8V25.2M104.5 24.0V25.0M105.5 24.0V25.0M106.5 23.9V25.1M107.5 23.9V25.1M108.5 24.0V25.0M109.5 23.9V25.1M110.5 23.9V25.1M111.5 24.0V25.0M112.5 24.0V25.0M113.5 23.9V25.1M114.5 24.0V25.0M115.5 24.0V25.0M116.5 23.8V25.2M117.5 23.9V25.1M118.5 23.9V25.1M119.5 24.0V25.0M120.5 24.0V25.0M121.5 24.0V25.0M122.5 24.0V25.0M123.5 23.9V25.1M124.5 24.0V25.0M125.5 24.0V25.0M126.5 24.0V25.0M127.5 24.0V25.0M128.5 23.9V25.1M129.5 24.0V25.0M130.5 24.0V25.0M131.5 24.0V25.0M132.5 24.0V25.0M133.5 24.0V25.0M134.5 23.9V25.1" stroke="#a5bcd7" stroke-width="1"/></svg>
<div class="rt">140 Scary Bell Fm 01.1<svg width="10.5" height="6" viewBox="0 0 11 6" style="margin-left:3.2px;vertical-align:-0.5px"><g fill="none" stroke="#dfe7f0" stroke-width="0.85"><path d="M1.6,5.2 C0.2,3.6 0.8,0.8 3,0.8 C5.2,0.8 5.8,3.6 4.4,5.2"/><path d="M6.6,5.2 C5.2,3.6 5.8,0.8 8,0.8 C10.2,0.8 10.8,3.6 9.4,5.2"/><path d="M0.3,5.5 H10.7"/></g></svg></div>
</div>
<div class="reg" style="left:376px;top:420.33px;width:135px;height:39px">
<svg class="abs" style="left:0;top:0" width="135" height="39"><rect x="0" y="24.0" width="135" height="1" fill="#8fabcf"/><path d="M0.5 23.9V25.1M1.5 23.9V25.1M2.5 24.0V25.0M3.5 24.0V25.0M4.5 24.0V25.0M5.5 24.0V25.0M6.5 24.0V25.0M7.5 24.0V25.0M8.5 24.0V25.0M9.5 24.0V25.0M10.5 24.0V25.0M11.5 23.9V25.1M12.5 24.0V25.0M13.5 23.9V25.1M14.5 24.0V25.0M15.5 24.0V25.0M16.5 24.0V25.0M17.5 24.0V25.0M18.5 24.0V25.0M19.5 24.0V25.0M20.5 24.0V25.0M21.5 24.0V25.0M22.5 23.9V25.1M23.5 24.0V25.0M24.5 24.0V25.0M25.5 23.9V25.1M26.5 24.0V25.0M27.5 23.6V25.4M28.5 22.5V26.5M29.5 22.6V26.4M30.5 21.2V27.8M31.5 22.5V26.5M32.5 21.2V27.8M33.5 20.0V29.0M34.5 21.6V27.4M35.5 18.6V30.4M36.5 21.5V27.5M37.5 19.6V29.4M38.5 21.1V27.9M39.5 18.4V30.6M40.5 19.7V29.3M41.5 18.9V30.1M42.5 20.0V29.0M43.5 19.7V29.3M44.5 20.0V29.0M45.5 21.4V27.6M46.5 21.8V27.2M47.5 20.4V28.6M48.5 22.3V26.7M49.5 20.7V28.3M50.5 22.4V26.6M51.5 22.8V26.2M52.5 22.9V26.1M53.5 21.7V27.3M54.5 21.6V27.4M55.5 22.6V26.4M56.5 22.4V26.6M57.5 23.1V25.9M58.5 22.3V26.7M59.5 22.7V26.3M60.5 23.4V25.6M61.5 23.6V25.4M62.5 22.9V26.1M63.5 23.7V25.3M64.5 21.3V27.7M65.5 21.4V27.6M66.5 20.6V28.4M67.5 18.0V31.0M68.5 19.3V29.7M69.5 18.2V30.8M70.5 20.2V28.8M71.5 16.6V32.4M72.5 19.4V29.6M73.5 17.1V31.9M74.5 20.6V28.4M75.5 18.4V30.6M76.5 18.3V30.7M77.5 20.7V28.3M78.5 22.1V26.9M79.5 21.4V27.6M80.5 21.0V28.0M81.5 22.2V26.8M82.5 21.7V27.3M83.5 22.8V26.2M84.5 22.3V26.7M85.5 22.0V27.0M86.5 22.6V26.4M87.5 22.4V26.6M88.5 23.3V25.7M89.5 22.5V26.5M90.5 23.5V25.5M91.5 22.6V26.4M92.5 22.7V26.3M93.5 22.9V26.1M94.5 23.3V25.7M95.5 23.6V25.4M96.5 23.6V25.4M97.5 23.3V25.7M98.5 23.6V25.4M99.5 23.3V25.7M100.5 21.7V27.3M101.5 17.1V31.9M102.5 10.7V38.3M103.5 13.0V36.0M104.5 13.5V35.5M105.5 17.3V31.7M106.5 16.9V32.1M107.5 15.8V33.2M108.5 10.6V38.4M109.5 12.2V36.8M110.5 17.6V31.4M111.5 13.8V35.2M112.5 19.9V29.1M113.5 17.4V31.6M114.5 16.2V32.8M115.5 19.7V29.3M116.5 17.7V31.3M117.5 19.3V29.7M118.5 21.8V27.2M119.5 21.2V27.8M120.5 21.1V27.9M121.5 22.0V27.0M122.5 21.0V28.0M123.5 22.5V26.5M124.5 21.5V27.5M125.5 22.6V26.4M126.5 23.1V25.9M127.5 22.5V26.5M128.5 23.3V25.7M129.5 22.8V26.2M130.5 22.6V26.4M131.5 22.9V26.1M132.5 23.2V25.8M133.5 23.7V25.3M134.5 23.3V25.7" stroke="#a5bcd7" stroke-width="1"/></svg>
<div class="rt">140 Scary Bell Fm 02.1<svg width="10.5" height="6" viewBox="0 0 11 6" style="margin-left:3.2px;vertical-align:-0.5px"><g fill="none" stroke="#dfe7f0" stroke-width="0.85"><path d="M1.6,5.2 C0.2,3.6 0.8,0.8 3,0.8 C5.2,0.8 5.8,3.6 4.4,5.2"/><path d="M6.6,5.2 C5.2,3.6 5.8,0.8 8,0.8 C10.2,0.8 10.8,3.6 9.4,5.2"/><path d="M0.3,5.5 H10.7"/></g></svg></div>
</div>
<div class="reg" style="left:512px;top:420.33px;width:135px;height:39px">
<svg class="abs" style="left:0;top:0" width="135" height="39"><rect x="0" y="24.0" width="135" height="1" fill="#8fabcf"/><path d="M0.5 24.0V25.0M1.5 17.9V31.1M2.5 20.5V28.5M3.5 18.9V30.1M4.5 20.1V28.9M5.5 20.2V28.8M6.5 19.4V29.6M7.5 21.4V27.6M8.5 21.5V27.5M9.5 19.3V29.7M10.5 19.8V29.2M11.5 17.8V31.2M12.5 17.9V31.1M13.5 19.6V29.4M14.5 21.0V28.0M15.5 21.4V27.6M16.5 18.7V30.3M17.5 21.5V27.5M18.5 20.3V28.7M19.5 20.3V28.7M20.5 21.7V27.3M21.5 20.7V28.3M22.5 21.7V27.3M23.5 20.7V28.3M24.5 20.8V28.2M25.5 21.3V27.7M26.5 21.8V27.2M27.5 21.3V27.7M28.5 21.9V27.1M29.5 22.2V26.8M30.5 21.9V27.1M31.5 20.4V28.6M32.5 21.4V27.6M33.5 20.5V28.5M34.5 22.6V26.4M35.5 20.5V28.5M36.5 21.6V27.4M37.5 20.9V28.1M38.5 21.5V27.5M39.5 21.2V27.8M40.5 22.3V26.7M41.5 21.2V27.8M42.5 22.5V26.5M43.5 22.3V26.7M44.5 22.8V26.2M45.5 21.7V27.3M46.5 21.1V27.9M47.5 21.5V27.5M48.5 19.3V29.7M49.5 21.6V27.4M50.5 19.6V29.4M51.5 20.6V28.4M52.5 18.8V30.2M53.5 18.1V30.9M54.5 18.4V30.6M55.5 21.1V27.9M56.5 20.3V28.7M57.5 19.1V29.9M58.5 17.9V31.1M59.5 21.6V27.4M60.5 19.7V29.3M61.5 19.7V29.3M62.5 19.4V29.6M63.5 21.1V27.9M64.5 19.8V29.2M65.5 21.0V28.0M66.5 19.8V29.2M67.5 22.4V26.6M68.5 20.0V29.0M69.5 21.5V27.5M70.5 21.5V27.5M71.5 22.4V26.6M72.5 22.1V26.9M73.5 21.0V28.0M74.5 21.2V27.8M75.5 22.4V26.6M76.5 22.0V27.0M77.5 22.5V26.5M78.5 22.4V26.6M79.5 22.4V26.6M80.5 22.2V26.8M81.5 20.9V28.1M82.5 20.9V28.1M83.5 21.4V27.6M84.5 22.0V27.0M85.5 22.0V27.0M86.5 21.5V27.5M87.5 21.2V27.8M88.5 21.6V27.4M89.5 21.8V27.2M90.5 22.1V26.9M91.5 20.4V28.6M92.5 18.8V30.2M93.5 18.2V30.8M94.5 20.6V28.4M95.5 16.9V32.1M96.5 18.8V30.2M97.5 19.8V29.2M98.5 15.7V33.3M99.5 17.2V31.8M100.5 17.2V31.8M101.5 20.4V28.6M102.5 17.6V31.4M103.5 17.5V31.5M104.5 18.0V31.0M105.5 18.9V30.1M106.5 18.8V30.2M107.5 19.1V29.9M108.5 20.0V29.0M109.5 20.7V28.3M110.5 19.6V29.4M111.5 20.0V29.0M112.5 19.9V29.1M113.5 21.6V27.4M114.5 20.0V29.0M115.5 21.2V27.8M116.5 20.3V28.7M117.5 22.4V26.6M118.5 20.6V28.4M119.5 21.1V27.9M120.5 22.3V26.7M121.5 21.2V27.8M122.5 22.5V26.5M123.5 22.6V26.4M124.5 22.2V26.8M125.5 22.6V26.4M126.5 22.2V26.8M127.5 21.5V27.5M128.5 22.0V27.0M129.5 22.0V27.0M130.5 22.6V26.4M131.5 22.0V27.0M132.5 22.0V27.0M133.5 22.2V26.8M134.5 21.9V27.1" stroke="#a5bcd7" stroke-width="1"/></svg>
<div class="rt">140 Scary Bell Fm 03.1<svg width="10.5" height="6" viewBox="0 0 11 6" style="margin-left:3.2px;vertical-align:-0.5px"><g fill="none" stroke="#dfe7f0" stroke-width="0.85"><path d="M1.6,5.2 C0.2,3.6 0.8,0.8 3,0.8 C5.2,0.8 5.8,3.6 4.4,5.2"/><path d="M6.6,5.2 C5.2,3.6 5.8,0.8 8,0.8 C10.2,0.8 10.8,3.6 9.4,5.2"/><path d="M0.3,5.5 H10.7"/></g></svg></div>
</div>
<div class="reg" style="left:648px;top:420.33px;width:135px;height:39px">
<svg class="abs" style="left:0;top:0" width="135" height="39"><rect x="0" y="24.0" width="135" height="1" fill="#8fabcf"/><path d="M0.5 23.9V25.1M1.5 24.0V25.0M2.5 24.0V25.0M3.5 24.0V25.0M4.5 23.9V25.1M5.5 24.0V25.0M6.5 24.0V25.0M7.5 23.9V25.1M8.5 23.9V25.1M9.5 24.0V25.0M10.5 24.0V25.0M11.5 24.0V25.0M12.5 24.0V25.0M13.5 23.9V25.1M14.5 24.0V25.0M15.5 24.0V25.0M16.5 24.0V25.0M17.5 24.0V25.0M18.5 24.0V25.0M19.5 24.0V25.0M20.5 23.9V25.1M21.5 24.0V25.0M22.5 24.0V25.0M23.5 24.0V25.0M24.5 24.0V25.0M25.5 24.0V25.0M26.5 24.0V25.0M27.5 24.0V25.0M28.5 23.9V25.1M29.5 24.0V25.0M30.5 24.0V25.0M31.5 24.0V25.0M32.5 23.2V25.8M33.5 23.3V25.7M34.5 22.7V26.3M35.5 20.8V28.2M36.5 22.3V26.7M37.5 22.8V26.2M38.5 22.0V27.0M39.5 22.6V26.4M40.5 22.5V26.5M41.5 23.2V25.8M42.5 23.2V25.8M43.5 22.9V26.1M44.5 23.4V25.6M45.5 23.2V25.8M46.5 23.8V25.2M47.5 23.5V25.5M48.5 23.9V25.1M49.5 23.8V25.2M50.5 24.0V25.0M51.5 24.0V25.0M52.5 23.6V25.4M53.5 23.9V25.1M54.5 23.8V25.2M55.5 24.0V25.0M56.5 24.0V25.0M57.5 24.0V25.0M58.5 24.0V25.0M59.5 23.8V25.2M60.5 24.0V25.0M61.5 24.0V25.0M62.5 23.9V25.1M63.5 23.9V25.1M64.5 24.0V25.0M65.5 24.0V25.0M66.5 24.0V25.0M67.5 23.4V25.6M68.5 22.0V27.0M69.5 22.3V26.7M70.5 20.9V28.1M71.5 21.4V27.6M72.5 22.2V26.8M73.5 22.2V26.8M74.5 22.2V26.8M75.5 22.1V26.9M76.5 22.8V26.2M77.5 23.2V25.8M78.5 22.6V26.4M79.5 23.7V25.3M80.5 23.0V26.0M81.5 23.3V25.7M82.5 23.5V25.5M83.5 23.6V25.4M84.5 23.5V25.5M85.5 23.4V25.6M86.5 23.6V25.4M87.5 23.6V25.4M88.5 24.0V25.0M89.5 23.9V25.1M90.5 24.0V25.0M91.5 23.7V25.3M92.5 23.7V25.3M93.5 24.0V25.0M94.5 23.9V25.1M95.5 23.9V25.1M96.5 24.0V25.0M97.5 24.0V25.0M98.5 23.9V25.1M99.5 23.6V25.4M100.5 23.5V25.5M101.5 22.7V26.3M102.5 23.0V26.0M103.5 22.9V26.1M104.5 23.2V25.8M105.5 22.8V26.2M106.5 23.3V25.7M107.5 23.3V25.7M108.5 23.5V25.5M109.5 23.8V25.2M110.5 23.5V25.5M111.5 23.7V25.3M112.5 23.8V25.2M113.5 24.0V25.0M114.5 24.0V25.0M115.5 23.9V25.1M116.5 23.8V25.2M117.5 23.9V25.1M118.5 24.0V25.0M119.5 24.0V25.0M120.5 24.0V25.0M121.5 23.9V25.1M122.5 24.0V25.0M123.5 24.0V25.0M124.5 24.0V25.0M125.5 24.0V25.0M126.5 24.0V25.0M127.5 24.0V25.0M128.5 24.0V25.0M129.5 23.9V25.1M130.5 23.9V25.1M131.5 24.0V25.0M132.5 24.0V25.0M133.5 23.9V25.1M134.5 24.0V25.0" stroke="#a5bcd7" stroke-width="1"/></svg>
<div class="rt">140 Scary Bell Fm 04.3<svg width="10.5" height="6" viewBox="0 0 11 6" style="margin-left:3.2px;vertical-align:-0.5px"><g fill="none" stroke="#dfe7f0" stroke-width="0.85"><path d="M1.6,5.2 C0.2,3.6 0.8,0.8 3,0.8 C5.2,0.8 5.8,3.6 4.4,5.2"/><path d="M6.6,5.2 C5.2,3.6 5.8,0.8 8,0.8 C10.2,0.8 10.8,3.6 9.4,5.2"/><path d="M0.3,5.5 H10.7"/></g></svg></div>
</div>
<div class="reg" style="left:784px;top:420.33px;width:135px;height:39px">
<svg class="abs" style="left:0;top:0" width="135" height="39"><rect x="0" y="24.0" width="135" height="1" fill="#8fabcf"/><path d="M0.5 24.0V25.0M1.5 24.0V25.0M2.5 24.0V25.0M3.5 24.0V25.0M4.5 24.0V25.0M5.5 24.0V25.0M6.5 23.9V25.1M7.5 24.0V25.0M8.5 24.0V25.0M9.5 23.9V25.1M10.5 24.0V25.0M11.5 23.9V25.1M12.5 24.0V25.0M13.5 23.9V25.1M14.5 24.0V25.0M15.5 24.0V25.0M16.5 24.0V25.0M17.5 24.0V25.0M18.5 24.0V25.0M19.5 24.0V25.0M20.5 24.0V25.0M21.5 24.0V25.0M22.5 24.0V25.0M23.5 23.9V25.1M24.5 24.0V25.0M25.5 24.0V25.0M26.5 24.0V25.0M27.5 24.0V25.0M28.5 23.9V25.1M29.5 24.0V25.0M30.5 23.9V25.1M31.5 24.0V25.0M32.5 24.0V25.0M33.5 23.9V25.1M34.5 24.0V25.0M35.5 24.0V25.0M36.5 24.0V25.0M37.5 21.7V27.3M38.5 18.5V30.5M39.5 18.8V30.2M40.5 19.8V29.2M41.5 18.6V30.4M42.5 21.3V27.7M43.5 20.8V28.2M44.5 19.8V29.2M45.5 19.0V30.0M46.5 20.3V28.7M47.5 20.3V28.7M48.5 20.2V28.8M49.5 21.4V27.6M50.5 20.2V28.8M51.5 20.8V28.2M52.5 21.9V27.1M53.5 21.9V27.1M54.5 21.1V27.9M55.5 22.2V26.8M56.5 22.6V26.4M57.5 21.4V27.6M58.5 22.1V26.9M59.5 22.2V26.8M60.5 22.1V26.9M61.5 21.8V27.2M62.5 23.1V25.9M63.5 22.8V26.2M64.5 23.3V25.7M65.5 22.9V26.1M66.5 22.8V26.2M67.5 22.4V26.6M68.5 22.7V26.3M69.5 22.9V26.1M70.5 23.1V25.9M71.5 23.0V26.0M72.5 23.4V25.6M73.5 22.8V26.2M74.5 22.9V26.1M75.5 22.9V26.1M76.5 23.6V25.4M77.5 23.2V25.8M78.5 23.1V25.9M79.5 23.4V25.6M80.5 23.1V25.9M81.5 23.1V25.9M82.5 23.3V25.7M83.5 23.3V25.7M84.5 23.4V25.6M85.5 23.3V25.7M86.5 23.9V25.1M87.5 23.5V25.5M88.5 23.5V25.5M89.5 23.6V25.4M90.5 23.8V25.2M91.5 24.0V25.0M92.5 23.6V25.4M93.5 23.5V25.5M94.5 23.9V25.1M95.5 23.9V25.1M96.5 23.9V25.1M97.5 24.0V25.0M98.5 23.7V25.3M99.5 23.5V25.5M100.5 23.7V25.3M101.5 23.9V25.1M102.5 23.7V25.3M103.5 24.0V25.0M104.5 23.7V25.3M105.5 24.0V25.0M106.5 24.0V25.0M107.5 23.8V25.2M108.5 24.0V25.0M109.5 24.0V25.0M110.5 24.0V25.0M111.5 23.9V25.1M112.5 23.9V25.1M113.5 23.8V25.2M114.5 24.0V25.0M115.5 23.8V25.2M116.5 24.0V25.0M117.5 24.0V25.0M118.5 23.9V25.1M119.5 24.0V25.0M120.5 24.0V25.0M121.5 23.9V25.1M122.5 24.0V25.0M123.5 23.9V25.1M124.5 24.0V25.0M125.5 23.8V25.2M126.5 23.9V25.1M127.5 24.0V25.0M128.5 24.0V25.0M129.5 23.9V25.1M130.5 24.0V25.0M131.5 24.0V25.0M132.5 24.0V25.0M133.5 24.0V25.0M134.5 24.0V25.0" stroke="#a5bcd7" stroke-width="1"/></svg>
<div class="rt">140 Scary Bell Fm 05.1<svg width="10.5" height="6" viewBox="0 0 11 6" style="margin-left:3.2px;vertical-align:-0.5px"><g fill="none" stroke="#dfe7f0" stroke-width="0.85"><path d="M1.6,5.2 C0.2,3.6 0.8,0.8 3,0.8 C5.2,0.8 5.8,3.6 4.4,5.2"/><path d="M6.6,5.2 C5.2,3.6 5.8,0.8 8,0.8 C10.2,0.8 10.8,3.6 9.4,5.2"/><path d="M0.3,5.5 H10.7"/></g></svg></div>
</div>
<div class="reg" style="left:920px;top:420.33px;width:135px;height:39px">
<svg class="abs" style="left:0;top:0" width="135" height="39"><rect x="0" y="24.0" width="135" height="1" fill="#8fabcf"/><path d="M0.5 24.0V25.0M1.5 24.0V25.0M2.5 24.0V25.0M3.5 24.0V25.0M4.5 24.0V25.0M5.5 24.0V25.0M6.5 23.9V25.1M7.5 23.9V25.1M8.5 23.9V25.1M9.5 23.9V25.1M10.5 24.0V25.0M11.5 23.9V25.1M12.5 24.0V25.0M13.5 24.0V25.0M14.5 24.0V25.0M15.5 24.0V25.0M16.5 24.0V25.0M17.5 24.0V25.0M18.5 24.0V25.0M19.5 24.0V25.0M20.5 24.0V25.0M21.5 24.0V25.0M22.5 24.0V25.0M23.5 24.0V25.0M24.5 24.0V25.0M25.5 24.0V25.0M26.5 24.0V25.0M27.5 24.0V25.0M28.5 24.0V25.0M29.5 24.0V25.0M30.5 24.0V25.0M31.5 24.0V25.0M32.5 24.0V25.0M33.5 23.9V25.1M34.5 22.5V26.5M35.5 20.5V28.5M36.5 18.9V30.1M37.5 18.1V30.9M38.5 18.1V30.9M39.5 20.9V28.1M40.5 20.3V28.7M41.5 21.1V27.9M42.5 17.5V31.5M43.5 18.1V30.9M44.5 18.5V30.5M45.5 20.1V28.9M46.5 19.7V29.3M47.5 20.5V28.5M48.5 18.5V30.5M49.5 16.9V32.1M50.5 19.9V29.1M51.5 21.0V28.0M52.5 20.4V28.6M53.5 19.7V29.3M54.5 17.3V31.7M55.5 17.7V31.3M56.5 19.2V29.8M57.5 20.8V28.2M58.5 20.7V28.3M59.5 20.5V28.5M60.5 17.8V31.2M61.5 19.2V29.8M62.5 16.9V32.1M63.5 17.3V31.7M64.5 17.8V31.2M65.5 19.1V29.9M66.5 17.6V31.4M67.5 20.6V28.4M68.5 20.7V28.3M69.5 18.8V30.2M70.5 19.0V30.0M71.5 20.3V28.7M72.5 20.1V28.9M73.5 21.1V27.9M74.5 17.3V31.7M75.5 18.1V30.9M76.5 17.1V31.9M77.5 17.0V32.0M78.5 19.4V29.6M79.5 18.2V30.8M80.5 19.7V29.3M81.5 18.1V30.9M82.5 18.0V31.0M83.5 20.9V28.1M84.5 21.5V27.5M85.5 20.7V28.3M86.5 19.3V29.7M87.5 20.2V28.8M88.5 21.6V27.4M89.5 18.7V30.3M90.5 18.9V30.1M91.5 20.1V28.9M92.5 21.7V27.3M93.5 18.8V30.2M94.5 20.0V29.0M95.5 21.7V27.3M96.5 20.9V28.1M97.5 19.9V29.1M98.5 19.1V29.9M99.5 20.5V28.5M100.5 20.1V28.9M101.5 21.5V27.5M102.5 21.4V27.6M103.5 19.4V29.6M104.5 21.1V27.9M105.5 21.9V27.1M106.5 20.5V28.5M107.5 21.9V27.1M108.5 21.8V27.2M109.5 21.1V27.9M110.5 20.8V28.2M111.5 20.7V28.3M112.5 20.5V28.5M113.5 21.3V27.7M114.5 22.3V26.7M115.5 20.6V28.4M116.5 22.4V26.6M117.5 21.4V27.6M118.5 21.6V27.4M119.5 21.0V28.0M120.5 20.9V28.1M121.5 22.1V26.9M122.5 21.1V27.9M123.5 21.1V27.9M124.5 21.6V27.4M125.5 22.4V26.6M126.5 20.7V28.3M127.5 21.5V27.5M128.5 22.7V26.3M129.5 22.3V26.7M130.5 20.7V28.3M131.5 22.4V26.6M132.5 22.1V26.9M133.5 21.3V27.7M134.5 21.3V27.7" stroke="#a5bcd7" stroke-width="1"/></svg>
<div class="rt">140 Scary Bell Fm 06.3<svg width="10.5" height="6" viewBox="0 0 11 6" style="margin-left:3.2px;vertical-align:-0.5px"><g fill="none" stroke="#dfe7f0" stroke-width="0.85"><path d="M1.6,5.2 C0.2,3.6 0.8,0.8 3,0.8 C5.2,0.8 5.8,3.6 4.4,5.2"/><path d="M6.6,5.2 C5.2,3.6 5.8,0.8 8,0.8 C10.2,0.8 10.8,3.6 9.4,5.2"/><path d="M0.3,5.5 H10.7"/></g></svg></div>
</div>
<div class="reg" style="left:1056px;top:420.33px;width:118.5px;height:39px">
<svg class="abs" style="left:0;top:0" width="118" height="39"><rect x="0" y="24.0" width="118" height="1" fill="#8fabcf"/><path d="M0.5 24.0V25.0M1.5 16.4V32.6M2.5 20.2V28.8M3.5 19.9V29.1M4.5 15.7V33.3M5.5 17.0V32.0M6.5 20.9V28.1M7.5 21.1V27.9M8.5 20.5V28.5M9.5 18.2V30.8M10.5 21.0V28.0M11.5 19.7V29.3M12.5 19.2V29.8M13.5 20.4V28.6M14.5 19.8V29.2M15.5 21.8V27.2M16.5 22.2V26.8M17.5 22.7V26.3M18.5 21.1V27.9M19.5 22.7V26.3M20.5 21.1V27.9M21.5 21.7V27.3M22.5 22.8V26.2M23.5 21.8V27.2M24.5 23.0V26.0M25.5 22.6V26.4M26.5 23.2V25.8M27.5 22.4V26.6M28.5 22.3V26.7M29.5 22.4V26.6M30.5 23.6V25.4M31.5 22.7V26.3M32.5 23.1V25.9M33.5 22.8V26.2M34.5 23.2V25.8M35.5 23.2V25.8M36.5 23.3V25.7M37.5 23.1V25.9M38.5 23.8V25.2M39.5 23.8V25.2M40.5 23.5V25.5M41.5 23.7V25.3M42.5 23.6V25.4M43.5 24.0V25.0M44.5 23.5V25.5M45.5 24.0V25.0M46.5 23.5V25.5M47.5 23.5V25.5M48.5 23.8V25.2M49.5 24.0V25.0M50.5 23.7V25.3M51.5 24.0V25.0M52.5 23.8V25.2M53.5 24.0V25.0M54.5 23.6V25.4M55.5 23.8V25.2M56.5 23.9V25.1M57.5 24.0V25.0M58.5 23.8V25.2M59.5 23.7V25.3M60.5 23.7V25.3M61.5 24.0V25.0M62.5 24.0V25.0M63.5 24.0V25.0M64.5 21.3V27.7M65.5 21.0V28.0M66.5 17.0V32.0M67.5 15.0V34.0M68.5 16.1V32.9M69.5 20.3V28.7M70.5 19.9V29.1M71.5 20.1V28.9M72.5 17.9V31.1M73.5 18.9V30.1M74.5 19.6V29.4M75.5 20.3V28.7M76.5 20.8V28.2M77.5 20.5V28.5M78.5 20.8V28.2M79.5 20.5V28.5M80.5 21.2V27.8M81.5 21.3V27.7M82.5 21.4V27.6M83.5 21.7V27.3M84.5 22.1V26.9M85.5 23.3V25.7M86.5 22.5V26.5M87.5 22.4V26.6M88.5 23.1V25.9M89.5 22.7V26.3M90.5 23.5V25.5M91.5 22.8V26.2M92.5 23.4V25.6M93.5 23.2V25.8M94.5 23.7V25.3M95.5 23.7V25.3M96.5 23.7V25.3M97.5 23.7V25.3M98.5 23.9V25.1M99.5 23.7V25.3M100.5 23.4V25.6M101.5 23.7V25.3M102.5 23.5V25.5M103.5 23.7V25.3M104.5 23.7V25.3M105.5 23.6V25.4M106.5 23.7V25.3M107.5 24.0V25.0M108.5 24.0V25.0M109.5 24.0V25.0M110.5 24.0V25.0M111.5 24.0V25.0M112.5 23.8V25.2M113.5 23.8V25.2M114.5 24.0V25.0M115.5 23.9V25.1M116.5 23.9V25.1M117.5 23.8V25.2" stroke="#a5bcd7" stroke-width="1"/></svg>
<div class="rt">140 Scary Bell Fm 07.3<svg width="10.5" height="6" viewBox="0 0 11 6" style="margin-left:3.2px;vertical-align:-0.5px"><g fill="none" stroke="#dfe7f0" stroke-width="0.85"><path d="M1.6,5.2 C0.2,3.6 0.8,0.8 3,0.8 C5.2,0.8 5.8,3.6 4.4,5.2"/><path d="M6.6,5.2 C5.2,3.6 5.8,0.8 8,0.8 C10.2,0.8 10.8,3.6 9.4,5.2"/><path d="M0.3,5.5 H10.7"/></g></svg></div>
</div>
<div class="reg" style="left:240px;top:461.00px;width:135px;height:39px">
<svg class="abs" style="left:0;top:0" width="135" height="39"><rect x="0" y="24.0" width="135" height="1" fill="#8fabcf"/><path d="M0.5 23.7V25.3M1.5 23.8V25.2M2.5 24.0V25.0M3.5 23.7V25.3M4.5 23.9V25.1M5.5 23.8V25.2M6.5 23.9V25.1M7.5 23.8V25.2M8.5 23.6V25.4M9.5 24.0V25.0M10.5 23.8V25.2M11.5 23.8V25.2M12.5 23.8V25.2M13.5 23.7V25.3M14.5 23.9V25.1M15.5 23.7V25.3M16.5 23.8V25.2M17.5 23.6V25.4M18.5 24.0V25.0M19.5 24.0V25.0M20.5 24.0V25.0M21.5 23.7V25.3M22.5 24.0V25.0M23.5 24.0V25.0M24.5 23.8V25.2M25.5 23.6V25.4M26.5 24.0V25.0M27.5 23.9V25.1M28.5 23.8V25.2M29.5 23.8V25.2M30.5 23.7V25.3M31.5 23.7V25.3M32.5 24.0V25.0M33.5 24.0V25.0M34.5 24.0V25.0M35.5 23.8V25.2M36.5 24.0V25.0M37.5 24.0V25.0M38.5 23.6V25.4M39.5 23.8V25.2M40.5 23.8V25.2M41.5 23.8V25.2M42.5 23.8V25.2M43.5 23.8V25.2M44.5 23.9V25.1M45.5 24.0V25.0M46.5 24.0V25.0M47.5 24.0V25.0M48.5 23.9V25.1M49.5 24.0V25.0M50.5 24.0V25.0M51.5 23.9V25.1M52.5 23.6V25.4M53.5 23.8V25.2M54.5 24.0V25.0M55.5 23.7V25.3M56.5 24.0V25.0M57.5 24.0V25.0M58.5 23.9V25.1M59.5 23.9V25.1M60.5 23.8V25.2M61.5 23.9V25.1M62.5 23.8V25.2M63.5 24.0V25.0M64.5 23.7V25.3M65.5 23.9V25.1M66.5 23.7V25.3M67.5 24.0V25.0M68.5 23.7V25.3M69.5 24.0V25.0M70.5 23.7V25.3M71.5 23.7V25.3M72.5 23.8V25.2M73.5 24.0V25.0M74.5 24.0V25.0M75.5 24.0V25.0M76.5 23.7V25.3M77.5 24.0V25.0M78.5 23.8V25.2M79.5 23.8V25.2M80.5 23.8V25.2M81.5 24.0V25.0M82.5 24.0V25.0M83.5 24.0V25.0M84.5 23.6V25.4M85.5 23.9V25.1M86.5 23.8V25.2M87.5 23.8V25.2M88.5 24.0V25.0M89.5 24.0V25.0M90.5 24.0V25.0M91.5 23.7V25.3M92.5 24.0V25.0M93.5 23.6V25.4M94.5 23.9V25.1M95.5 23.8V25.2M96.5 24.0V25.0M97.5 23.7V25.3M98.5 24.0V25.0M99.5 23.9V25.1M100.5 23.8V25.2M101.5 24.0V25.0M102.5 24.0V25.0M103.5 23.7V25.3M104.5 24.0V25.0M105.5 23.9V25.1M106.5 23.7V25.3M107.5 24.0V25.0M108.5 24.0V25.0M109.5 24.0V25.0M110.5 23.9V25.1M111.5 23.9V25.1M112.5 23.8V25.2M113.5 23.9V25.1M114.5 23.7V25.3M115.5 24.0V25.0M116.5 23.8V25.2M117.5 23.7V25.3M118.5 24.0V25.0M119.5 24.0V25.0M120.5 23.9V25.1M121.5 24.0V25.0M122.5 23.9V25.1M123.5 23.8V25.2M124.5 24.0V25.0M125.5 24.0V25.0M126.5 23.9V25.1M127.5 24.0V25.0M128.5 24.0V25.0M129.5 23.9V25.1M130.5 24.0V25.0M131.5 24.0V25.0M132.5 23.9V25.1M133.5 23.9V25.1M134.5 23.7V25.3" stroke="#a5bcd7" stroke-width="1"/></svg>
<div class="rt">140 Bed Atmosphere Fm 01.1<svg width="10.5" height="6" viewBox="0 0 11 6" style="margin-left:3.2px;vertical-align:-0.5px"><g fill="none" stroke="#dfe7f0" stroke-width="0.85"><path d="M1.6,5.2 C0.2,3.6 0.8,0.8 3,0.8 C5.2,0.8 5.8,3.6 4.4,5.2"/><path d="M6.6,5.2 C5.2,3.6 5.8,0.8 8,0.8 C10.2,0.8 10.8,3.6 9.4,5.2"/><path d="M0.3,5.5 H10.7"/></g></svg></div>
</div>
<div class="reg" style="left:376px;top:461.00px;width:135px;height:39px">
<svg class="abs" style="left:0;top:0" width="135" height="39"><rect x="0" y="24.0" width="135" height="1" fill="#8fabcf"/><path d="M0.5 23.8V25.2M1.5 24.0V25.0M2.5 24.0V25.0M3.5 23.7V25.3M4.5 23.8V25.2M5.5 23.7V25.3M6.5 23.6V25.4M7.5 23.7V25.3M8.5 24.0V25.0M9.5 23.6V25.4M10.5 23.8V25.2M11.5 23.9V25.1M12.5 24.0V25.0M13.5 23.6V25.4M14.5 23.9V25.1M15.5 24.0V25.0M16.5 23.9V25.1M17.5 23.6V25.4M18.5 23.8V25.2M19.5 23.7V25.3M20.5 24.0V25.0M21.5 23.8V25.2M22.5 23.9V25.1M23.5 23.9V25.1M24.5 23.7V25.3M25.5 23.8V25.2M26.5 23.9V25.1M27.5 23.5V25.5M28.5 23.7V25.3M29.5 23.9V25.1M30.5 24.0V25.0M31.5 23.6V25.4M32.5 23.7V25.3M33.5 24.0V25.0M34.5 23.7V25.3M35.5 23.5V25.5M36.5 23.6V25.4M37.5 23.8V25.2M38.5 23.7V25.3M39.5 23.6V25.4M40.5 23.5V25.5M41.5 23.8V25.2M42.5 23.4V25.6M43.5 23.3V25.7M44.5 23.4V25.6M45.5 23.4V25.6M46.5 23.7V25.3M47.5 23.3V25.7M48.5 23.8V25.2M49.5 23.7V25.3M50.5 23.5V25.5M51.5 23.3V25.7M52.5 23.8V25.2M53.5 23.7V25.3M54.5 23.8V25.2M55.5 23.5V25.5M56.5 23.7V25.3M57.5 23.7V25.3M58.5 23.3V25.7M59.5 23.4V25.6M60.5 23.1V25.9M61.5 23.5V25.5M62.5 23.3V25.7M63.5 23.8V25.2M64.5 23.1V25.9M65.5 23.6V25.4M66.5 23.4V25.6M67.5 23.4V25.6M68.5 23.0V26.0M69.5 23.4V25.6M70.5 22.9V26.1M71.5 23.2V25.8M72.5 23.6V25.4M73.5 23.0V26.0M74.5 23.5V25.5M75.5 22.9V26.1M76.5 23.3V25.7M77.5 23.5V25.5M78.5 22.8V26.2M79.5 23.4V25.6M80.5 23.3V25.7M81.5 23.4V25.6M82.5 23.1V25.9M83.5 23.6V25.4M84.5 23.3V25.7M85.5 23.5V25.5M86.5 22.8V26.2M87.5 23.6V25.4M88.5 23.0V26.0M89.5 23.4V25.6M90.5 23.1V25.9M91.5 23.0V26.0M92.5 22.9V26.1M93.5 23.4V25.6M94.5 23.3V25.7M95.5 23.4V25.6M96.5 22.6V26.4M97.5 23.4V25.6M98.5 23.4V25.6M99.5 23.0V26.0M100.5 22.9V26.1M101.5 22.5V26.5M102.5 23.4V25.6M103.5 23.2V25.8M104.5 23.3V25.7M105.5 22.8V26.2M106.5 22.9V26.1M107.5 23.0V26.0M108.5 22.4V26.6M109.5 22.7V26.3M110.5 22.4V26.6M111.5 22.3V26.7M112.5 23.1V25.9M113.5 22.3V26.7M114.5 22.9V26.1M115.5 23.3V25.7M116.5 22.3V26.7M117.5 23.2V25.8M118.5 23.3V25.7M119.5 23.0V26.0M120.5 23.0V26.0M121.5 22.1V26.9M122.5 22.2V26.8M123.5 22.8V26.2M124.5 22.6V26.4M125.5 22.2V26.8M126.5 22.2V26.8M127.5 22.4V26.6M128.5 22.6V26.4M129.5 23.1V25.9M130.5 22.9V26.1M131.5 22.3V26.7M132.5 22.4V26.6M133.5 22.1V26.9M134.5 21.9V27.1" stroke="#a5bcd7" stroke-width="1"/></svg>
<div class="rt">140 Bed Atmosphere Fm 02.1<svg width="10.5" height="6" viewBox="0 0 11 6" style="margin-left:3.2px;vertical-align:-0.5px"><g fill="none" stroke="#dfe7f0" stroke-width="0.85"><path d="M1.6,5.2 C0.2,3.6 0.8,0.8 3,0.8 C5.2,0.8 5.8,3.6 4.4,5.2"/><path d="M6.6,5.2 C5.2,3.6 5.8,0.8 8,0.8 C10.2,0.8 10.8,3.6 9.4,5.2"/><path d="M0.3,5.5 H10.7"/></g></svg></div>
</div>
<div class="reg" style="left:512px;top:461.00px;width:135px;height:39px">
<svg class="abs" style="left:0;top:0" width="135" height="39"><rect x="0" y="24.0" width="135" height="1" fill="#8fabcf"/><path d="M0.5 21.7V27.3M1.5 22.8V26.2M2.5 23.0V26.0M3.5 21.8V27.2M4.5 22.3V26.7M5.5 22.9V26.1M6.5 22.1V26.9M7.5 22.7V26.3M8.5 22.8V26.2M9.5 22.6V26.4M10.5 22.3V26.7M11.5 22.1V26.9M12.5 23.0V26.0M13.5 22.0V27.0M14.5 22.2V26.8M15.5 22.4V26.6M16.5 22.1V26.9M17.5 21.9V27.1M18.5 23.1V25.9M19.5 22.4V26.6M20.5 22.1V26.9M21.5 22.1V26.9M22.5 22.2V26.8M23.5 22.9V26.1M24.5 21.7V27.3M25.5 22.0V27.0M26.5 22.8V26.2M27.5 22.5V26.5M28.5 21.7V27.3M29.5 22.8V26.2M30.5 22.5V26.5M31.5 21.7V27.3M32.5 21.8V27.2M33.5 22.8V26.2M34.5 22.0V27.0M35.5 22.6V26.4M36.5 22.1V26.9M37.5 22.0V27.0M38.5 22.9V26.1M39.5 22.8V26.2M40.5 22.8V26.2M41.5 22.7V26.3M42.5 23.1V25.9M43.5 22.9V26.1M44.5 22.5V26.5M45.5 22.5V26.5M46.5 23.0V26.0M47.5 22.3V26.7M48.5 21.7V27.3M49.5 22.3V26.7M50.5 22.6V26.4M51.5 22.1V26.9M52.5 22.5V26.5M53.5 22.9V26.1M54.5 22.4V26.6M55.5 23.1V25.9M56.5 22.1V26.9M57.5 22.9V26.1M58.5 22.6V26.4M59.5 21.7V27.3M60.5 22.0V27.0M61.5 21.9V27.1M62.5 22.2V26.8M63.5 22.2V26.8M64.5 22.1V26.9M65.5 21.7V27.3M66.5 22.8V26.2M67.5 22.0V27.0M68.5 22.7V26.3M69.5 22.7V26.3M70.5 21.9V27.1M71.5 22.2V26.8M72.5 21.9V27.1M73.5 21.8V27.2M74.5 22.3V26.7M75.5 22.8V26.2M76.5 23.1V25.9M77.5 22.3V26.7M78.5 22.1V26.9M79.5 22.7V26.3M80.5 23.0V26.0M81.5 23.1V25.9M82.5 22.9V26.1M83.5 22.1V26.9M84.5 23.1V25.9M85.5 22.8V26.2M86.5 22.7V26.3M87.5 22.1V26.9M88.5 21.7V27.3M89.5 23.1V25.9M90.5 23.0V26.0M91.5 21.7V27.3M92.5 21.7V27.3M93.5 22.9V26.1M94.5 22.6V26.4M95.5 22.4V26.6M96.5 22.6V26.4M97.5 22.5V26.5M98.5 22.4V26.6M99.5 22.7V26.3M100.5 23.0V26.0M101.5 23.0V26.0M102.5 22.9V26.1M103.5 23.0V26.0M104.5 22.2V26.8M105.5 22.1V26.9M106.5 22.7V26.3M107.5 22.0V27.0M108.5 22.0V27.0M109.5 22.6V26.4M110.5 22.4V26.6M111.5 22.8V26.2M112.5 21.8V27.2M113.5 22.3V26.7M114.5 23.0V26.0M115.5 22.9V26.1M116.5 22.1V26.9M117.5 22.6V26.4M118.5 22.1V26.9M119.5 22.8V26.2M120.5 21.9V27.1M121.5 21.9V27.1M122.5 23.0V26.0M123.5 22.3V26.7M124.5 22.8V26.2M125.5 22.1V26.9M126.5 21.9V27.1M127.5 22.0V27.0M128.5 22.8V26.2M129.5 23.0V26.0M130.5 22.1V26.9M131.5 22.3V26.7M132.5 22.9V26.1M133.5 22.8V26.2M134.5 22.3V26.7" stroke="#a5bcd7" stroke-width="1"/></svg>
<div class="rt">140 Bed Atmosphere Fm 03.3<svg width="10.5" height="6" viewBox="0 0 11 6" style="margin-left:3.2px;vertical-align:-0.5px"><g fill="none" stroke="#dfe7f0" stroke-width="0.85"><path d="M1.6,5.2 C0.2,3.6 0.8,0.8 3,0.8 C5.2,0.8 5.8,3.6 4.4,5.2"/><path d="M6.6,5.2 C5.2,3.6 5.8,0.8 8,0.8 C10.2,0.8 10.8,3.6 9.4,5.2"/><path d="M0.3,5.5 H10.7"/></g></svg></div>
</div>
<div class="reg" style="left:648px;top:461.00px;width:135px;height:39px">
<svg class="abs" style="left:0;top:0" width="135" height="39"><rect x="0" y="24.0" width="135" height="1" fill="#8fabcf"/><path d="M0.5 23.0V26.0M1.5 22.2V26.8M2.5 22.8V26.2M3.5 22.7V26.3M4.5 22.5V26.5M5.5 22.3V26.7M6.5 22.1V26.9M7.5 23.1V25.9M8.5 22.1V26.9M9.5 22.8V26.2M10.5 22.7V26.3M11.5 22.2V26.8M12.5 22.1V26.9M13.5 22.2V26.8M14.5 21.8V27.2M15.5 22.8V26.2M16.5 22.7V26.3M17.5 22.1V26.9M18.5 22.7V26.3M19.5 22.9V26.1M20.5 22.8V26.2M21.5 22.0V27.0M22.5 21.9V27.1M23.5 22.1V26.9M24.5 21.7V27.3M25.5 22.0V27.0M26.5 22.7V26.3M27.5 22.7V26.3M28.5 22.1V26.9M29.5 23.0V26.0M30.5 22.2V26.8M31.5 23.0V26.0M32.5 23.0V26.0M33.5 22.4V26.6M34.5 22.9V26.1M35.5 21.7V27.3M36.5 21.8V27.2M37.5 22.4V26.6M38.5 22.8V26.2M39.5 22.9V26.1M40.5 22.4V26.6M41.5 22.4V26.6M42.5 22.6V26.4M43.5 22.1V26.9M44.5 22.3V26.7M45.5 22.0V27.0M46.5 23.0V26.0M47.5 23.0V26.0M48.5 22.6V26.4M49.5 22.4V26.6M50.5 22.7V26.3M51.5 22.1V26.9M52.5 22.8V26.2M53.5 22.7V26.3M54.5 22.4V26.6M55.5 22.1V26.9M56.5 22.0V27.0M57.5 22.6V26.4M58.5 22.5V26.5M59.5 21.8V27.2M60.5 21.7V27.3M61.5 22.2V26.8M62.5 23.0V26.0M63.5 22.4V26.6M64.5 22.2V26.8M65.5 22.7V26.3M66.5 23.1V25.9M67.5 21.7V27.3M68.5 21.8V27.2M69.5 22.9V26.1M70.5 22.4V26.6M71.5 22.2V26.8M72.5 22.7V26.3M73.5 23.0V26.0M74.5 22.0V27.0M75.5 22.0V27.0M76.5 22.5V26.5M77.5 23.0V26.0M78.5 22.5V26.5M79.5 23.0V26.0M80.5 21.7V27.3M81.5 23.0V26.0M82.5 22.7V26.3M83.5 22.0V27.0M84.5 22.9V26.1M85.5 23.0V26.0M86.5 23.0V26.0M87.5 22.9V26.1M88.5 22.3V26.7M89.5 21.9V27.1M90.5 22.9V26.1M91.5 22.9V26.1M92.5 22.0V27.0M93.5 22.5V26.5M94.5 22.6V26.4M95.5 22.9V26.1M96.5 22.8V26.2M97.5 21.7V27.3M98.5 22.9V26.1M99.5 22.7V26.3M100.5 22.0V27.0M101.5 21.8V27.2M102.5 21.8V27.2M103.5 22.4V26.6M104.5 21.7V27.3M105.5 22.2V26.8M106.5 22.7V26.3M107.5 22.4V26.6M108.5 22.1V26.9M109.5 22.0V27.0M110.5 22.9V26.1M111.5 22.8V26.2M112.5 21.7V27.3M113.5 23.0V26.0M114.5 21.9V27.1M115.5 22.6V26.4M116.5 22.8V26.2M117.5 22.7V26.3M118.5 22.4V26.6M119.5 21.7V27.3M120.5 22.9V26.1M121.5 21.9V27.1M122.5 22.6V26.4M123.5 22.9V26.1M124.5 22.0V27.0M125.5 22.6V26.4M126.5 22.8V26.2M127.5 22.5V26.5M128.5 21.9V27.1M129.5 21.8V27.2M130.5 22.3V26.7M131.5 23.1V25.9M132.5 22.0V27.0M133.5 22.2V26.8M134.5 21.8V27.2" stroke="#a5bcd7" stroke-width="1"/></svg>
<div class="rt">140 Bed Atmosphere Fm 04.3<svg width="10.5" height="6" viewBox="0 0 11 6" style="margin-left:3.2px;vertical-align:-0.5px"><g fill="none" stroke="#dfe7f0" stroke-width="0.85"><path d="M1.6,5.2 C0.2,3.6 0.8,0.8 3,0.8 C5.2,0.8 5.8,3.6 4.4,5.2"/><path d="M6.6,5.2 C5.2,3.6 5.8,0.8 8,0.8 C10.2,0.8 10.8,3.6 9.4,5.2"/><path d="M0.3,5.5 H10.7"/></g></svg></div>
</div>
<div class="reg" style="left:784px;top:461.00px;width:135px;height:39px">
<svg class="abs" style="left:0;top:0" width="135" height="39"><rect x="0" y="24.0" width="135" height="1" fill="#8fabcf"/><path d="M0.5 21.7V27.3M1.5 22.6V26.4M2.5 21.9V27.1M3.5 21.9V27.1M4.5 22.7V26.3M5.5 22.6V26.4M6.5 22.6V26.4M7.5 22.6V26.4M8.5 22.6V26.4M9.5 23.0V26.0M10.5 22.8V26.2M11.5 21.8V27.2M12.5 22.5V26.5M13.5 22.2V26.8M14.5 21.8V27.2M15.5 22.0V27.0M16.5 22.8V26.2M17.5 21.8V27.2M18.5 21.9V27.1M19.5 21.7V27.3M20.5 22.0V27.0M21.5 22.0V27.0M22.5 21.9V27.1M23.5 22.7V26.3M24.5 22.2V26.8M25.5 22.6V26.4M26.5 21.9V27.1M27.5 22.9V26.1M28.5 22.3V26.7M29.5 22.6V26.4M30.5 21.9V27.1M31.5 22.6V26.4M32.5 21.9V27.1M33.5 21.9V27.1M34.5 21.8V27.2M35.5 22.9V26.1M36.5 21.7V27.3M37.5 22.0V27.0M38.5 22.1V26.9M39.5 22.2V26.8M40.5 23.0V26.0M41.5 21.8V27.2M42.5 22.3V26.7M43.5 22.4V26.6M44.5 22.6V26.4M45.5 22.0V27.0M46.5 22.0V27.0M47.5 21.8V27.2M48.5 22.8V26.2M49.5 22.6V26.4M50.5 22.8V26.2M51.5 23.0V26.0M52.5 22.6V26.4M53.5 23.1V25.9M54.5 21.9V27.1M55.5 22.8V26.2M56.5 23.0V26.0M57.5 23.0V26.0M58.5 22.0V27.0M59.5 22.8V26.2M60.5 22.4V26.6M61.5 22.5V26.5M62.5 21.9V27.1M63.5 21.7V27.3M64.5 22.7V26.3M65.5 22.2V26.8M66.5 21.8V27.2M67.5 22.4V26.6M68.5 21.8V27.2M69.5 22.0V27.0M70.5 22.7V26.3M71.5 21.8V27.2M72.5 22.3V26.7M73.5 23.0V26.0M74.5 22.3V26.7M75.5 21.9V27.1M76.5 22.4V26.6M77.5 22.4V26.6M78.5 22.5V26.5M79.5 21.8V27.2M80.5 22.1V26.9M81.5 22.8V26.2M82.5 22.6V26.4M83.5 22.6V26.4M84.5 21.7V27.3M85.5 22.1V26.9M86.5 22.9V26.1M87.5 21.8V27.2M88.5 23.1V25.9M89.5 22.3V26.7M90.5 22.5V26.5M91.5 22.1V26.9M92.5 22.5V26.5M93.5 23.0V26.0M94.5 22.3V26.7M95.5 21.9V27.1M96.5 22.0V27.0M97.5 22.6V26.4M98.5 22.8V26.2M99.5 22.0V27.0M100.5 21.9V27.1M101.5 22.8V26.2M102.5 21.8V27.2M103.5 21.7V27.3M104.5 22.5V26.5M105.5 22.6V26.4M106.5 22.1V26.9M107.5 21.8V27.2M108.5 22.8V26.2M109.5 22.7V26.3M110.5 22.6V26.4M111.5 22.0V27.0M112.5 22.8V26.2M113.5 22.3V26.7M114.5 22.4V26.6M115.5 22.1V26.9M116.5 22.9V26.1M117.5 21.7V27.3M118.5 21.6V27.4M119.5 22.3V26.7M120.5 21.9V27.1M121.5 22.9V26.1M122.5 21.8V27.2M123.5 22.3V26.7M124.5 22.0V27.0M125.5 21.8V27.2M126.5 22.6V26.4M127.5 21.8V27.2M128.5 22.8V26.2M129.5 23.1V25.9M130.5 22.4V26.6M131.5 21.8V27.2M132.5 21.8V27.2M133.5 21.7V27.3M134.5 22.4V26.6" stroke="#a5bcd7" stroke-width="1"/></svg>
<div class="rt">140 Bed Atmosphere Fm 05.3<svg width="10.5" height="6" viewBox="0 0 11 6" style="margin-left:3.2px;vertical-align:-0.5px"><g fill="none" stroke="#dfe7f0" stroke-width="0.85"><path d="M1.6,5.2 C0.2,3.6 0.8,0.8 3,0.8 C5.2,0.8 5.8,3.6 4.4,5.2"/><path d="M6.6,5.2 C5.2,3.6 5.8,0.8 8,0.8 C10.2,0.8 10.8,3.6 9.4,5.2"/><path d="M0.3,5.5 H10.7"/></g></svg></div>
</div>
<div class="reg" style="left:920px;top:461.00px;width:135px;height:39px">
<svg class="abs" style="left:0;top:0" width="135" height="39"><rect x="0" y="24.0" width="135" height="1" fill="#8fabcf"/><path d="M0.5 21.7V27.3M1.5 22.3V26.7M2.5 22.9V26.1M3.5 22.2V26.8M4.5 21.9V27.1M5.5 22.5V26.5M6.5 22.2V26.8M7.5 22.7V26.3M8.5 22.7V26.3M9.5 22.5V26.5M10.5 22.4V26.6M11.5 22.4V26.6M12.5 23.0V26.0M13.5 23.1V25.9M14.5 22.6V26.4M15.5 22.1V26.9M16.5 22.0V27.0M17.5 22.8V26.2M18.5 22.7V26.3M19.5 22.4V26.6M20.5 22.9V26.1M21.5 22.2V26.8M22.5 21.8V27.2M23.5 22.8V26.2M24.5 22.3V26.7M25.5 22.1V26.9M26.5 22.0V27.0M27.5 22.1V26.9M28.5 22.1V26.9M29.5 22.7V26.3M30.5 21.9V27.1M31.5 21.8V27.2M32.5 23.0V26.0M33.5 21.7V27.3M34.5 22.5V26.5M35.5 23.0V26.0M36.5 23.0V26.0M37.5 21.9V27.1M38.5 22.1V26.9M39.5 22.9V26.1M40.5 22.4V26.6M41.5 22.2V26.8M42.5 21.7V27.3M43.5 22.6V26.4M44.5 22.0V27.0M45.5 22.8V26.2M46.5 22.8V26.2M47.5 22.9V26.1M48.5 22.5V26.5M49.5 22.2V26.8M50.5 22.7V26.3M51.5 22.9V26.1M52.5 22.8V26.2M53.5 23.0V26.0M54.5 22.8V26.2M55.5 22.7V26.3M56.5 22.4V26.6M57.5 22.8V26.2M58.5 22.4V26.6M59.5 22.5V26.5M60.5 21.7V27.3M61.5 22.4V26.6M62.5 21.7V27.3M63.5 22.4V26.6M64.5 22.8V26.2M65.5 22.2V26.8M66.5 22.9V26.1M67.5 22.9V26.1M68.5 23.0V26.0M69.5 22.1V26.9M70.5 21.7V27.3M71.5 22.5V26.5M72.5 22.6V26.4M73.5 22.5V26.5M74.5 22.6V26.4M75.5 22.1V26.9M76.5 22.5V26.5M77.5 22.9V26.1M78.5 21.8V27.2M79.5 22.3V26.7M80.5 23.1V25.9M81.5 21.9V27.1M82.5 22.0V27.0M83.5 22.6V26.4M84.5 22.2V26.8M85.5 21.8V27.2M86.5 22.5V26.5M87.5 22.5V26.5M88.5 22.7V26.3M89.5 22.3V26.7M90.5 22.1V26.9M91.5 22.0V27.0M92.5 21.7V27.3M93.5 22.9V26.1M94.5 22.6V26.4M95.5 21.9V27.1M96.5 22.0V27.0M97.5 22.3V26.7M98.5 22.1V26.9M99.5 22.6V26.4M100.5 21.7V27.3M101.5 22.3V26.7M102.5 22.5V26.5M103.5 22.9V26.1M104.5 23.0V26.0M105.5 21.8V27.2M106.5 21.9V27.1M107.5 23.1V25.9M108.5 22.6V26.4M109.5 22.4V26.6M110.5 22.4V26.6M111.5 22.6V26.4M112.5 21.8V27.2M113.5 22.6V26.4M114.5 22.3V26.7M115.5 21.8V27.2M116.5 22.2V26.8M117.5 22.4V26.6M118.5 22.6V26.4M119.5 22.6V26.4M120.5 22.2V26.8M121.5 22.0V27.0M122.5 22.7V26.3M123.5 22.6V26.4M124.5 22.5V26.5M125.5 22.6V26.4M126.5 21.8V27.2M127.5 22.3V26.7M128.5 22.7V26.3M129.5 22.6V26.4M130.5 21.9V27.1M131.5 22.9V26.1M132.5 22.1V26.9M133.5 23.1V25.9M134.5 22.8V26.2" stroke="#a5bcd7" stroke-width="1"/></svg>
<div class="rt">140 Bed Atmosphere Fm 06.3<svg width="10.5" height="6" viewBox="0 0 11 6" style="margin-left:3.2px;vertical-align:-0.5px"><g fill="none" stroke="#dfe7f0" stroke-width="0.85"><path d="M1.6,5.2 C0.2,3.6 0.8,0.8 3,0.8 C5.2,0.8 5.8,3.6 4.4,5.2"/><path d="M6.6,5.2 C5.2,3.6 5.8,0.8 8,0.8 C10.2,0.8 10.8,3.6 9.4,5.2"/><path d="M0.3,5.5 H10.7"/></g></svg></div>
</div>
<div class="reg" style="left:1056px;top:461.00px;width:118.5px;height:39px">
<svg class="abs" style="left:0;top:0" width="118" height="39"><rect x="0" y="24.0" width="118" height="1" fill="#8fabcf"/><path d="M0.5 23.1V25.9M1.5 22.0V27.0M2.5 23.0V26.0M3.5 22.9V26.1M4.5 23.1V25.9M5.5 22.8V26.2M6.5 22.1V26.9M7.5 22.2V26.8M8.5 21.9V27.1M9.5 21.8V27.2M10.5 22.4V26.6M11.5 21.9V27.1M12.5 23.1V25.9M13.5 21.9V27.1M14.5 22.6V26.4M15.5 22.9V26.1M16.5 22.1V26.9M17.5 22.0V27.0M18.5 22.6V26.4M19.5 23.0V26.0M20.5 22.0V27.0M21.5 22.1V26.9M22.5 22.3V26.7M23.5 21.8V27.2M24.5 23.1V25.9M25.5 23.1V25.9M26.5 23.0V26.0M27.5 23.1V25.9M28.5 22.2V26.8M29.5 22.3V26.7M30.5 23.0V26.0M31.5 23.0V26.0M32.5 22.9V26.1M33.5 22.3V26.7M34.5 22.2V26.8M35.5 21.8V27.2M36.5 22.7V26.3M37.5 21.8V27.2M38.5 22.6V26.4M39.5 22.6V26.4M40.5 22.8V26.2M41.5 22.9V26.1M42.5 21.8V27.2M43.5 21.8V27.2M44.5 22.2V26.8M45.5 22.9V26.1M46.5 22.9V26.1M47.5 23.0V26.0M48.5 22.7V26.3M49.5 22.1V26.9M50.5 23.1V25.9M51.5 22.4V26.6M52.5 22.2V26.8M53.5 23.1V25.9M54.5 22.6V26.4M55.5 22.1V26.9M56.5 22.4V26.6M57.5 22.5V26.5M58.5 21.9V27.1M59.5 22.3V26.7M60.5 22.7V26.3M61.5 22.6V26.4M62.5 21.8V27.2M63.5 21.9V27.1M64.5 21.8V27.2M65.5 22.3V26.7M66.5 22.9V26.1M67.5 22.8V26.2M68.5 22.5V26.5M69.5 21.9V27.1M70.5 23.0V26.0M71.5 21.6V27.4M72.5 21.6V27.4M73.5 21.9V27.1M74.5 22.8V26.2M75.5 21.2V27.8M76.5 21.9V27.1M77.5 21.2V27.8M78.5 21.3V27.7M79.5 20.9V28.1M80.5 21.5V27.5M81.5 20.2V28.8M82.5 20.1V28.9M83.5 20.1V28.9M84.5 20.8V28.2M85.5 21.5V27.5M86.5 21.4V27.6M87.5 21.7V27.3M88.5 20.2V28.8M89.5 20.6V28.4M90.5 20.7V28.3M91.5 20.7V28.3M92.5 20.5V28.5M93.5 21.2V27.8M94.5 22.0V27.0M95.5 21.3V27.7M96.5 22.3V26.7M97.5 21.8V27.2M98.5 22.6V26.4M99.5 21.5V27.5M100.5 22.2V26.8M101.5 22.7V26.3M102.5 21.9V27.1M103.5 23.2V25.8M104.5 22.2V26.8M105.5 22.6V26.4M106.5 23.4V25.6M107.5 22.9V26.1M108.5 23.2V25.8M109.5 23.1V25.9M110.5 23.5V25.5M111.5 23.8V25.2M112.5 23.7V25.3M113.5 24.0V25.0M114.5 24.0V25.0M115.5 24.0V25.0M116.5 24.0V25.0M117.5 24.0V25.0" stroke="#a5bcd7" stroke-width="1"/></svg>
<div class="rt">140 Bed Atmosphere Fm 07.5<svg width="10.5" height="6" viewBox="0 0 11 6" style="margin-left:3.2px;vertical-align:-0.5px"><g fill="none" stroke="#dfe7f0" stroke-width="0.85"><path d="M1.6,5.2 C0.2,3.6 0.8,0.8 3,0.8 C5.2,0.8 5.8,3.6 4.4,5.2"/><path d="M6.6,5.2 C5.2,3.6 5.8,0.8 8,0.8 C10.2,0.8 10.8,3.6 9.4,5.2"/><path d="M0.3,5.5 H10.7"/></g></svg></div>
</div>
<div class="reg" style="left:240px;top:501.67px;width:135px;height:39px">
<svg class="abs" style="left:0;top:0" width="135" height="39"><rect x="0" y="24.0" width="135" height="1" fill="#8fabcf"/><path d="M0.5 21.8V27.2M1.5 21.7V27.3M2.5 22.1V26.9M3.5 22.1V26.9M4.5 23.2V25.8M5.5 23.1V25.9M6.5 22.4V26.6M7.5 21.4V27.6M8.5 19.9V29.1M9.5 22.1V26.9M10.5 23.1V25.9M11.5 22.3V26.7M12.5 21.4V27.6M13.5 22.0V27.0M14.5 21.6V27.4M15.5 23.1V25.9M16.5 21.6V27.4M17.5 22.8V26.2M18.5 21.7V27.3M19.5 23.0V26.0M20.5 21.6V27.4M21.5 22.9V26.1M22.5 21.8V27.2M23.5 22.6V26.4M24.5 22.8V26.2M25.5 21.8V27.2M26.5 22.9V26.1M27.5 22.4V26.6M28.5 23.4V25.6M29.5 20.4V28.6M30.5 22.5V26.5M31.5 23.4V25.6M32.5 22.8V26.2M33.5 23.3V25.7M34.5 23.5V25.5M35.5 23.3V25.7M36.5 23.0V26.0M37.5 22.8V26.2M38.5 22.6V26.4M39.5 22.7V26.3M40.5 23.1V25.9M41.5 23.0V26.0M42.5 23.5V25.5M43.5 23.0V26.0M44.5 23.1V25.9M45.5 21.7V27.3M46.5 22.6V26.4M47.5 23.3V25.7M48.5 23.5V25.5M49.5 23.3V25.7M50.5 21.1V27.9M51.5 20.7V28.3M52.5 22.3V26.7M53.5 23.3V25.7M54.5 22.8V26.2M55.5 22.5V26.5M56.5 22.5V26.5M57.5 22.7V26.3M58.5 22.3V26.7M59.5 23.2V25.8M60.5 23.1V25.9M61.5 22.5V26.5M62.5 22.7V26.3M63.5 21.8V27.2M64.5 22.6V26.4M65.5 21.6V27.4M66.5 22.6V26.4M67.5 22.9V26.1M68.5 22.2V26.8M69.5 22.3V26.7M70.5 22.5V26.5M71.5 21.7V27.3M72.5 22.7V26.3M73.5 22.0V27.0M74.5 21.7V27.3M75.5 22.4V26.6M76.5 22.4V26.6M77.5 21.6V27.4M78.5 22.2V26.8M79.5 23.0V26.0M80.5 23.3V25.7M81.5 23.3V25.7M82.5 22.8V26.2M83.5 23.3V25.7M84.5 22.6V26.4M85.5 22.9V26.1M86.5 23.1V25.9M87.5 22.8V26.2M88.5 22.5V26.5M89.5 23.3V25.7M90.5 23.4V25.6M91.5 23.3V25.7M92.5 23.3V25.7M93.5 22.8V26.2M94.5 23.0V26.0M95.5 23.3V25.7M96.5 23.6V25.4M97.5 23.7V25.3M98.5 23.6V25.4M99.5 22.8V26.2M100.5 21.0V28.0M101.5 23.5V25.5M102.5 20.3V28.7M103.5 23.6V25.4M104.5 23.0V26.0M105.5 23.2V25.8M106.5 23.5V25.5M107.5 22.7V26.3M108.5 22.7V26.3M109.5 22.8V26.2M110.5 23.2V25.8M111.5 22.4V26.6M112.5 22.6V26.4M113.5 22.2V26.8M114.5 23.2V25.8M115.5 21.6V27.4M116.5 23.2V25.8M117.5 22.8V26.2M118.5 22.4V26.6M119.5 21.4V27.6M120.5 23.0V26.0M121.5 21.8V27.2M122.5 21.3V27.7M123.5 22.4V26.6M124.5 22.6V26.4M125.5 21.8V27.2M126.5 22.7V26.3M127.5 22.3V26.7M128.5 21.8V27.2M129.5 22.3V26.7M130.5 22.8V26.2M131.5 23.0V26.0M132.5 22.3V26.7M133.5 21.5V27.5M134.5 21.7V27.3" stroke="#a5bcd7" stroke-width="1"/></svg>
<div class="rt">140 Chite Synth Fm 01<svg width="10.5" height="6" viewBox="0 0 11 6" style="margin-left:3.2px;vertical-align:-0.5px"><g fill="none" stroke="#dfe7f0" stroke-width="0.85"><path d="M1.6,5.2 C0.2,3.6 0.8,0.8 3,0.8 C5.2,0.8 5.8,3.6 4.4,5.2"/><path d="M6.6,5.2 C5.2,3.6 5.8,0.8 8,0.8 C10.2,0.8 10.8,3.6 9.4,5.2"/><path d="M0.3,5.5 H10.7"/></g></svg></div>
</div>
<div class="reg" style="left:376px;top:501.67px;width:135px;height:39px">
<svg class="abs" style="left:0;top:0" width="135" height="39"><rect x="0" y="24.0" width="135" height="1" fill="#8fabcf"/><path d="M0.5 22.8V26.2M1.5 22.3V26.7M2.5 22.5V26.5M3.5 22.2V26.8M4.5 21.9V27.1M5.5 22.3V26.7M6.5 22.8V26.2M7.5 22.3V26.7M8.5 21.6V27.4M9.5 22.0V27.0M10.5 21.7V27.3M11.5 22.4V26.6M12.5 22.2V26.8M13.5 21.3V27.7M14.5 21.6V27.4M15.5 21.9V27.1M16.5 22.9V26.1M17.5 22.1V26.9M18.5 23.1V25.9M19.5 21.5V27.5M20.5 21.6V27.4M21.5 22.0V27.0M22.5 22.8V26.2M23.5 21.8V27.2M24.5 23.0V26.0M25.5 22.2V26.8M26.5 22.7V26.3M27.5 23.4V25.6M28.5 22.1V26.9M29.5 22.9V26.1M30.5 22.4V26.6M31.5 22.7V26.3M32.5 22.9V26.1M33.5 22.7V26.3M34.5 23.4V25.6M35.5 22.8V26.2M36.5 23.3V25.7M37.5 23.7V25.3M38.5 23.4V25.6M39.5 23.7V25.3M40.5 23.7V25.3M41.5 23.1V25.9M42.5 23.6V25.4M43.5 23.5V25.5M44.5 23.4V25.6M45.5 23.4V25.6M46.5 22.7V26.3M47.5 22.5V26.5M48.5 22.7V26.3M49.5 22.4V26.6M50.5 23.1V25.9M51.5 22.5V26.5M52.5 21.6V27.4M53.5 22.0V27.0M54.5 22.2V26.8M55.5 22.3V26.7M56.5 21.1V27.9M57.5 23.2V25.8M58.5 21.9V27.1M59.5 20.2V28.8M60.5 22.2V26.8M61.5 21.6V27.4M62.5 23.0V26.0M63.5 21.9V27.1M64.5 22.3V26.7M65.5 21.7V27.3M66.5 22.3V26.7M67.5 22.7V26.3M68.5 21.3V27.7M69.5 22.5V26.5M70.5 21.7V27.3M71.5 21.5V27.5M72.5 22.7V26.3M73.5 21.9V27.1M74.5 22.5V26.5M75.5 22.7V26.3M76.5 22.8V26.2M77.5 21.6V27.4M78.5 22.6V26.4M79.5 21.5V27.5M80.5 22.4V26.6M81.5 23.4V25.6M82.5 22.2V26.8M83.5 22.3V26.7M84.5 22.3V26.7M85.5 23.0V26.0M86.5 23.2V25.8M87.5 23.0V26.0M88.5 22.8V26.2M89.5 22.8V26.2M90.5 23.1V25.9M91.5 23.1V25.9M92.5 23.5V25.5M93.5 22.7V26.3M94.5 23.2V25.8M95.5 23.2V25.8M96.5 22.9V26.1M97.5 23.5V25.5M98.5 23.0V26.0M99.5 23.4V25.6M100.5 22.9V26.1M101.5 23.6V25.4M102.5 23.4V25.6M103.5 22.9V26.1M104.5 23.1V25.9M105.5 23.2V25.8M106.5 22.9V26.1M107.5 22.2V26.8M108.5 22.9V26.1M109.5 23.4V25.6M110.5 22.4V26.6M111.5 23.0V26.0M112.5 22.3V26.7M113.5 22.5V26.5M114.5 22.2V26.8M115.5 22.2V26.8M116.5 23.0V26.0M117.5 20.1V28.9M118.5 22.7V26.3M119.5 21.7V27.3M120.5 20.1V28.9M121.5 21.8V27.2M122.5 21.6V27.4M123.5 22.3V26.7M124.5 21.8V27.2M125.5 21.3V27.7M126.5 22.7V26.3M127.5 22.9V26.1M128.5 22.3V26.7M129.5 22.2V26.8M130.5 22.9V26.1M131.5 22.7V26.3M132.5 21.6V27.4M133.5 22.6V26.4M134.5 22.9V26.1" stroke="#a5bcd7" stroke-width="1"/></svg>
<div class="rt">140 Chite Synth Fm 02.1<svg width="10.5" height="6" viewBox="0 0 11 6" style="margin-left:3.2px;vertical-align:-0.5px"><g fill="none" stroke="#dfe7f0" stroke-width="0.85"><path d="M1.6,5.2 C0.2,3.6 0.8,0.8 3,0.8 C5.2,0.8 5.8,3.6 4.4,5.2"/><path d="M6.6,5.2 C5.2,3.6 5.8,0.8 8,0.8 C10.2,0.8 10.8,3.6 9.4,5.2"/><path d="M0.3,5.5 H10.7"/></g></svg></div>
</div>
<div class="reg" style="left:512px;top:501.67px;width:135px;height:39px">
<svg class="abs" style="left:0;top:0" width="135" height="39"><rect x="0" y="24.0" width="135" height="1" fill="#8fabcf"/><path d="M0.5 22.2V26.8M1.5 22.9V26.1M2.5 21.7V27.3M3.5 22.6V26.4M4.5 21.8V27.2M5.5 22.6V26.4M6.5 22.7V26.3M7.5 22.5V26.5M8.5 23.1V25.9M9.5 22.3V26.7M10.5 22.4V26.6M11.5 23.0V26.0M12.5 21.5V27.5M13.5 22.4V26.6M14.5 23.1V25.9M15.5 21.3V27.7M16.5 21.6V27.4M17.5 22.7V26.3M18.5 23.1V25.9M19.5 23.0V26.0M20.5 19.7V29.3M21.5 22.2V26.8M22.5 22.3V26.7M23.5 22.8V26.2M24.5 22.8V26.2M25.5 20.7V28.3M26.5 22.8V26.2M27.5 21.9V27.1M28.5 22.3V26.7M29.5 23.3V25.7M30.5 22.6V26.4M31.5 23.5V25.5M32.5 22.7V26.3M33.5 22.6V26.4M34.5 22.9V26.1M35.5 23.0V26.0M36.5 22.9V26.1M37.5 23.5V25.5M38.5 23.2V25.8M39.5 23.5V25.5M40.5 23.3V25.7M41.5 21.0V28.0M42.5 21.5V27.5M43.5 23.1V25.9M44.5 22.9V26.1M45.5 23.0V26.0M46.5 23.0V26.0M47.5 22.7V26.3M48.5 22.7V26.3M49.5 23.0V26.0M50.5 22.1V26.9M51.5 22.4V26.6M52.5 23.0V26.0M53.5 22.0V27.0M54.5 23.0V26.0M55.5 22.3V26.7M56.5 22.1V26.9M57.5 22.2V26.8M58.5 22.2V26.8M59.5 21.8V27.2M60.5 22.0V27.0M61.5 22.4V26.6M62.5 22.3V26.7M63.5 21.7V27.3M64.5 22.5V26.5M65.5 22.9V26.1M66.5 21.9V27.1M67.5 21.6V27.4M68.5 22.6V26.4M69.5 21.8V27.2M70.5 21.5V27.5M71.5 22.9V26.1M72.5 20.2V28.8M73.5 22.3V26.7M74.5 22.5V26.5M75.5 21.4V27.6M76.5 21.6V27.4M77.5 22.5V26.5M78.5 22.0V27.0M79.5 22.3V26.7M80.5 23.0V26.0M81.5 22.0V27.0M82.5 21.4V27.6M83.5 23.3V25.7M84.5 22.9V26.1M85.5 23.4V25.6M86.5 22.9V26.1M87.5 23.1V25.9M88.5 22.3V26.7M89.5 23.2V25.8M90.5 22.6V26.4M91.5 22.8V26.2M92.5 23.1V25.9M93.5 23.5V25.5M94.5 23.4V25.6M95.5 23.2V25.8M96.5 23.3V25.7M97.5 23.1V25.9M98.5 23.2V25.8M99.5 23.4V25.6M100.5 23.1V25.9M101.5 22.6V26.4M102.5 23.4V25.6M103.5 23.3V25.7M104.5 23.6V25.4M105.5 23.5V25.5M106.5 23.5V25.5M107.5 22.9V26.1M108.5 22.3V26.7M109.5 22.4V26.6M110.5 21.9V27.1M111.5 22.2V26.8M112.5 22.4V26.6M113.5 22.5V26.5M114.5 23.2V25.8M115.5 22.6V26.4M116.5 22.7V26.3M117.5 22.1V26.9M118.5 23.0V26.0M119.5 22.2V26.8M120.5 22.4V26.6M121.5 22.2V26.8M122.5 22.4V26.6M123.5 22.9V26.1M124.5 21.7V27.3M125.5 21.6V27.4M126.5 22.0V27.0M127.5 22.9V26.1M128.5 22.0V27.0M129.5 21.5V27.5M130.5 21.4V27.6M131.5 21.7V27.3M132.5 23.1V25.9M133.5 21.6V27.4M134.5 22.0V27.0" stroke="#a5bcd7" stroke-width="1"/></svg>
<div class="rt">140 Chite Synth Fm 03.1<svg width="10.5" height="6" viewBox="0 0 11 6" style="margin-left:3.2px;vertical-align:-0.5px"><g fill="none" stroke="#dfe7f0" stroke-width="0.85"><path d="M1.6,5.2 C0.2,3.6 0.8,0.8 3,0.8 C5.2,0.8 5.8,3.6 4.4,5.2"/><path d="M6.6,5.2 C5.2,3.6 5.8,0.8 8,0.8 C10.2,0.8 10.8,3.6 9.4,5.2"/><path d="M0.3,5.5 H10.7"/></g></svg></div>
</div>
<div class="reg" style="left:648px;top:501.67px;width:135px;height:39px">
<svg class="abs" style="left:0;top:0" width="135" height="39"><rect x="0" y="24.0" width="135" height="1" fill="#8fabcf"/><path d="M0.5 22.3V26.7M1.5 23.2V25.8M2.5 22.7V26.3M3.5 22.9V26.1M4.5 20.0V29.0M5.5 23.1V25.9M6.5 20.7V28.3M7.5 18.8V30.2M8.5 21.6V27.4M9.5 21.7V27.3M10.5 21.3V27.7M11.5 22.6V26.4M12.5 21.8V27.2M13.5 22.5V26.5M14.5 21.7V27.3M15.5 22.4V26.6M16.5 20.5V28.5M17.5 22.1V26.9M18.5 21.6V27.4M19.5 21.4V27.6M20.5 22.7V26.3M21.5 21.6V27.4M22.5 23.2V25.8M23.5 22.0V27.0M24.5 21.6V27.4M25.5 22.5V26.5M26.5 22.7V26.3M27.5 22.4V26.6M28.5 23.1V25.9M29.5 23.3V25.7M30.5 22.6V26.4M31.5 22.9V26.1M32.5 22.7V26.3M33.5 23.0V26.0M34.5 23.6V25.4M35.5 22.8V26.2M36.5 20.6V28.4M37.5 22.1V26.9M38.5 23.7V25.3M39.5 23.5V25.5M40.5 23.0V26.0M41.5 23.0V26.0M42.5 23.0V26.0M43.5 23.2V25.8M44.5 22.9V26.1M45.5 23.0V26.0M46.5 23.4V25.6M47.5 23.1V25.9M48.5 22.8V26.2M49.5 22.6V26.4M50.5 23.3V25.7M51.5 23.0V26.0M52.5 20.6V28.4M53.5 23.3V25.7M54.5 22.9V26.1M55.5 22.3V26.7M56.5 22.5V26.5M57.5 23.0V26.0M58.5 22.0V27.0M59.5 23.1V25.9M60.5 20.8V28.2M61.5 23.0V26.0M62.5 23.0V26.0M63.5 21.5V27.5M64.5 19.5V29.5M65.5 22.6V26.4M66.5 21.4V27.6M67.5 21.3V27.7M68.5 22.5V26.5M69.5 21.7V27.3M70.5 21.8V27.2M71.5 22.0V27.0M72.5 22.6V26.4M73.5 21.4V27.6M74.5 21.5V27.5M75.5 23.1V25.9M76.5 22.6V26.4M77.5 22.7V26.3M78.5 22.9V26.1M79.5 22.7V26.3M80.5 21.9V27.1M81.5 23.3V25.7M82.5 22.1V26.9M83.5 22.9V26.1M84.5 22.0V27.0M85.5 22.3V26.7M86.5 23.2V25.8M87.5 23.4V25.6M88.5 23.5V25.5M89.5 23.1V25.9M90.5 23.4V25.6M91.5 23.4V25.6M92.5 23.4V25.6M93.5 23.1V25.9M94.5 23.3V25.7M95.5 23.4V25.6M96.5 23.2V25.8M97.5 22.9V26.1M98.5 23.0V26.0M99.5 23.4V25.6M100.5 22.8V26.2M101.5 22.9V26.1M102.5 23.0V26.0M103.5 23.1V25.9M104.5 23.3V25.7M105.5 23.4V25.6M106.5 22.4V26.6M107.5 21.6V27.4M108.5 23.4V25.6M109.5 22.2V26.8M110.5 22.1V26.9M111.5 23.4V25.6M112.5 22.5V26.5M113.5 23.0V26.0M114.5 22.6V26.4M115.5 21.8V27.2M116.5 22.6V26.4M117.5 22.4V26.6M118.5 22.0V27.0M119.5 22.8V26.2M120.5 22.0V27.0M121.5 22.4V26.6M122.5 21.2V27.8M123.5 22.7V26.3M124.5 21.7V27.3M125.5 23.0V26.0M126.5 22.6V26.4M127.5 22.9V26.1M128.5 22.8V26.2M129.5 22.1V26.9M130.5 22.8V26.2M131.5 21.7V27.3M132.5 21.9V27.1M133.5 22.2V26.8M134.5 21.8V27.2" stroke="#a5bcd7" stroke-width="1"/></svg>
<div class="rt">140 Chite Synth Fm 04.3<svg width="10.5" height="6" viewBox="0 0 11 6" style="margin-left:3.2px;vertical-align:-0.5px"><g fill="none" stroke="#dfe7f0" stroke-width="0.85"><path d="M1.6,5.2 C0.2,3.6 0.8,0.8 3,0.8 C5.2,0.8 5.8,3.6 4.4,5.2"/><path d="M6.6,5.2 C5.2,3.6 5.8,0.8 8,0.8 C10.2,0.8 10.8,3.6 9.4,5.2"/><path d="M0.3,5.5 H10.7"/></g></svg></div>
</div>
<div class="reg" style="left:784px;top:501.67px;width:135px;height:39px">
<svg class="abs" style="left:0;top:0" width="135" height="39"><rect x="0" y="24.0" width="135" height="1" fill="#8fabcf"/><path d="M0.5 22.2V26.8M1.5 22.1V26.9M2.5 21.8V27.2M3.5 19.7V29.3M4.5 22.5V26.5M5.5 22.9V26.1M6.5 19.7V29.3M7.5 21.1V27.9M8.5 22.4V26.6M9.5 22.0V27.0M10.5 22.3V26.7M11.5 21.2V27.8M12.5 21.2V27.8M13.5 21.3V27.7M14.5 22.5V26.5M15.5 20.2V28.8M16.5 21.6V27.4M17.5 21.4V27.6M18.5 22.0V27.0M19.5 22.2V26.8M20.5 21.4V27.6M21.5 21.4V27.6M22.5 21.2V27.8M23.5 21.2V27.8M24.5 22.7V26.3M25.5 20.3V28.7M26.5 21.0V28.0M27.5 21.5V27.5M28.5 22.0V27.0M29.5 22.7V26.3M30.5 22.8V26.2M31.5 20.3V28.7M32.5 22.8V26.2M33.5 21.3V27.7M34.5 21.6V27.4M35.5 22.0V27.0M36.5 21.2V27.8M37.5 21.1V27.9M38.5 19.8V29.2M39.5 22.8V26.2M40.5 21.8V27.2M41.5 22.1V26.9M42.5 22.5V26.5M43.5 21.1V27.9M44.5 21.5V27.5M45.5 22.7V26.3M46.5 22.5V26.5M47.5 22.3V26.7M48.5 19.4V29.6M49.5 22.3V26.7M50.5 22.1V26.9M51.5 21.3V27.7M52.5 22.6V26.4M53.5 21.5V27.5M54.5 22.3V26.7M55.5 21.1V27.9M56.5 21.0V28.0M57.5 22.3V26.7M58.5 21.7V27.3M59.5 22.7V26.3M60.5 22.1V26.9M61.5 21.7V27.3M62.5 21.7V27.3M63.5 22.3V26.7M64.5 22.9V26.1M65.5 22.7V26.3M66.5 21.8V27.2M67.5 19.9V29.1M68.5 19.8V29.2M69.5 21.7V27.3M70.5 21.1V27.9M71.5 21.9V27.1M72.5 22.4V26.6M73.5 21.8V27.2M74.5 22.4V26.6M75.5 19.7V29.3M76.5 22.6V26.4M77.5 22.4V26.6M78.5 22.1V26.9M79.5 21.1V27.9M80.5 22.6V26.4M81.5 22.6V26.4M82.5 21.1V27.9M83.5 22.5V26.5M84.5 22.3V26.7M85.5 22.2V26.8M86.5 21.4V27.6M87.5 22.1V26.9M88.5 22.0V27.0M89.5 22.2V26.8M90.5 21.4V27.6M91.5 21.1V27.9M92.5 22.1V26.9M93.5 21.1V27.9M94.5 22.5V26.5M95.5 21.0V28.0M96.5 20.2V28.8M97.5 21.6V27.4M98.5 22.2V26.8M99.5 19.9V29.1M100.5 22.7V26.3M101.5 21.2V27.8M102.5 22.2V26.8M103.5 18.9V30.1M104.5 22.0V27.0M105.5 21.9V27.1M106.5 22.5V26.5M107.5 21.5V27.5M108.5 22.3V26.7M109.5 21.6V27.4M110.5 21.9V27.1M111.5 23.0V26.0M112.5 21.5V27.5M113.5 22.1V26.9M114.5 22.8V26.2M115.5 21.2V27.8M116.5 22.5V26.5M117.5 21.3V27.7M118.5 21.9V27.1M119.5 22.3V26.7M120.5 22.5V26.5M121.5 21.3V27.7M122.5 22.4V26.6M123.5 22.3V26.7M124.5 21.4V27.6M125.5 21.4V27.6M126.5 21.6V27.4M127.5 21.2V27.8M128.5 21.6V27.4M129.5 22.7V26.3M130.5 20.4V28.6M131.5 22.6V26.4M132.5 22.4V26.6M133.5 21.9V27.1M134.5 18.7V30.3" stroke="#a5bcd7" stroke-width="1"/></svg>
<div class="rt">140 Chite Synth Fm 05.3<svg width="10.5" height="6" viewBox="0 0 11 6" style="margin-left:3.2px;vertical-align:-0.5px"><g fill="none" stroke="#dfe7f0" stroke-width="0.85"><path d="M1.6,5.2 C0.2,3.6 0.8,0.8 3,0.8 C5.2,0.8 5.8,3.6 4.4,5.2"/><path d="M6.6,5.2 C5.2,3.6 5.8,0.8 8,0.8 C10.2,0.8 10.8,3.6 9.4,5.2"/><path d="M0.3,5.5 H10.7"/></g></svg></div>
</div>
<div class="reg" style="left:920px;top:501.67px;width:135px;height:39px">
<svg class="abs" style="left:0;top:0" width="135" height="39"><rect x="0" y="24.0" width="135" height="1" fill="#8fabcf"/><path d="M0.5 19.0V30.0M1.5 22.3V26.7M2.5 21.5V27.5M3.5 19.1V29.9M4.5 21.4V27.6M5.5 22.2V26.8M6.5 21.2V27.8M7.5 19.1V29.9M8.5 22.1V26.9M9.5 21.8V27.2M10.5 21.3V27.7M11.5 21.9V27.1M12.5 21.0V28.0M13.5 22.9V26.1M14.5 20.1V28.9M15.5 21.5V27.5M16.5 22.0V27.0M17.5 21.2V27.8M18.5 20.8V28.2M19.5 22.3V26.7M20.5 21.5V27.5M21.5 21.3V27.7M22.5 22.2V26.8M23.5 21.0V28.0M24.5 21.7V27.3M25.5 22.9V26.1M26.5 22.7V26.3M27.5 22.8V26.2M28.5 21.8V27.2M29.5 19.5V29.5M30.5 22.4V26.6M31.5 22.1V26.9M32.5 22.8V26.2M33.5 21.1V27.9M34.5 21.3V27.7M35.5 21.8V27.2M36.5 22.1V26.9M37.5 22.3V26.7M38.5 21.7V27.3M39.5 20.8V28.2M40.5 21.0V28.0M41.5 21.0V28.0M42.5 21.5V27.5M43.5 21.3V27.7M44.5 22.8V26.2M45.5 21.1V27.9M46.5 22.3V26.7M47.5 22.7V26.3M48.5 22.1V26.9M49.5 21.0V28.0M50.5 21.3V27.7M51.5 21.0V28.0M52.5 22.5V26.5M53.5 22.5V26.5M54.5 22.9V26.1M55.5 22.4V26.6M56.5 22.8V26.2M57.5 20.7V28.3M58.5 22.4V26.6M59.5 21.6V27.4M60.5 21.8V27.2M61.5 21.8V27.2M62.5 22.4V26.6M63.5 21.5V27.5M64.5 21.6V27.4M65.5 21.5V27.5M66.5 22.0V27.0M67.5 22.0V27.0M68.5 22.4V26.6M69.5 22.9V26.1M70.5 22.0V27.0M71.5 21.7V27.3M72.5 19.6V29.4M73.5 21.2V27.8M74.5 21.2V27.8M75.5 21.2V27.8M76.5 21.3V27.7M77.5 22.0V27.0M78.5 22.6V26.4M79.5 22.4V26.6M80.5 19.7V29.3M81.5 19.1V29.9M82.5 22.7V26.3M83.5 21.5V27.5M84.5 22.2V26.8M85.5 21.1V27.9M86.5 21.8V27.2M87.5 22.7V26.3M88.5 21.3V27.7M89.5 22.3V26.7M90.5 18.8V30.2M91.5 22.3V26.7M92.5 22.3V26.7M93.5 22.6V26.4M94.5 21.0V28.0M95.5 21.8V27.2M96.5 21.3V27.7M97.5 22.8V26.2M98.5 21.9V27.1M99.5 19.7V29.3M100.5 19.3V29.7M101.5 21.1V27.9M102.5 22.8V26.2M103.5 22.2V26.8M104.5 20.9V28.1M105.5 21.9V27.1M106.5 21.0V28.0M107.5 22.4V26.6M108.5 20.9V28.1M109.5 21.1V27.9M110.5 22.4V26.6M111.5 21.8V27.2M112.5 22.2V26.8M113.5 21.8V27.2M114.5 21.1V27.9M115.5 21.1V27.9M116.5 21.2V27.8M117.5 22.4V26.6M118.5 21.3V27.7M119.5 20.1V28.9M120.5 19.6V29.4M121.5 21.1V27.9M122.5 22.4V26.6M123.5 22.2V26.8M124.5 21.8V27.2M125.5 22.5V26.5M126.5 21.5V27.5M127.5 21.6V27.4M128.5 22.8V26.2M129.5 19.0V30.0M130.5 22.8V26.2M131.5 21.6V27.4M132.5 22.3V26.7M133.5 22.7V26.3M134.5 20.0V29.0" stroke="#a5bcd7" stroke-width="1"/></svg>
<div class="rt">140 Chite Synth Fm 06.3<svg width="10.5" height="6" viewBox="0 0 11 6" style="margin-left:3.2px;vertical-align:-0.5px"><g fill="none" stroke="#dfe7f0" stroke-width="0.85"><path d="M1.6,5.2 C0.2,3.6 0.8,0.8 3,0.8 C5.2,0.8 5.8,3.6 4.4,5.2"/><path d="M6.6,5.2 C5.2,3.6 5.8,0.8 8,0.8 C10.2,0.8 10.8,3.6 9.4,5.2"/><path d="M0.3,5.5 H10.7"/></g></svg></div>
</div>
<div class="reg" style="left:1056px;top:501.67px;width:118.5px;height:39px">
<svg class="abs" style="left:0;top:0" width="118" height="39"><rect x="0" y="24.0" width="118" height="1" fill="#8fabcf"/><path d="M0.5 22.8V26.2M1.5 23.7V25.3M2.5 23.2V25.8M3.5 23.6V25.4M4.5 22.9V26.1M5.5 22.8V26.2M6.5 22.8V26.2M7.5 22.8V26.2M8.5 23.5V25.5M9.5 23.7V25.3M10.5 23.6V25.4M11.5 22.8V26.2M12.5 22.8V26.2M13.5 23.1V25.9M14.5 23.4V25.6M15.5 22.7V26.3M16.5 23.5V25.5M17.5 23.3V25.7M18.5 23.7V25.3M19.5 22.6V26.4M20.5 23.2V25.8M21.5 22.8V26.2M22.5 22.8V26.2M23.5 23.0V26.0M24.5 22.6V26.4M25.5 22.8V26.2M26.5 22.7V26.3M27.5 22.6V26.4M28.5 23.6V25.4M29.5 22.9V26.1M30.5 23.4V25.6M31.5 23.3V25.7M32.5 23.3V25.7M33.5 22.6V26.4M34.5 23.6V25.4M35.5 23.2V25.8M36.5 23.5V25.5M37.5 22.6V26.4M38.5 23.1V25.9M39.5 22.9V26.1M40.5 23.1V25.9M41.5 22.8V26.2M42.5 23.3V25.7M43.5 23.2V25.8M44.5 22.9V26.1M45.5 22.9V26.1M46.5 22.7V26.3M47.5 23.3V25.7M48.5 22.8V26.2M49.5 22.9V26.1M50.5 23.1V25.9M51.5 23.2V25.8M52.5 23.1V25.9M53.5 23.6V25.4M54.5 23.6V25.4M55.5 23.3V25.7M56.5 23.5V25.5M57.5 23.6V25.4M58.5 22.9V26.1M59.5 22.9V26.1M60.5 23.0V26.0M61.5 23.5V25.5M62.5 22.9V26.1M63.5 22.8V26.2M64.5 23.0V26.0M65.5 23.4V25.6M66.5 23.1V25.9M67.5 23.2V25.8M68.5 23.4V25.6M69.5 23.5V25.5M70.5 22.7V26.3M71.5 23.0V26.0M72.5 22.7V26.3M73.5 23.5V25.5M74.5 23.4V25.6M75.5 24.0V25.0M76.5 24.0V25.0M77.5 24.0V25.0M78.5 24.0V25.0M79.5 24.0V25.0M80.5 23.9V25.1M81.5 24.0V25.0M82.5 24.0V25.0M83.5 24.0V25.0M84.5 23.9V25.1M85.5 24.0V25.0M86.5 24.0V25.0M87.5 23.9V25.1M88.5 23.9V25.1M89.5 24.0V25.0M90.5 24.0V25.0M91.5 24.0V25.0M92.5 24.0V25.0M93.5 24.0V25.0M94.5 24.0V25.0M95.5 24.0V25.0M96.5 24.0V25.0M97.5 24.0V25.0M98.5 24.0V25.0M99.5 24.0V25.0M100.5 24.0V25.0M101.5 24.0V25.0M102.5 24.0V25.0M103.5 24.0V25.0M104.5 24.0V25.0M105.5 24.0V25.0M106.5 24.0V25.0M107.5 24.0V25.0M108.5 23.9V25.1M109.5 24.0V25.0M110.5 24.0V25.0M111.5 24.0V25.0M112.5 24.0V25.0M113.5 23.9V25.1M114.5 24.0V25.0M115.5 24.0V25.0M116.5 23.9V25.1M117.5 23.9V25.1" stroke="#a5bcd7" stroke-width="1"/></svg>
<div class="rt">140 Chite Synth Fm 07.7<svg width="10.5" height="6" viewBox="0 0 11 6" style="margin-left:3.2px;vertical-align:-0.5px"><g fill="none" stroke="#dfe7f0" stroke-width="0.85"><path d="M1.6,5.2 C0.2,3.6 0.8,0.8 3,0.8 C5.2,0.8 5.8,3.6 4.4,5.2"/><path d="M6.6,5.2 C5.2,3.6 5.8,0.8 8,0.8 C10.2,0.8 10.8,3.6 9.4,5.2"/><path d="M0.3,5.5 H10.7"/></g></svg></div>
</div>
<div class="reg" style="left:240px;top:542.33px;width:135px;height:39px">
<svg class="abs" style="left:0;top:0" width="135" height="39"><rect x="0" y="24.0" width="135" height="1" fill="#8fabcf"/><path d="M0.5 23.6V25.4M1.5 23.4V25.6M2.5 23.3V25.7M3.5 23.6V25.4M4.5 23.5V25.5M5.5 23.2V25.8M6.5 23.2V25.8M7.5 23.2V25.8M8.5 23.2V25.8M9.5 23.4V25.6M10.5 23.6V25.4M11.5 23.6V25.4M12.5 23.0V26.0M13.5 23.0V26.0M14.5 22.9V26.1M15.5 23.5V25.5M16.5 23.0V26.0M17.5 23.5V25.5M18.5 23.3V25.7M19.5 23.4V25.6M20.5 22.9V26.1M21.5 22.9V26.1M22.5 22.9V26.1M23.5 23.2V25.8M24.5 22.8V26.2M25.5 23.3V25.7M26.5 23.0V26.0M27.5 22.9V26.1M28.5 23.3V25.7M29.5 23.2V25.8M30.5 23.4V25.6M31.5 22.8V26.2M32.5 23.3V25.7M33.5 23.3V25.7M34.5 23.2V25.8M35.5 22.9V26.1M36.5 22.9V26.1M37.5 23.0V26.0M38.5 22.6V26.4M39.5 22.7V26.3M40.5 23.2V25.8M41.5 22.9V26.1M42.5 23.2V25.8M43.5 23.2V25.8M44.5 23.2V25.8M45.5 23.3V25.7M46.5 23.0V26.0M47.5 22.5V26.5M48.5 22.7V26.3M49.5 23.3V25.7M50.5 23.1V25.9M51.5 22.7V26.3M52.5 22.8V26.2M53.5 23.3V25.7M54.5 23.2V25.8M55.5 22.7V26.3M56.5 22.7V26.3M57.5 23.2V25.8M58.5 22.5V26.5M59.5 23.0V26.0M60.5 22.6V26.4M61.5 22.7V26.3M62.5 22.9V26.1M63.5 22.2V26.8M64.5 22.8V26.2M65.5 22.8V26.2M66.5 22.6V26.4M67.5 22.3V26.7M68.5 22.1V26.9M69.5 22.3V26.7M70.5 22.6V26.4M71.5 22.4V26.6M72.5 22.4V26.6M73.5 22.0V27.0M74.5 22.0V27.0M75.5 22.3V26.7M76.5 22.9V26.1M77.5 22.5V26.5M78.5 22.6V26.4M79.5 22.8V26.2M80.5 22.2V26.8M81.5 22.8V26.2M82.5 22.2V26.8M83.5 22.5V26.5M84.5 22.5V26.5M85.5 22.2V26.8M86.5 22.2V26.8M87.5 21.8V27.2M88.5 21.8V27.2M89.5 22.0V27.0M90.5 22.7V26.3M91.5 22.2V26.8M92.5 22.4V26.6M93.5 21.8V27.2M94.5 22.4V26.6M95.5 22.5V26.5M96.5 22.9V26.1M97.5 22.4V26.6M98.5 22.3V26.7M99.5 22.5V26.5M100.5 22.8V26.2M101.5 22.3V26.7M102.5 22.8V26.2M103.5 22.7V26.3M104.5 22.3V26.7M105.5 22.4V26.6M106.5 22.2V26.8M107.5 22.2V26.8M108.5 22.3V26.7M109.5 22.7V26.3M110.5 22.8V26.2M111.5 22.1V26.9M112.5 21.5V27.5M113.5 22.4V26.6M114.5 22.3V26.7M115.5 22.4V26.6M116.5 21.8V27.2M117.5 22.1V26.9M118.5 21.7V27.3M119.5 22.8V26.2M120.5 22.6V26.4M121.5 22.5V26.5M122.5 22.2V26.8M123.5 22.2V26.8M124.5 22.2V26.8M125.5 21.3V27.7M126.5 22.1V26.9M127.5 21.9V27.1M128.5 21.3V27.7M129.5 21.7V27.3M130.5 21.8V27.2M131.5 21.4V27.6M132.5 22.2V26.8M133.5 22.6V26.4M134.5 21.2V27.8" stroke="#a5bcd7" stroke-width="1"/></svg>
<div class="rt">140 Anaconda Orchestra Fm 01.2<svg width="10.5" height="6" viewBox="0 0 11 6" style="margin-left:3.2px;vertical-align:-0.5px"><g fill="none" stroke="#dfe7f0" stroke-width="0.85"><path d="M1.6,5.2 C0.2,3.6 0.8,0.8 3,0.8 C5.2,0.8 5.8,3.6 4.4,5.2"/><path d="M6.6,5.2 C5.2,3.6 5.8,0.8 8,0.8 C10.2,0.8 10.8,3.6 9.4,5.2"/><path d="M0.3,5.5 H10.7"/></g></svg></div>
</div>
<div class="reg" style="left:376px;top:542.33px;width:135px;height:39px">
<svg class="abs" style="left:0;top:0" width="135" height="39"><rect x="0" y="24.0" width="135" height="1" fill="#8fabcf"/><path d="M0.5 22.0V27.0M1.5 22.0V27.0M2.5 22.7V26.3M3.5 21.7V27.3M4.5 22.3V26.7M5.5 21.9V27.1M6.5 22.4V26.6M7.5 21.5V27.5M8.5 22.3V26.7M9.5 22.4V26.6M10.5 21.5V27.5M11.5 22.5V26.5M12.5 22.4V26.6M13.5 22.1V26.9M14.5 21.4V27.6M15.5 22.6V26.4M16.5 22.5V26.5M17.5 21.7V27.3M18.5 22.7V26.3M19.5 22.2V26.8M20.5 21.7V27.3M21.5 21.8V27.2M22.5 21.7V27.3M23.5 22.6V26.4M24.5 21.5V27.5M25.5 22.3V26.7M26.5 21.6V27.4M27.5 22.1V26.9M28.5 21.5V27.5M29.5 22.1V26.9M30.5 22.4V26.6M31.5 22.6V26.4M32.5 22.1V26.9M33.5 22.7V26.3M34.5 22.6V26.4M35.5 21.5V27.5M36.5 22.0V27.0M37.5 21.6V27.4M38.5 22.6V26.4M39.5 22.1V26.9M40.5 22.1V26.9M41.5 22.7V26.3M42.5 22.4V26.6M43.5 21.5V27.5M44.5 21.8V27.2M45.5 22.1V26.9M46.5 21.9V27.1M47.5 21.6V27.4M48.5 21.4V27.6M49.5 21.9V27.1M50.5 22.7V26.3M51.5 21.5V27.5M52.5 22.6V26.4M53.5 22.5V26.5M54.5 22.6V26.4M55.5 22.1V26.9M56.5 22.0V27.0M57.5 22.1V26.9M58.5 22.1V26.9M59.5 22.6V26.4M60.5 21.8V27.2M61.5 22.0V27.0M62.5 22.4V26.6M63.5 21.6V27.4M64.5 21.4V27.6M65.5 21.5V27.5M66.5 21.4V27.6M67.5 22.7V26.3M68.5 22.2V26.8M69.5 22.2V26.8M70.5 22.4V26.6M71.5 21.7V27.3M72.5 21.5V27.5M73.5 22.6V26.4M74.5 22.1V26.9M75.5 21.4V27.6M76.5 21.5V27.5M77.5 22.2V26.8M78.5 22.7V26.3M79.5 22.1V26.9M80.5 22.1V26.9M81.5 21.7V27.3M82.5 22.5V26.5M83.5 22.4V26.6M84.5 21.4V27.6M85.5 22.8V26.2M86.5 21.9V27.1M87.5 22.7V26.3M88.5 21.7V27.3M89.5 22.2V26.8M90.5 21.5V27.5M91.5 22.5V26.5M92.5 21.5V27.5M93.5 22.5V26.5M94.5 22.7V26.3M95.5 22.7V26.3M96.5 22.7V26.3M97.5 22.2V26.8M98.5 21.4V27.6M99.5 22.3V26.7M100.5 21.8V27.2M101.5 22.8V26.2M102.5 22.1V26.9M103.5 22.0V27.0M104.5 22.7V26.3M105.5 22.0V27.0M106.5 22.2V26.8M107.5 22.3V26.7M108.5 21.6V27.4M109.5 21.8V27.2M110.5 22.6V26.4M111.5 22.7V26.3M112.5 22.7V26.3M113.5 22.4V26.6M114.5 21.9V27.1M115.5 21.4V27.6M116.5 21.4V27.6M117.5 21.6V27.4M118.5 22.6V26.4M119.5 21.7V27.3M120.5 21.7V27.3M121.5 22.1V26.9M122.5 21.4V27.6M123.5 21.9V27.1M124.5 22.6V26.4M125.5 22.5V26.5M126.5 22.6V26.4M127.5 21.9V27.1M128.5 21.9V27.1M129.5 21.6V27.4M130.5 22.8V26.2M131.5 22.8V26.2M132.5 21.4V27.6M133.5 22.4V26.6M134.5 22.4V26.6" stroke="#a5bcd7" stroke-width="1"/></svg>
<div class="rt">140 Anaconda Orchestra Fm 02.2<svg width="10.5" height="6" viewBox="0 0 11 6" style="margin-left:3.2px;vertical-align:-0.5px"><g fill="none" stroke="#dfe7f0" stroke-width="0.85"><path d="M1.6,5.2 C0.2,3.6 0.8,0.8 3,0.8 C5.2,0.8 5.8,3.6 4.4,5.2"/><path d="M6.6,5.2 C5.2,3.6 5.8,0.8 8,0.8 C10.2,0.8 10.8,3.6 9.4,5.2"/><path d="M0.3,5.5 H10.7"/></g></svg></div>
</div>
<div class="reg" style="left:512px;top:542.33px;width:135px;height:39px">
<svg class="abs" style="left:0;top:0" width="135" height="39"><rect x="0" y="24.0" width="135" height="1" fill="#8fabcf"/><path d="M0.5 21.5V27.5M1.5 22.6V26.4M2.5 21.7V27.3M3.5 21.5V27.5M4.5 22.0V27.0M5.5 21.9V27.1M6.5 22.8V26.2M7.5 21.9V27.1M8.5 21.9V27.1M9.5 21.7V27.3M10.5 22.1V26.9M11.5 22.6V26.4M12.5 22.5V26.5M13.5 21.9V27.1M14.5 22.7V26.3M15.5 22.7V26.3M16.5 22.4V26.6M17.5 21.7V27.3M18.5 22.0V27.0M19.5 22.3V26.7M20.5 21.4V27.6M21.5 22.0V27.0M22.5 22.5V26.5M23.5 22.0V27.0M24.5 21.6V27.4M25.5 22.3V26.7M26.5 22.2V26.8M27.5 22.0V27.0M28.5 21.4V27.6M29.5 21.9V27.1M30.5 22.5V26.5M31.5 22.0V27.0M32.5 22.3V26.7M33.5 22.1V26.9M34.5 21.8V27.2M35.5 22.8V26.2M36.5 22.1V26.9M37.5 22.4V26.6M38.5 21.9V27.1M39.5 21.6V27.4M40.5 22.1V26.9M41.5 21.9V27.1M42.5 22.4V26.6M43.5 22.4V26.6M44.5 22.1V26.9M45.5 22.0V27.0M46.5 22.5V26.5M47.5 21.7V27.3M48.5 22.1V26.9M49.5 22.3V26.7M50.5 22.4V26.6M51.5 21.6V27.4M52.5 21.5V27.5M53.5 21.4V27.6M54.5 22.4V26.6M55.5 22.7V26.3M56.5 21.9V27.1M57.5 22.8V26.2M58.5 21.6V27.4M59.5 21.8V27.2M60.5 22.3V26.7M61.5 22.2V26.8M62.5 21.8V27.2M63.5 22.6V26.4M64.5 22.3V26.7M65.5 21.7V27.3M66.5 21.8V27.2M67.5 22.0V27.0M68.5 22.7V26.3M69.5 22.5V26.5M70.5 22.4V26.6M71.5 22.8V26.2M72.5 21.9V27.1M73.5 22.0V27.0M74.5 21.5V27.5M75.5 22.0V27.0M76.5 21.5V27.5M77.5 22.1V26.9M78.5 22.1V26.9M79.5 22.4V26.6M80.5 22.1V26.9M81.5 21.4V27.6M82.5 22.1V26.9M83.5 22.8V26.2M84.5 22.3V26.7M85.5 22.5V26.5M86.5 21.9V27.1M87.5 22.1V26.9M88.5 22.1V26.9M89.5 21.5V27.5M90.5 21.7V27.3M91.5 22.7V26.3M92.5 22.8V26.2M93.5 21.8V27.2M94.5 21.9V27.1M95.5 21.9V27.1M96.5 22.1V26.9M97.5 22.8V26.2M98.5 22.2V26.8M99.5 21.6V27.4M100.5 21.9V27.1M101.5 22.7V26.3M102.5 22.6V26.4M103.5 21.5V27.5M104.5 22.0V27.0M105.5 22.6V26.4M106.5 21.8V27.2M107.5 21.5V27.5M108.5 21.6V27.4M109.5 21.9V27.1M110.5 21.6V27.4M111.5 22.7V26.3M112.5 22.1V26.9M113.5 21.6V27.4M114.5 22.3V26.7M115.5 22.6V26.4M116.5 21.5V27.5M117.5 21.8V27.2M118.5 22.8V26.2M119.5 22.7V26.3M120.5 22.0V27.0M121.5 21.4V27.6M122.5 21.9V27.1M123.5 21.5V27.5M124.5 22.7V26.3M125.5 22.0V27.0M126.5 22.5V26.5M127.5 22.3V26.7M128.5 22.6V26.4M129.5 22.1V26.9M130.5 22.7V26.3M131.5 21.9V27.1M132.5 21.9V27.1M133.5 21.5V27.5M134.5 21.7V27.3" stroke="#a5bcd7" stroke-width="1"/></svg>
<div class="rt">140 Anaconda Orchestra Fm 03.2<svg width="10.5" height="6" viewBox="0 0 11 6" style="margin-left:3.2px;vertical-align:-0.5px"><g fill="none" stroke="#dfe7f0" stroke-width="0.85"><path d="M1.6,5.2 C0.2,3.6 0.8,0.8 3,0.8 C5.2,0.8 5.8,3.6 4.4,5.2"/><path d="M6.6,5.2 C5.2,3.6 5.8,0.8 8,0.8 C10.2,0.8 10.8,3.6 9.4,5.2"/><path d="M0.3,5.5 H10.7"/></g></svg></div>
</div>
<div class="reg" style="left:648px;top:542.33px;width:135px;height:39px">
<svg class="abs" style="left:0;top:0" width="135" height="39"><rect x="0" y="24.0" width="135" height="1" fill="#8fabcf"/><path d="M0.5 22.7V26.3M1.5 21.5V27.5M2.5 22.0V27.0M3.5 21.4V27.6M4.5 22.1V26.9M5.5 22.7V26.3M6.5 21.8V27.2M7.5 22.6V26.4M8.5 21.4V27.6M9.5 22.0V27.0M10.5 21.5V27.5M11.5 22.1V26.9M12.5 22.3V26.7M13.5 21.8V27.2M14.5 21.8V27.2M15.5 22.1V26.9M16.5 22.4V26.6M17.5 22.2V26.8M18.5 21.8V27.2M19.5 22.5V26.5M20.5 22.6V26.4M21.5 22.1V26.9M22.5 21.9V27.1M23.5 22.7V26.3M24.5 22.4V26.6M25.5 21.4V27.6M26.5 22.4V26.6M27.5 21.7V27.3M28.5 22.4V26.6M29.5 22.7V26.3M30.5 22.1V26.9M31.5 21.5V27.5M32.5 21.7V27.3M33.5 22.7V26.3M34.5 21.8V27.2M35.5 21.9V27.1M36.5 22.1V26.9M37.5 21.8V27.2M38.5 22.1V26.9M39.5 22.5V26.5M40.5 21.8V27.2M41.5 22.6V26.4M42.5 22.4V26.6M43.5 21.6V27.4M44.5 22.0V27.0M45.5 22.1V26.9M46.5 21.8V27.2M47.5 22.1V26.9M48.5 22.3V26.7M49.5 22.0V27.0M50.5 22.8V26.2M51.5 22.3V26.7M52.5 22.8V26.2M53.5 21.4V27.6M54.5 21.5V27.5M55.5 21.9V27.1M56.5 22.6V26.4M57.5 21.6V27.4M58.5 22.4V26.6M59.5 21.6V27.4M60.5 21.9V27.1M61.5 21.9V27.1M62.5 21.7V27.3M63.5 22.4V26.6M64.5 21.6V27.4M65.5 22.0V27.0M66.5 21.7V27.3M67.5 21.6V27.4M68.5 22.4V26.6M69.5 22.2V26.8M70.5 22.3V26.7M71.5 22.7V26.3M72.5 21.5V27.5M73.5 21.8V27.2M74.5 22.1V26.9M75.5 22.0V27.0M76.5 21.5V27.5M77.5 22.7V26.3M78.5 22.3V26.7M79.5 21.8V27.2M80.5 22.0V27.0M81.5 22.1V26.9M82.5 22.4V26.6M83.5 22.5V26.5M84.5 21.8V27.2M85.5 22.3V26.7M86.5 21.4V27.6M87.5 21.5V27.5M88.5 21.4V27.6M89.5 22.4V26.6M90.5 22.1V26.9M91.5 22.7V26.3M92.5 22.3V26.7M93.5 22.7V26.3M94.5 22.1V26.9M95.5 21.4V27.6M96.5 21.7V27.3M97.5 22.3V26.7M98.5 22.4V26.6M99.5 21.5V27.5M100.5 22.7V26.3M101.5 21.6V27.4M102.5 21.6V27.4M103.5 22.7V26.3M104.5 21.4V27.6M105.5 21.9V27.1M106.5 22.2V26.8M107.5 22.2V26.8M108.5 21.9V27.1M109.5 22.0V27.0M110.5 21.5V27.5M111.5 21.5V27.5M112.5 22.3V26.7M113.5 22.8V26.2M114.5 21.7V27.3M115.5 21.9V27.1M116.5 21.9V27.1M117.5 22.7V26.3M118.5 22.7V26.3M119.5 21.5V27.5M120.5 22.3V26.7M121.5 22.1V26.9M122.5 21.4V27.6M123.5 22.5V26.5M124.5 21.9V27.1M125.5 22.7V26.3M126.5 22.0V27.0M127.5 21.7V27.3M128.5 22.6V26.4M129.5 21.7V27.3M130.5 21.4V27.6M131.5 21.6V27.4M132.5 21.7V27.3M133.5 21.4V27.6M134.5 21.8V27.2" stroke="#a5bcd7" stroke-width="1"/></svg>
<div class="rt">140 Anaconda Orchestra Fm 04.4<svg width="10.5" height="6" viewBox="0 0 11 6" style="margin-left:3.2px;vertical-align:-0.5px"><g fill="none" stroke="#dfe7f0" stroke-width="0.85"><path d="M1.6,5.2 C0.2,3.6 0.8,0.8 3,0.8 C5.2,0.8 5.8,3.6 4.4,5.2"/><path d="M6.6,5.2 C5.2,3.6 5.8,0.8 8,0.8 C10.2,0.8 10.8,3.6 9.4,5.2"/><path d="M0.3,5.5 H10.7"/></g></svg></div>
</div>
<div class="reg" style="left:784px;top:542.33px;width:135px;height:39px">
<svg class="abs" style="left:0;top:0" width="135" height="39"><rect x="0" y="24.0" width="135" height="1" fill="#8fabcf"/><path d="M0.5 22.0V27.0M1.5 21.6V27.4M2.5 21.6V27.4M3.5 21.9V27.1M4.5 21.8V27.2M5.5 22.6V26.4M6.5 22.3V26.7M7.5 22.3V26.7M8.5 21.6V27.4M9.5 21.7V27.3M10.5 22.4V26.6M11.5 21.4V27.6M12.5 22.7V26.3M13.5 22.7V26.3M14.5 22.3V26.7M15.5 22.7V26.3M16.5 21.4V27.6M17.5 22.3V26.7M18.5 22.2V26.8M19.5 21.6V27.4M20.5 22.0V27.0M21.5 21.9V27.1M22.5 22.2V26.8M23.5 22.1V26.9M24.5 21.4V27.6M25.5 22.4V26.6M26.5 22.0V27.0M27.5 22.1V26.9M28.5 22.6V26.4M29.5 22.6V26.4M30.5 22.1V26.9M31.5 21.6V27.4M32.5 22.2V26.8M33.5 22.7V26.3M34.5 21.4V27.6M35.5 22.6V26.4M36.5 21.5V27.5M37.5 22.7V26.3M38.5 21.9V27.1M39.5 22.6V26.4M40.5 22.4V26.6M41.5 22.2V26.8M42.5 21.7V27.3M43.5 22.2V26.8M44.5 22.2V26.8M45.5 22.2V26.8M46.5 22.1V26.9M47.5 22.4V26.6M48.5 21.4V27.6M49.5 22.5V26.5M50.5 22.6V26.4M51.5 22.0V27.0M52.5 22.3V26.7M53.5 21.8V27.2M54.5 22.8V26.2M55.5 21.8V27.2M56.5 22.3V26.7M57.5 21.5V27.5M58.5 22.4V26.6M59.5 22.2V26.8M60.5 22.3V26.7M61.5 22.0V27.0M62.5 22.4V26.6M63.5 21.8V27.2M64.5 22.2V26.8M65.5 21.8V27.2M66.5 22.4V26.6M67.5 22.1V26.9M68.5 22.0V27.0M69.5 21.8V27.2M70.5 21.9V27.1M71.5 22.2V26.8M72.5 22.7V26.3M73.5 22.6V26.4M74.5 22.6V26.4M75.5 22.5V26.5M76.5 22.5V26.5M77.5 21.8V27.2M78.5 22.3V26.7M79.5 21.5V27.5M80.5 22.5V26.5M81.5 22.5V26.5M82.5 22.5V26.5M83.5 22.6V26.4M84.5 21.8V27.2M85.5 22.0V27.0M86.5 22.4V26.6M87.5 21.6V27.4M88.5 21.8V27.2M89.5 22.2V26.8M90.5 21.9V27.1M91.5 21.9V27.1M92.5 22.2V26.8M93.5 22.7V26.3M94.5 22.3V26.7M95.5 21.4V27.6M96.5 22.3V26.7M97.5 21.9V27.1M98.5 22.7V26.3M99.5 21.7V27.3M100.5 21.6V27.4M101.5 22.3V26.7M102.5 22.3V26.7M103.5 22.1V26.9M104.5 22.4V26.6M105.5 22.5V26.5M106.5 22.6V26.4M107.5 21.8V27.2M108.5 22.1V26.9M109.5 21.4V27.6M110.5 21.4V27.6M111.5 21.5V27.5M112.5 21.4V27.6M113.5 21.6V27.4M114.5 22.8V26.2M115.5 22.6V26.4M116.5 21.4V27.6M117.5 21.5V27.5M118.5 21.9V27.1M119.5 21.9V27.1M120.5 22.2V26.8M121.5 22.2V26.8M122.5 22.6V26.4M123.5 22.0V27.0M124.5 22.4V26.6M125.5 22.6V26.4M126.5 21.5V27.5M127.5 22.0V27.0M128.5 21.5V27.5M129.5 22.4V26.6M130.5 22.0V27.0M131.5 22.4V26.6M132.5 21.6V27.4M133.5 22.5V26.5M134.5 21.9V27.1" stroke="#a5bcd7" stroke-width="1"/></svg>
<div class="rt">140 Anaconda Orchestra Fm 05.4<svg width="10.5" height="6" viewBox="0 0 11 6" style="margin-left:3.2px;vertical-align:-0.5px"><g fill="none" stroke="#dfe7f0" stroke-width="0.85"><path d="M1.6,5.2 C0.2,3.6 0.8,0.8 3,0.8 C5.2,0.8 5.8,3.6 4.4,5.2"/><path d="M6.6,5.2 C5.2,3.6 5.8,0.8 8,0.8 C10.2,0.8 10.8,3.6 9.4,5.2"/><path d="M0.3,5.5 H10.7"/></g></svg></div>
</div>
<div class="reg" style="left:920px;top:542.33px;width:135px;height:39px">
<svg class="abs" style="left:0;top:0" width="135" height="39"><rect x="0" y="24.0" width="135" height="1" fill="#8fabcf"/><path d="M0.5 22.0V27.0M1.5 22.3V26.7M2.5 22.7V26.3M3.5 22.1V26.9M4.5 22.0V27.0M5.5 21.6V27.4M6.5 22.5V26.5M7.5 22.5V26.5M8.5 22.4V26.6M9.5 21.6V27.4M10.5 22.5V26.5M11.5 21.9V27.1M12.5 22.8V26.2M13.5 22.7V26.3M14.5 21.8V27.2M15.5 22.1V26.9M16.5 22.6V26.4M17.5 22.1V26.9M18.5 21.4V27.6M19.5 22.2V26.8M20.5 22.0V27.0M21.5 22.2V26.8M22.5 22.1V26.9M23.5 22.7V26.3M24.5 21.5V27.5M25.5 22.0V27.0M26.5 22.3V26.7M27.5 22.4V26.6M28.5 22.5V26.5M29.5 21.5V27.5M30.5 21.6V27.4M31.5 22.3V26.7M32.5 21.9V27.1M33.5 22.0V27.0M34.5 22.5V26.5M35.5 22.8V26.2M36.5 21.7V27.3M37.5 22.6V26.4M38.5 22.0V27.0M39.5 22.8V26.2M40.5 22.8V26.2M41.5 22.6V26.4M42.5 21.9V27.1M43.5 21.9V27.1M44.5 21.4V27.6M45.5 21.8V27.2M46.5 22.0V27.0M47.5 22.8V26.2M48.5 21.4V27.6M49.5 22.1V26.9M50.5 21.6V27.4M51.5 22.7V26.3M52.5 21.6V27.4M53.5 22.1V26.9M54.5 22.5V26.5M55.5 22.2V26.8M56.5 22.7V26.3M57.5 22.0V27.0M58.5 22.5V26.5M59.5 21.8V27.2M60.5 22.6V26.4M61.5 21.8V27.2M62.5 21.9V27.1M63.5 21.8V27.2M64.5 21.4V27.6M65.5 22.4V26.6M66.5 21.8V27.2M67.5 22.2V26.8M68.5 21.5V27.5M69.5 21.6V27.4M70.5 21.7V27.3M71.5 21.9V27.1M72.5 22.4V26.6M73.5 21.5V27.5M74.5 21.4V27.6M75.5 21.4V27.6M76.5 22.3V26.7M77.5 21.6V27.4M78.5 21.8V27.2M79.5 21.6V27.4M80.5 21.6V27.4M81.5 22.1V26.9M82.5 22.2V26.8M83.5 21.7V27.3M84.5 21.9V27.1M85.5 22.0V27.0M86.5 21.5V27.5M87.5 22.8V26.2M88.5 22.8V26.2M89.5 22.1V26.9M90.5 22.7V26.3M91.5 21.6V27.4M92.5 22.7V26.3M93.5 21.5V27.5M94.5 22.5V26.5M95.5 22.6V26.4M96.5 21.7V27.3M97.5 21.8V27.2M98.5 22.2V26.8M99.5 21.9V27.1M100.5 22.0V27.0M101.5 21.4V27.6M102.5 22.1V26.9M103.5 22.0V27.0M104.5 22.1V26.9M105.5 22.2V26.8M106.5 21.8V27.2M107.5 22.6V26.4M108.5 21.8V27.2M109.5 21.5V27.5M110.5 21.7V27.3M111.5 22.0V27.0M112.5 22.3V26.7M113.5 22.7V26.3M114.5 22.7V26.3M115.5 22.0V27.0M116.5 21.5V27.5M117.5 21.5V27.5M118.5 22.5V26.5M119.5 21.7V27.3M120.5 21.6V27.4M121.5 22.1V26.9M122.5 21.6V27.4M123.5 22.5V26.5M124.5 22.3V26.7M125.5 22.1V26.9M126.5 21.8V27.2M127.5 22.2V26.8M128.5 22.4V26.6M129.5 21.5V27.5M130.5 22.2V26.8M131.5 22.2V26.8M132.5 22.5V26.5M133.5 22.1V26.9M134.5 21.8V27.2" stroke="#a5bcd7" stroke-width="1"/></svg>
<div class="rt">140 Anaconda Orchestra Fm 06.2<svg width="10.5" height="6" viewBox="0 0 11 6" style="margin-left:3.2px;vertical-align:-0.5px"><g fill="none" stroke="#dfe7f0" stroke-width="0.85"><path d="M1.6,5.2 C0.2,3.6 0.8,0.8 3,0.8 C5.2,0.8 5.8,3.6 4.4,5.2"/><path d="M6.6,5.2 C5.2,3.6 5.8,0.8 8,0.8 C10.2,0.8 10.8,3.6 9.4,5.2"/><path d="M0.3,5.5 H10.7"/></g></svg></div>
</div>
<div class="reg" style="left:1056px;top:542.33px;width:118.5px;height:39px">
<svg class="abs" style="left:0;top:0" width="118" height="39"><rect x="0" y="24.0" width="118" height="1" fill="#8fabcf"/><path d="M0.5 22.3V26.7M1.5 21.8V27.2M2.5 22.1V26.9M3.5 22.8V26.2M4.5 21.4V27.6M5.5 22.4V26.6M6.5 22.0V27.0M7.5 21.4V27.6M8.5 22.5V26.5M9.5 22.7V26.3M10.5 22.5V26.5M11.5 22.6V26.4M12.5 21.6V27.4M13.5 22.1V26.9M14.5 22.7V26.3M15.5 22.4V26.6M16.5 22.1V26.9M17.5 22.6V26.4M18.5 22.4V26.6M19.5 21.5V27.5M20.5 22.2V26.8M21.5 22.5V26.5M22.5 21.9V27.1M23.5 22.6V26.4M24.5 22.1V26.9M25.5 21.9V27.1M26.5 22.7V26.3M27.5 22.0V27.0M28.5 22.4V26.6M29.5 21.7V27.3M30.5 21.9V27.1M31.5 21.5V27.5M32.5 21.9V27.1M33.5 22.5V26.5M34.5 22.5V26.5M35.5 21.8V27.2M36.5 21.6V27.4M37.5 22.7V26.3M38.5 22.2V26.8M39.5 22.4V26.6M40.5 22.1V26.9M41.5 21.5V27.5M42.5 22.0V27.0M43.5 21.7V27.3M44.5 21.7V27.3M45.5 22.4V26.6M46.5 21.9V27.1M47.5 22.3V26.7M48.5 22.1V26.9M49.5 22.0V27.0M50.5 21.8V27.2M51.5 22.6V26.4M52.5 21.6V27.4M53.5 22.6V26.4M54.5 22.4V26.6M55.5 21.6V27.4M56.5 21.4V27.6M57.5 22.3V26.7M58.5 21.4V27.6M59.5 22.8V26.2M60.5 21.4V27.6M61.5 22.5V26.5M62.5 22.8V26.2M63.5 21.7V27.3M64.5 22.6V26.4M65.5 21.7V27.3M66.5 22.8V26.2M67.5 22.6V26.4M68.5 22.3V26.7M69.5 22.7V26.3M70.5 22.1V26.9M71.5 22.3V26.7M72.5 21.7V27.3M73.5 22.1V26.9M74.5 21.4V27.6M75.5 21.6V27.4M76.5 22.6V26.4M77.5 21.5V27.5M78.5 21.5V27.5M79.5 22.0V27.0M80.5 22.0V27.0M81.5 22.7V26.3M82.5 22.6V26.4M83.5 22.8V26.2M84.5 23.0V26.0M85.5 22.7V26.3M86.5 23.1V25.9M87.5 22.8V26.2M88.5 23.1V25.9M89.5 23.1V25.9M90.5 23.7V25.3M91.5 23.4V25.6M92.5 23.8V25.2M93.5 23.8V25.2M94.5 24.0V25.0M95.5 24.0V25.0M96.5 24.0V25.0M97.5 24.0V25.0M98.5 24.0V25.0M99.5 24.0V25.0M100.5 24.0V25.0M101.5 24.0V25.0M102.5 24.0V25.0M103.5 24.0V25.0M104.5 24.0V25.0M105.5 24.0V25.0M106.5 24.0V25.0M107.5 24.0V25.0M108.5 24.0V25.0M109.5 24.0V25.0M110.5 24.0V25.0M111.5 24.0V25.0M112.5 24.0V25.0M113.5 24.0V25.0M114.5 24.0V25.0M115.5 24.0V25.0M116.5 24.0V25.0M117.5 23.9V25.1" stroke="#a5bcd7" stroke-width="1"/></svg>
<div class="rt">140 Anaconda Orchestra Fm 07</div>
</div>
<div class="reg" style="left:240px;top:583.00px;width:135px;height:39px">
<svg class="abs" style="left:0;top:0" width="135" height="39"><rect x="0" y="24.0" width="135" height="1" fill="#8fabcf"/><path d="M0.5 23.9V25.1M1.5 23.9V25.1M2.5 23.9V25.1M3.5 23.9V25.1M4.5 23.9V25.1M5.5 23.9V25.1M6.5 23.9V25.1M7.5 23.9V25.1M8.5 21.2V27.8M9.5 21.3V27.7M10.5 21.8V27.2M11.5 23.9V25.1M12.5 23.9V25.1M13.5 23.9V25.1M14.5 23.9V25.1M15.5 23.9V25.1M16.5 23.9V25.1M17.5 23.9V25.1M18.5 23.9V25.1M19.5 22.1V26.9M20.5 21.0V28.0M21.5 22.6V26.4M22.5 22.2V26.8M23.5 21.3V27.7M24.5 23.0V26.0M25.5 20.7V28.3M26.5 21.6V27.4M27.5 21.4V27.6M28.5 23.9V25.1M29.5 23.9V25.1M30.5 23.9V25.1M31.5 23.9V25.1M32.5 23.9V25.1M33.5 23.9V25.1M34.5 23.9V25.1M35.5 23.9V25.1M36.5 23.9V25.1M37.5 23.9V25.1M38.5 23.9V25.1M39.5 23.9V25.1M40.5 23.9V25.1M41.5 23.9V25.1M42.5 23.9V25.1M43.5 23.9V25.1M44.5 23.9V25.1M45.5 23.9V25.1M46.5 23.9V25.1M47.5 23.9V25.1M48.5 23.9V25.1M49.5 23.9V25.1M50.5 23.9V25.1M51.5 23.9V25.1M52.5 23.9V25.1M53.5 23.9V25.1M54.5 23.9V25.1M55.5 23.9V25.1M56.5 23.9V25.1M57.5 23.9V25.1M58.5 23.9V25.1M59.5 23.9V25.1M60.5 23.9V25.1M61.5 23.9V25.1M62.5 23.9V25.1M63.5 23.9V25.1M64.5 23.9V25.1M65.5 23.9V25.1M66.5 23.9V25.1M67.5 23.9V25.1M68.5 23.9V25.1M69.5 23.7V25.3M70.5 23.3V25.7M71.5 23.8V25.2M72.5 23.5V25.5M73.5 23.2V25.8M74.5 22.0V27.0M75.5 23.6V25.4M76.5 23.1V25.9M77.5 22.9V26.1M78.5 23.9V25.1M79.5 23.9V25.1M80.5 23.9V25.1M81.5 23.9V25.1M82.5 23.9V25.1M83.5 23.9V25.1M84.5 23.9V25.1M85.5 23.9V25.1M86.5 23.9V25.1M87.5 23.9V25.1M88.5 23.9V25.1M89.5 23.9V25.1M90.5 23.9V25.1M91.5 23.9V25.1M92.5 23.9V25.1M93.5 23.9V25.1M94.5 23.9V25.1M95.5 23.9V25.1M96.5 23.9V25.1M97.5 23.9V25.1M98.5 21.8V27.2M99.5 23.8V25.2M100.5 22.5V26.5M101.5 23.8V25.2M102.5 22.2V26.8M103.5 22.0V27.0M104.5 23.9V25.1M105.5 23.9V25.1M106.5 23.9V25.1M107.5 23.9V25.1M108.5 23.9V25.1M109.5 23.9V25.1M110.5 23.9V25.1M111.5 23.9V25.1M112.5 23.9V25.1M113.5 23.9V25.1M114.5 23.9V25.1M115.5 23.9V25.1M116.5 23.9V25.1M117.5 23.9V25.1M118.5 23.9V25.1M119.5 23.9V25.1M120.5 23.9V25.1M121.5 23.9V25.1M122.5 23.9V25.1M123.5 23.9V25.1M124.5 21.0V28.0M125.5 20.9V28.1M126.5 22.5V26.5M127.5 20.8V28.2M128.5 22.9V26.1M129.5 22.1V26.9M130.5 23.9V25.1M131.5 23.9V25.1M132.5 23.9V25.1M133.5 23.9V25.1M134.5 23.9V25.1" stroke="#a5bcd7" stroke-width="1"/></svg>
<div class="rt">140 Bozo Sequence Fm 01.1<svg width="10.5" height="6" viewBox="0 0 11 6" style="margin-left:3.2px;vertical-align:-0.5px"><g fill="none" stroke="#dfe7f0" stroke-width="0.85"><path d="M1.6,5.2 C0.2,3.6 0.8,0.8 3,0.8 C5.2,0.8 5.8,3.6 4.4,5.2"/><path d="M6.6,5.2 C5.2,3.6 5.8,0.8 8,0.8 C10.2,0.8 10.8,3.6 9.4,5.2"/><path d="M0.3,5.5 H10.7"/></g></svg></div>
</div>
<div class="reg" style="left:376px;top:583.00px;width:135px;height:39px">
<svg class="abs" style="left:0;top:0" width="135" height="39"><rect x="0" y="24.0" width="135" height="1" fill="#8fabcf"/><path d="M0.5 23.9V25.1M1.5 23.9V25.1M2.5 23.9V25.1M3.5 22.9V26.1M4.5 23.8V25.2M5.5 21.3V27.7M6.5 23.6V25.4M7.5 21.4V27.6M8.5 23.9V25.1M9.5 23.0V26.0M10.5 23.6V25.4M11.5 23.4V25.6M12.5 22.3V26.7M13.5 21.5V27.5M14.5 21.6V27.4M15.5 23.9V25.1M16.5 23.9V25.1M17.5 23.9V25.1M18.5 23.9V25.1M19.5 20.9V28.1M20.5 23.3V25.7M21.5 23.7V25.3M22.5 23.9V25.1M23.5 23.9V25.1M24.5 23.9V25.1M25.5 23.9V25.1M26.5 23.9V25.1M27.5 23.9V25.1M28.5 23.9V25.1M29.5 23.9V25.1M30.5 23.9V25.1M31.5 23.5V25.5M32.5 21.2V27.8M33.5 23.4V25.6M34.5 22.9V26.1M35.5 21.1V27.9M36.5 23.6V25.4M37.5 20.8V28.2M38.5 21.6V27.4M39.5 23.7V25.3M40.5 21.8V27.2M41.5 23.2V25.8M42.5 22.4V26.6M43.5 23.2V25.8M44.5 22.6V26.4M45.5 20.8V28.2M46.5 23.9V25.1M47.5 22.5V26.5M48.5 23.6V25.4M49.5 23.4V25.6M50.5 22.0V27.0M51.5 20.9V28.1M52.5 23.3V25.7M53.5 21.9V27.1M54.5 23.9V25.1M55.5 23.9V25.1M56.5 23.9V25.1M57.5 23.9V25.1M58.5 23.9V25.1M59.5 23.9V25.1M60.5 23.9V25.1M61.5 23.9V25.1M62.5 23.9V25.1M63.5 23.9V25.1M64.5 23.9V25.1M65.5 23.9V25.1M66.5 23.9V25.1M67.5 23.9V25.1M68.5 23.9V25.1M69.5 23.9V25.1M70.5 23.9V25.1M71.5 23.9V25.1M72.5 23.9V25.1M73.5 23.9V25.1M74.5 23.9V25.1M75.5 23.2V25.8M76.5 20.9V28.1M77.5 22.3V26.7M78.5 23.9V25.1M79.5 23.6V25.4M80.5 23.4V25.6M81.5 23.6V25.4M82.5 23.6V25.4M83.5 22.3V26.7M84.5 21.2V27.8M85.5 22.2V26.8M86.5 23.9V25.1M87.5 22.7V26.3M88.5 23.8V25.2M89.5 21.4V27.6M90.5 23.9V25.1M91.5 23.9V25.1M92.5 23.9V25.1M93.5 23.9V25.1M94.5 23.9V25.1M95.5 23.9V25.1M96.5 23.9V25.1M97.5 23.9V25.1M98.5 23.1V25.9M99.5 22.3V26.7M100.5 22.6V26.4M101.5 22.5V26.5M102.5 23.8V25.2M103.5 23.1V25.9M104.5 23.1V25.9M105.5 23.9V25.1M106.5 23.9V25.1M107.5 23.9V25.1M108.5 23.9V25.1M109.5 23.9V25.1M110.5 23.9V25.1M111.5 23.9V25.1M112.5 23.1V25.9M113.5 23.6V25.4M114.5 23.0V26.0M115.5 22.4V26.6M116.5 23.9V25.1M117.5 23.9V25.1M118.5 23.9V25.1M119.5 23.9V25.1M120.5 23.9V25.1M121.5 23.9V25.1M122.5 23.9V25.1M123.5 23.9V25.1M124.5 21.3V27.7M125.5 23.1V25.9M126.5 23.9V25.1M127.5 23.9V25.1M128.5 23.9V25.1M129.5 23.9V25.1M130.5 23.9V25.1M131.5 23.9V25.1M132.5 23.9V25.1M133.5 23.9V25.1M134.5 23.9V25.1" stroke="#a5bcd7" stroke-width="1"/></svg>
<div class="rt">140 Bozo Sequence Fm 02.1<svg width="10.5" height="6" viewBox="0 0 11 6" style="margin-left:3.2px;vertical-align:-0.5px"><g fill="none" stroke="#dfe7f0" stroke-width="0.85"><path d="M1.6,5.2 C0.2,3.6 0.8,0.8 3,0.8 C5.2,0.8 5.8,3.6 4.4,5.2"/><path d="M6.6,5.2 C5.2,3.6 5.8,0.8 8,0.8 C10.2,0.8 10.8,3.6 9.4,5.2"/><path d="M0.3,5.5 H10.7"/></g></svg></div>
</div>
<div class="reg" style="left:512px;top:583.00px;width:135px;height:39px">
<svg class="abs" style="left:0;top:0" width="135" height="39"><rect x="0" y="24.0" width="135" height="1" fill="#8fabcf"/><path d="M0.5 23.9V25.1M1.5 23.9V25.1M2.5 23.9V25.1M3.5 23.9V25.1M4.5 23.9V25.1M5.5 23.9V25.1M6.5 23.9V25.1M7.5 23.9V25.1M8.5 23.9V25.1M9.5 23.9V25.1M10.5 23.9V25.1M11.5 23.9V25.1M12.5 23.1V25.9M13.5 23.0V26.0M14.5 22.3V26.7M15.5 22.3V26.7M16.5 23.8V25.2M17.5 23.8V25.2M18.5 21.8V27.2M19.5 21.3V27.7M20.5 23.8V25.2M21.5 23.9V25.1M22.5 23.9V25.1M23.5 22.1V26.9M24.5 23.3V25.7M25.5 23.3V25.7M26.5 22.4V26.6M27.5 23.8V25.2M28.5 22.2V26.8M29.5 21.2V27.8M30.5 23.0V26.0M31.5 22.1V26.9M32.5 23.8V25.2M33.5 22.1V26.9M34.5 22.1V26.9M35.5 23.9V25.1M36.5 23.9V25.1M37.5 23.9V25.1M38.5 23.9V25.1M39.5 23.9V25.1M40.5 23.9V25.1M41.5 23.9V25.1M42.5 23.9V25.1M43.5 23.9V25.1M44.5 23.9V25.1M45.5 23.9V25.1M46.5 23.0V26.0M47.5 23.5V25.5M48.5 22.3V26.7M49.5 23.2V25.8M50.5 23.9V25.1M51.5 23.9V25.1M52.5 23.0V26.0M53.5 22.9V26.1M54.5 23.6V25.4M55.5 23.7V25.3M56.5 23.3V25.7M57.5 21.1V27.9M58.5 23.9V25.1M59.5 23.9V25.1M60.5 23.9V25.1M61.5 22.5V26.5M62.5 23.5V25.5M63.5 21.3V27.7M64.5 23.9V25.1M65.5 23.9V25.1M66.5 23.9V25.1M67.5 23.9V25.1M68.5 23.9V25.1M69.5 23.9V25.1M70.5 23.9V25.1M71.5 23.9V25.1M72.5 23.9V25.1M73.5 23.9V25.1M74.5 23.5V25.5M75.5 22.4V26.6M76.5 23.1V25.9M77.5 23.6V25.4M78.5 23.9V25.1M79.5 23.2V25.8M80.5 23.7V25.3M81.5 22.9V26.1M82.5 23.0V26.0M83.5 23.5V25.5M84.5 20.8V28.2M85.5 23.3V25.7M86.5 23.9V25.1M87.5 23.9V25.1M88.5 22.4V26.6M89.5 23.4V25.6M90.5 21.3V27.7M91.5 23.3V25.7M92.5 22.2V26.8M93.5 20.8V28.2M94.5 23.9V25.1M95.5 23.9V25.1M96.5 23.9V25.1M97.5 23.9V25.1M98.5 23.9V25.1M99.5 23.9V25.1M100.5 23.9V25.1M101.5 23.9V25.1M102.5 23.9V25.1M103.5 23.9V25.1M104.5 23.9V25.1M105.5 23.9V25.1M106.5 23.9V25.1M107.5 23.9V25.1M108.5 23.9V25.1M109.5 23.9V25.1M110.5 23.9V25.1M111.5 23.9V25.1M112.5 23.9V25.1M113.5 20.8V28.2M114.5 23.4V25.6M115.5 23.2V25.8M116.5 20.9V28.1M117.5 21.7V27.3M118.5 23.0V26.0M119.5 22.9V26.1M120.5 23.2V25.8M121.5 23.0V26.0M122.5 20.8V28.2M123.5 23.3V25.7M124.5 23.1V25.9M125.5 23.1V25.9M126.5 21.5V27.5M127.5 21.6V27.4M128.5 23.4V25.6M129.5 23.7V25.3M130.5 21.9V27.1M131.5 23.1V25.9M132.5 23.3V25.7M133.5 23.6V25.4M134.5 21.6V27.4" stroke="#a5bcd7" stroke-width="1"/></svg>
<div class="rt">140 Bozo Sequence Fm 03.3<svg width="10.5" height="6" viewBox="0 0 11 6" style="margin-left:3.2px;vertical-align:-0.5px"><g fill="none" stroke="#dfe7f0" stroke-width="0.85"><path d="M1.6,5.2 C0.2,3.6 0.8,0.8 3,0.8 C5.2,0.8 5.8,3.6 4.4,5.2"/><path d="M6.6,5.2 C5.2,3.6 5.8,0.8 8,0.8 C10.2,0.8 10.8,3.6 9.4,5.2"/><path d="M0.3,5.5 H10.7"/></g></svg></div>
</div>
<div class="reg" style="left:648px;top:583.00px;width:135px;height:39px">
<svg class="abs" style="left:0;top:0" width="135" height="39"><rect x="0" y="24.0" width="135" height="1" fill="#8fabcf"/><path d="M0.5 23.9V25.1M1.5 23.9V25.1M2.5 23.9V25.1M3.5 23.2V25.8M4.5 23.4V25.6M5.5 23.0V26.0M6.5 22.3V26.7M7.5 23.6V25.4M8.5 22.9V26.1M9.5 21.9V27.1M10.5 21.3V27.7M11.5 23.3V25.7M12.5 23.8V25.2M13.5 22.0V27.0M14.5 21.5V27.5M15.5 21.8V27.2M16.5 23.5V25.5M17.5 23.1V25.9M18.5 22.1V26.9M19.5 23.6V25.4M20.5 22.5V26.5M21.5 23.2V25.8M22.5 20.8V28.2M23.5 22.6V26.4M24.5 23.7V25.3M25.5 23.7V25.3M26.5 21.5V27.5M27.5 23.2V25.8M28.5 21.1V27.9M29.5 23.7V25.3M30.5 23.2V25.8M31.5 22.1V26.9M32.5 23.0V26.0M33.5 23.9V25.1M34.5 23.9V25.1M35.5 23.9V25.1M36.5 20.8V28.2M37.5 23.0V26.0M38.5 23.3V25.7M39.5 23.9V25.1M40.5 23.6V25.4M41.5 23.0V26.0M42.5 23.6V25.4M43.5 23.4V25.6M44.5 22.6V26.4M45.5 21.7V27.3M46.5 23.8V25.2M47.5 23.7V25.3M48.5 23.8V25.2M49.5 23.6V25.4M50.5 23.0V26.0M51.5 21.2V27.8M52.5 21.8V27.2M53.5 23.5V25.5M54.5 22.1V26.9M55.5 22.3V26.7M56.5 23.2V25.8M57.5 23.9V25.1M58.5 23.9V25.1M59.5 23.9V25.1M60.5 23.9V25.1M61.5 23.9V25.1M62.5 22.1V26.9M63.5 21.0V28.0M64.5 23.0V26.0M65.5 21.4V27.6M66.5 23.4V25.6M67.5 23.1V25.9M68.5 23.0V26.0M69.5 23.0V26.0M70.5 23.8V25.2M71.5 23.9V25.1M72.5 23.9V25.1M73.5 23.9V25.1M74.5 23.4V25.6M75.5 23.9V25.1M76.5 20.9V28.1M77.5 23.2V25.8M78.5 21.4V27.6M79.5 21.3V27.7M80.5 22.5V26.5M81.5 22.1V26.9M82.5 23.9V25.1M83.5 23.9V25.1M84.5 23.9V25.1M85.5 23.9V25.1M86.5 23.9V25.1M87.5 23.9V25.1M88.5 23.9V25.1M89.5 23.9V25.1M90.5 22.6V26.4M91.5 23.3V25.7M92.5 22.0V27.0M93.5 21.2V27.8M94.5 23.4V25.6M95.5 23.1V25.9M96.5 23.6V25.4M97.5 22.9V26.1M98.5 23.2V25.8M99.5 23.9V25.1M100.5 23.3V25.7M101.5 22.9V26.1M102.5 23.4V25.6M103.5 23.7V25.3M104.5 23.3V25.7M105.5 23.4V25.6M106.5 21.7V27.3M107.5 21.5V27.5M108.5 23.2V25.8M109.5 23.1V25.9M110.5 22.0V27.0M111.5 22.2V26.8M112.5 23.7V25.3M113.5 23.2V25.8M114.5 22.5V26.5M115.5 22.6V26.4M116.5 23.0V26.0M117.5 23.6V25.4M118.5 23.5V25.5M119.5 23.9V25.1M120.5 23.9V25.1M121.5 23.9V25.1M122.5 23.9V25.1M123.5 23.9V25.1M124.5 23.9V25.1M125.5 23.9V25.1M126.5 23.9V25.1M127.5 23.4V25.6M128.5 21.5V27.5M129.5 22.9V26.1M130.5 22.7V26.3M131.5 23.5V25.5M132.5 23.2V25.8M133.5 20.7V28.3M134.5 23.3V25.7" stroke="#a5bcd7" stroke-width="1"/></svg>
<div class="rt">140 Bozo Sequence Fm 04.5<svg width="10.5" height="6" viewBox="0 0 11 6" style="margin-left:3.2px;vertical-align:-0.5px"><g fill="none" stroke="#dfe7f0" stroke-width="0.85"><path d="M1.6,5.2 C0.2,3.6 0.8,0.8 3,0.8 C5.2,0.8 5.8,3.6 4.4,5.2"/><path d="M6.6,5.2 C5.2,3.6 5.8,0.8 8,0.8 C10.2,0.8 10.8,3.6 9.4,5.2"/><path d="M0.3,5.5 H10.7"/></g></svg></div>
</div>
<div class="reg" style="left:784px;top:583.00px;width:135px;height:39px">
<svg class="abs" style="left:0;top:0" width="135" height="39"><rect x="0" y="24.0" width="135" height="1" fill="#8fabcf"/><path d="M0.5 23.9V25.1M1.5 20.9V28.1M2.5 23.7V25.3M3.5 21.3V27.7M4.5 22.6V26.4M5.5 23.6V25.4M6.5 22.1V26.9M7.5 23.8V25.2M8.5 23.6V25.4M9.5 20.8V28.2M10.5 23.7V25.3M11.5 21.8V27.2M12.5 23.6V25.4M13.5 20.7V28.3M14.5 23.5V25.5M15.5 20.8V28.2M16.5 21.3V27.7M17.5 23.9V25.1M18.5 23.9V25.1M19.5 23.9V25.1M20.5 23.9V25.1M21.5 23.9V25.1M22.5 23.9V25.1M23.5 23.9V25.1M24.5 23.9V25.1M25.5 23.5V25.5M26.5 22.9V26.1M27.5 23.0V26.0M28.5 23.5V25.5M29.5 21.4V27.6M30.5 21.7V27.3M31.5 22.4V26.6M32.5 23.6V25.4M33.5 23.2V25.8M34.5 21.7V27.3M35.5 23.7V25.3M36.5 21.0V28.0M37.5 23.2V25.8M38.5 22.5V26.5M39.5 21.0V28.0M40.5 23.9V25.1M41.5 23.9V25.1M42.5 23.9V25.1M43.5 23.9V25.1M44.5 23.9V25.1M45.5 23.9V25.1M46.5 23.9V25.1M47.5 23.9V25.1M48.5 23.9V25.1M49.5 23.9V25.1M50.5 23.9V25.1M51.5 23.9V25.1M52.5 23.9V25.1M53.5 23.9V25.1M54.5 23.9V25.1M55.5 23.9V25.1M56.5 23.9V25.1M57.5 23.9V25.1M58.5 23.9V25.1M59.5 23.9V25.1M60.5 23.8V25.2M61.5 20.9V28.1M62.5 22.3V26.7M63.5 23.4V25.6M64.5 23.4V25.6M65.5 22.9V26.1M66.5 20.7V28.3M67.5 22.3V26.7M68.5 21.9V27.1M69.5 23.2V25.8M70.5 23.1V25.9M71.5 23.3V25.7M72.5 22.1V26.9M73.5 23.0V26.0M74.5 23.3V25.7M75.5 23.9V25.1M76.5 23.9V25.1M77.5 23.9V25.1M78.5 23.9V25.1M79.5 23.9V25.1M80.5 23.9V25.1M81.5 23.9V25.1M82.5 23.9V25.1M83.5 23.2V25.8M84.5 22.0V27.0M85.5 23.5V25.5M86.5 23.5V25.5M87.5 22.6V26.4M88.5 21.1V27.9M89.5 23.3V25.7M90.5 23.1V25.9M91.5 21.9V27.1M92.5 22.5V26.5M93.5 23.4V25.6M94.5 21.4V27.6M95.5 21.2V27.8M96.5 23.4V25.6M97.5 23.6V25.4M98.5 22.0V27.0M99.5 21.2V27.8M100.5 23.9V25.1M101.5 21.6V27.4M102.5 22.9V26.1M103.5 21.9V27.1M104.5 20.9V28.1M105.5 23.9V25.1M106.5 21.9V27.1M107.5 23.1V25.9M108.5 23.1V25.9M109.5 23.6V25.4M110.5 23.8V25.2M111.5 23.8V25.2M112.5 23.6V25.4M113.5 21.6V27.4M114.5 23.5V25.5M115.5 23.9V25.1M116.5 22.6V26.4M117.5 21.3V27.7M118.5 20.8V28.2M119.5 20.9V28.1M120.5 23.0V26.0M121.5 21.8V27.2M122.5 23.4V25.6M123.5 20.7V28.3M124.5 21.1V27.9M125.5 21.6V27.4M126.5 23.6V25.4M127.5 22.5V26.5M128.5 21.2V27.8M129.5 22.3V26.7M130.5 23.3V25.7M131.5 23.3V25.7M132.5 22.2V26.8M133.5 21.0V28.0M134.5 23.3V25.7" stroke="#a5bcd7" stroke-width="1"/></svg>
<div class="rt">140 Bozo Sequence Fm 05.5<svg width="10.5" height="6" viewBox="0 0 11 6" style="margin-left:3.2px;vertical-align:-0.5px"><g fill="none" stroke="#dfe7f0" stroke-width="0.85"><path d="M1.6,5.2 C0.2,3.6 0.8,0.8 3,0.8 C5.2,0.8 5.8,3.6 4.4,5.2"/><path d="M6.6,5.2 C5.2,3.6 5.8,0.8 8,0.8 C10.2,0.8 10.8,3.6 9.4,5.2"/><path d="M0.3,5.5 H10.7"/></g></svg></div>
</div>
<div class="reg" style="left:920px;top:583.00px;width:135px;height:39px">
<svg class="abs" style="left:0;top:0" width="135" height="39"><rect x="0" y="24.0" width="135" height="1" fill="#8fabcf"/><path d="M0.5 23.9V25.1M1.5 23.9V25.1M2.5 23.9V25.1M3.5 23.9V25.1M4.5 23.9V25.1M5.5 23.9V25.1M6.5 21.2V27.8M7.5 21.7V27.3M8.5 21.6V27.4M9.5 21.3V27.7M10.5 23.3V25.7M11.5 23.3V25.7M12.5 22.9V26.1M13.5 23.0V26.0M14.5 23.6V25.4M15.5 23.5V25.5M16.5 23.3V25.7M17.5 22.5V26.5M18.5 23.2V25.8M19.5 22.9V26.1M20.5 22.1V26.9M21.5 23.3V25.7M22.5 23.1V25.9M23.5 21.1V27.9M24.5 23.4V25.6M25.5 23.3V25.7M26.5 23.1V25.9M27.5 23.7V25.3M28.5 23.9V25.1M29.5 23.9V25.1M30.5 23.0V26.0M31.5 21.9V27.1M32.5 22.5V26.5M33.5 23.9V25.1M34.5 23.9V25.1M35.5 23.9V25.1M36.5 23.9V25.1M37.5 23.9V25.1M38.5 23.0V26.0M39.5 22.0V27.0M40.5 22.7V26.3M41.5 20.8V28.2M42.5 21.1V27.9M43.5 23.4V25.6M44.5 21.5V27.5M45.5 20.8V28.2M46.5 23.1V25.9M47.5 21.6V27.4M48.5 23.6V25.4M49.5 22.6V26.4M50.5 23.8V25.2M51.5 23.7V25.3M52.5 23.0V26.0M53.5 23.5V25.5M54.5 23.9V25.1M55.5 23.9V25.1M56.5 22.1V26.9M57.5 22.4V26.6M58.5 21.7V27.3M59.5 23.1V25.9M60.5 23.6V25.4M61.5 21.8V27.2M62.5 21.6V27.4M63.5 20.8V28.2M64.5 23.2V25.8M65.5 21.9V27.1M66.5 23.1V25.9M67.5 23.6V25.4M68.5 23.9V25.1M69.5 23.9V25.1M70.5 23.9V25.1M71.5 23.9V25.1M72.5 23.9V25.1M73.5 23.9V25.1M74.5 23.9V25.1M75.5 23.9V25.1M76.5 23.9V25.1M77.5 23.9V25.1M78.5 23.9V25.1M79.5 23.9V25.1M80.5 23.9V25.1M81.5 23.0V26.0M82.5 21.6V27.4M83.5 23.3V25.7M84.5 22.9V26.1M85.5 23.9V25.1M86.5 20.8V28.2M87.5 23.0V26.0M88.5 23.4V25.6M89.5 21.1V27.9M90.5 23.0V26.0M91.5 23.4V25.6M92.5 23.0V26.0M93.5 23.0V26.0M94.5 21.2V27.8M95.5 23.9V25.1M96.5 23.2V25.8M97.5 23.3V25.7M98.5 23.5V25.5M99.5 21.0V28.0M100.5 21.8V27.2M101.5 22.9V26.1M102.5 23.9V25.1M103.5 23.9V25.1M104.5 21.3V27.7M105.5 23.1V25.9M106.5 23.8V25.2M107.5 23.1V25.9M108.5 21.3V27.7M109.5 23.5V25.5M110.5 22.0V27.0M111.5 23.4V25.6M112.5 23.4V25.6M113.5 23.0V26.0M114.5 23.3V25.7M115.5 22.3V26.7M116.5 22.3V26.7M117.5 23.1V25.9M118.5 22.2V26.8M119.5 23.0V26.0M120.5 23.4V25.6M121.5 23.5V25.5M122.5 23.8V25.2M123.5 21.8V27.2M124.5 23.4V25.6M125.5 21.9V27.1M126.5 23.1V25.9M127.5 23.6V25.4M128.5 20.7V28.3M129.5 23.9V25.1M130.5 23.2V25.8M131.5 23.0V26.0M132.5 22.1V26.9M133.5 23.4V25.6M134.5 23.9V25.1" stroke="#a5bcd7" stroke-width="1"/></svg>
<div class="rt">140 Bozo Sequence Fm 06.7<svg width="10.5" height="6" viewBox="0 0 11 6" style="margin-left:3.2px;vertical-align:-0.5px"><g fill="none" stroke="#dfe7f0" stroke-width="0.85"><path d="M1.6,5.2 C0.2,3.6 0.8,0.8 3,0.8 C5.2,0.8 5.8,3.6 4.4,5.2"/><path d="M6.6,5.2 C5.2,3.6 5.8,0.8 8,0.8 C10.2,0.8 10.8,3.6 9.4,5.2"/><path d="M0.3,5.5 H10.7"/></g></svg></div>
</div>
<div class="reg" style="left:1056px;top:583.00px;width:118.5px;height:39px">
<svg class="abs" style="left:0;top:0" width="118" height="39"><rect x="0" y="24.0" width="118" height="1" fill="#8fabcf"/><path d="M0.5 23.9V25.1M1.5 21.1V27.9M2.5 22.3V26.7M3.5 23.0V26.0M4.5 23.6V25.4M5.5 20.7V28.3M6.5 23.2V25.8M7.5 23.4V25.6M8.5 22.5V26.5M9.5 23.6V25.4M10.5 23.9V25.1M11.5 23.9V25.1M12.5 23.9V25.1M13.5 23.9V25.1M14.5 23.9V25.1M15.5 23.9V25.1M16.5 23.9V25.1M17.5 23.9V25.1M18.5 20.9V28.1M19.5 22.4V26.6M20.5 22.6V26.4M21.5 22.4V26.6M22.5 23.9V25.1M23.5 23.9V25.1M24.5 23.9V25.1M25.5 23.9V25.1M26.5 23.9V25.1M27.5 23.9V25.1M28.5 23.9V25.1M29.5 23.9V25.1M30.5 23.9V25.1M31.5 23.9V25.1M32.5 23.9V25.1M33.5 23.9V25.1M34.5 23.1V25.9M35.5 23.0V26.0M36.5 23.4V25.6M37.5 23.7V25.3M38.5 23.9V25.1M39.5 23.3V25.7M40.5 23.0V26.0M41.5 21.6V27.4M42.5 23.8V25.2M43.5 21.0V28.0M44.5 20.8V28.2M45.5 21.9V27.1M46.5 21.2V27.8M47.5 23.6V25.4M48.5 23.1V25.9M49.5 23.5V25.5M50.5 23.5V25.5M51.5 21.8V27.2M52.5 23.9V25.1M53.5 23.9V25.1M54.5 23.9V25.1M55.5 23.9V25.1M56.5 23.9V25.1M57.5 23.9V25.1M58.5 23.9V25.1M59.5 23.9V25.1M60.5 23.9V25.1M61.5 23.9V25.1M62.5 23.7V25.3M63.5 23.5V25.5M64.5 23.8V25.2M65.5 23.0V26.0M66.5 21.8V27.2M67.5 23.3V25.7M68.5 23.3V25.7M69.5 23.2V25.8M70.5 22.2V26.8M71.5 23.9V25.1M72.5 23.9V25.1M73.5 23.9V25.1M74.5 22.6V26.4M75.5 21.8V27.2M76.5 23.8V25.2M77.5 22.4V26.6M78.5 23.7V25.3M79.5 20.8V28.2M80.5 22.1V26.9M81.5 23.7V25.3M82.5 21.5V27.5M83.5 21.9V27.1M84.5 22.4V26.6M85.5 23.2V25.8M86.5 21.8V27.2M87.5 22.5V26.5M88.5 23.9V25.1M89.5 23.9V25.1M90.5 23.9V25.1M91.5 23.9V25.1M92.5 23.9V25.1M93.5 23.9V25.1M94.5 23.9V25.1M95.5 23.4V25.6M96.5 23.4V25.6M97.5 23.2V25.8M98.5 23.7V25.3M99.5 23.9V25.1M100.5 23.9V25.1M101.5 23.9V25.1M102.5 23.9V25.1M103.5 23.9V25.1M104.5 23.9V25.1M105.5 23.9V25.1M106.5 23.9V25.1M107.5 23.9V25.1M108.5 23.9V25.1M109.5 23.9V25.1M110.5 23.9V25.1M111.5 23.9V25.1M112.5 23.9V25.1M113.5 23.9V25.1M114.5 23.9V25.1M115.5 23.9V25.1M116.5 23.9V25.1M117.5 23.9V25.1" stroke="#a5bcd7" stroke-width="1"/></svg>
<div class="rt">140 Bozo Sequence Fm 07<svg width="10.5" height="6" viewBox="0 0 11 6" style="margin-left:3.2px;vertical-align:-0.5px"><g fill="none" stroke="#dfe7f0" stroke-width="0.85"><path d="M1.6,5.2 C0.2,3.6 0.8,0.8 3,0.8 C5.2,0.8 5.8,3.6 4.4,5.2"/><path d="M6.6,5.2 C5.2,3.6 5.8,0.8 8,0.8 C10.2,0.8 10.8,3.6 9.4,5.2"/><path d="M0.3,5.5 H10.7"/></g></svg></div>
</div>
<div class="abs" style="left:646.5px;top:86px;width:2px;height:578px;background:#f4f4f4"></div>
<svg class="abs" style="left:642px;top:80.5px;" width="11" height="9" viewBox="0 0 11 9"><path d="M1,1.5 Q1,0.5 2,0.5 H9 Q10,0.5 10,1.5 V3 L6.5,8 H4.5 L1,3z" fill="#d8d8d8"/></svg>
</div>
</div>
</body></html>
